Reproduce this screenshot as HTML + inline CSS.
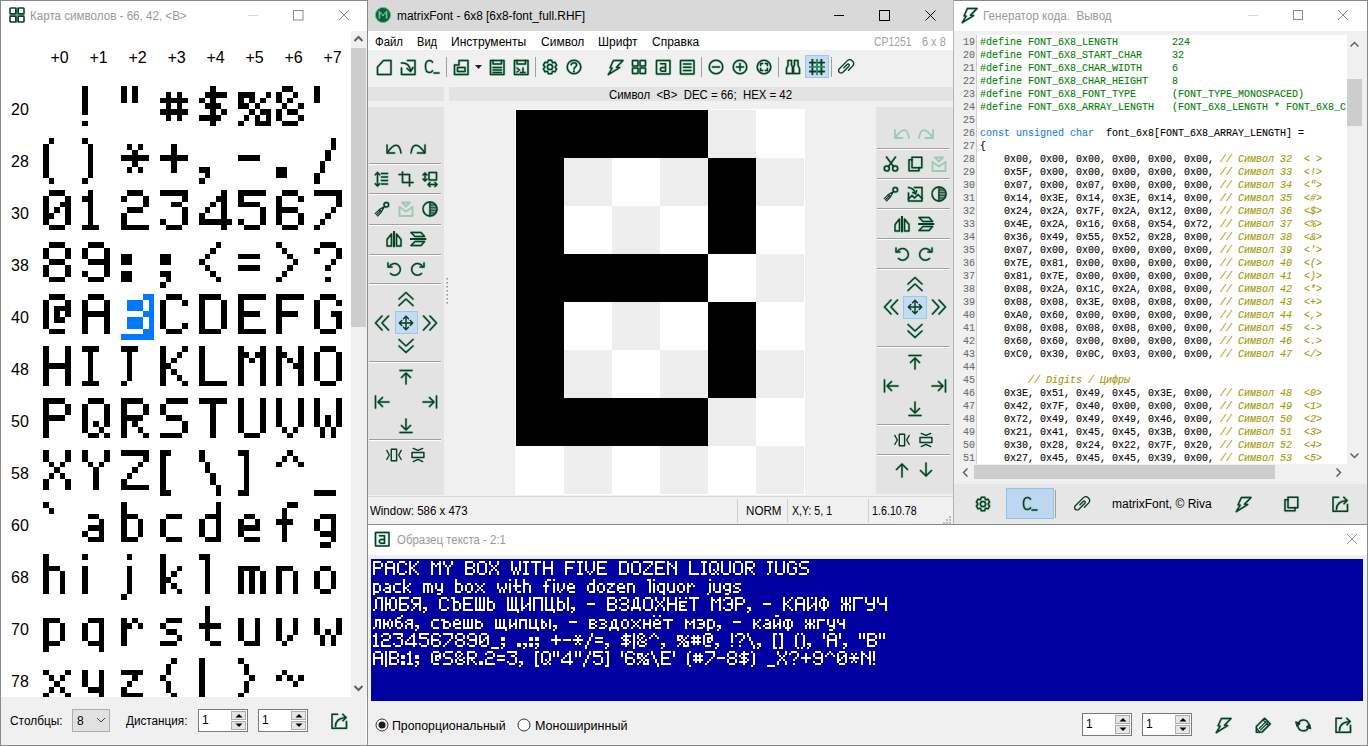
<!DOCTYPE html>
<html><head><meta charset="utf-8"><title>matrixFont</title>
<style>
html,body{margin:0;padding:0;width:1368px;height:746px;overflow:hidden;background:#f0f0f0;}
.a{position:absolute;display:block;}
.t{position:absolute;white-space:nowrap;font-family:"Liberation Sans",sans-serif;}
.m{position:absolute;white-space:pre;font-family:"Liberation Mono",monospace;font-size:10px;line-height:13px;-webkit-text-stroke:0.1px currentColor;}
</style></head><body>
<div class="a" style="left:0px;top:0px;width:367px;height:746px;background:#ffffff;"></div><div class="a" style="left:0px;top:0px;width:367px;height:1px;background:#8a8a8a;"></div><div class="a" style="left:0px;top:0px;width:1px;height:746px;background:#8a8a8a;"></div><div class="a" style="left:367px;top:0px;width:1px;height:746px;background:#8a8a8a;"></div><div class="a" style="left:0px;top:745px;width:368px;height:1px;background:#8a8a8a;"></div><svg class="a" style="left:9px;top:7px;" width="16" height="16" viewBox="0 0 16 16"><rect x="6.5" y="0.5" width="3" height="15" fill="#4ea57a"/><rect x="0.5" y="6.5" width="15" height="3" fill="#4ea57a"/><g fill="none" stroke="#0f3b27" stroke-width="1.6"><rect x="1" y="1" width="5.8" height="5.8" rx="0.8"/><rect x="9.2" y="1" width="5.8" height="5.8" rx="0.8"/><rect x="1" y="9.2" width="5.8" height="5.8" rx="0.8"/><rect x="9.2" y="9.2" width="5.8" height="5.8" rx="0.8"/></g></svg><div class="t" style="left:30px;top:8px;font-size:12px;line-height:16px;color:#999999;transform:scaleX(0.9673);transform-origin:0 0;">Карта символов - 66, 42, &lt;B&gt;</div><div class="a" style="left:248px;top:15px;width:10px;height:1px;background:#d6d6d6;"></div><svg class="a" style="left:292px;top:9px;" width="12" height="12" viewBox="0 0 12 12"><rect x="1.5" y="1.5" width="9.5" height="9.5" fill="none" stroke="#8c8c8c" stroke-width="1"/></svg><svg class="a" style="left:338px;top:9px;" width="12" height="12" viewBox="0 0 12 12"><path d="M1 1L11 11M11 1L1 11" stroke="#8c8c8c" stroke-width="1"/></svg><div class="t" style="left:39.5px;top:49px;width:40px;text-align:center;font-size:16px;line-height:18px;color:#000">+0</div><div class="t" style="left:78.5px;top:49px;width:40px;text-align:center;font-size:16px;line-height:18px;color:#000">+1</div><div class="t" style="left:117.5px;top:49px;width:40px;text-align:center;font-size:16px;line-height:18px;color:#000">+2</div><div class="t" style="left:156.5px;top:49px;width:40px;text-align:center;font-size:16px;line-height:18px;color:#000">+3</div><div class="t" style="left:195.5px;top:49px;width:40px;text-align:center;font-size:16px;line-height:18px;color:#000">+4</div><div class="t" style="left:234.5px;top:49px;width:40px;text-align:center;font-size:16px;line-height:18px;color:#000">+5</div><div class="t" style="left:273.5px;top:49px;width:40px;text-align:center;font-size:16px;line-height:18px;color:#000">+6</div><div class="t" style="left:312.5px;top:49px;width:40px;text-align:center;font-size:16px;line-height:18px;color:#000">+7</div><div class="t" style="left:11px;top:101px;font-size:16px;line-height:18px;color:#000">20</div><div class="t" style="left:11px;top:153px;font-size:16px;line-height:18px;color:#000">28</div><div class="t" style="left:11px;top:205px;font-size:16px;line-height:18px;color:#000">30</div><div class="t" style="left:11px;top:257px;font-size:16px;line-height:18px;color:#000">38</div><div class="t" style="left:11px;top:309px;font-size:16px;line-height:18px;color:#000">40</div><div class="t" style="left:11px;top:361px;font-size:16px;line-height:18px;color:#000">48</div><div class="t" style="left:11px;top:413px;font-size:16px;line-height:18px;color:#000">50</div><div class="t" style="left:11px;top:465px;font-size:16px;line-height:18px;color:#000">58</div><div class="t" style="left:11px;top:517px;font-size:16px;line-height:18px;color:#000">60</div><div class="t" style="left:11px;top:569px;font-size:16px;line-height:18px;color:#000">68</div><div class="t" style="left:11px;top:621px;font-size:16px;line-height:18px;color:#000">70</div><div class="t" style="left:11px;top:673px;font-size:16px;line-height:18px;color:#000">78</div><svg class="a" style="left:1px;top:30px;shape-rendering:crispEdges;" width="350" height="667" viewBox="0 0 350 667"><g transform="translate(-1,-30)"><path d="M82 86h6v6h-6zM82 92h6v6h-6zM82 98h6v5h-6zM82 103h6v6h-6zM82 109h6v6h-6zM82 121h6v5h-6zM121 86h6v6h-6zM121 92h6v6h-6zM121 98h6v5h-6zM132 86h6v6h-6zM132 92h6v6h-6zM132 98h6v5h-6zM160 98h6v5h-6zM160 109h6v6h-6zM166 92h5v6h-5zM166 98h5v5h-5zM166 103h5v6h-5zM166 109h5v6h-5zM166 115h5v6h-5zM171 98h6v5h-6zM171 109h6v6h-6zM177 92h5v6h-5zM177 98h5v5h-5zM177 103h5v6h-5zM177 109h5v6h-5zM177 115h5v6h-5zM182 98h6v5h-6zM182 109h6v6h-6zM199 98h6v5h-6zM199 115h6v6h-6zM205 92h5v6h-5zM205 103h5v6h-5zM205 115h5v6h-5zM210 86h6v6h-6zM210 92h6v6h-6zM210 98h6v5h-6zM210 103h6v6h-6zM210 109h6v6h-6zM210 115h6v6h-6zM210 121h6v5h-6zM216 92h5v6h-5zM216 103h5v6h-5zM216 115h5v6h-5zM221 92h6v6h-6zM221 109h6v6h-6zM238 92h6v6h-6zM238 98h6v5h-6zM238 103h6v6h-6zM238 121h6v5h-6zM244 92h5v6h-5zM244 103h5v6h-5zM244 115h5v6h-5zM249 92h6v6h-6zM249 98h6v5h-6zM249 109h6v6h-6zM255 103h5v6h-5zM255 115h5v6h-5zM255 121h5v5h-5zM260 98h6v5h-6zM260 109h6v6h-6zM260 121h6v5h-6zM266 92h5v6h-5zM266 109h5v6h-5zM266 115h5v6h-5zM266 121h5v5h-5zM276 92h6v6h-6zM276 98h6v5h-6zM276 109h6v6h-6zM276 115h6v6h-6zM282 86h5v6h-5zM282 103h5v6h-5zM282 121h5v5h-5zM287 86h6v6h-6zM287 98h6v5h-6zM287 109h6v6h-6zM287 121h6v5h-6zM293 92h5v6h-5zM293 109h5v6h-5zM293 121h5v5h-5zM298 103h6v6h-6zM298 115h6v6h-6zM314 86h6v6h-6zM314 92h6v6h-6zM314 98h6v5h-6zM43 144h6v6h-6zM43 150h6v5h-6zM43 155h6v6h-6zM43 161h6v6h-6zM43 167h6v6h-6zM43 173h6v5h-6zM49 138h5v6h-5zM49 178h5v6h-5zM82 138h6v6h-6zM82 178h6v6h-6zM88 144h5v6h-5zM88 150h5v5h-5zM88 155h5v6h-5zM88 161h5v6h-5zM88 167h5v6h-5zM88 173h5v5h-5zM121 155h6v6h-6zM127 144h5v6h-5zM127 155h5v6h-5zM127 167h5v6h-5zM132 150h6v5h-6zM132 155h6v6h-6zM132 161h6v6h-6zM138 144h5v6h-5zM138 155h5v6h-5zM138 167h5v6h-5zM143 155h6v6h-6zM160 155h6v6h-6zM166 155h5v6h-5zM171 144h6v6h-6zM171 150h6v5h-6zM171 155h6v6h-6zM171 161h6v6h-6zM171 167h6v6h-6zM177 155h5v6h-5zM182 155h6v6h-6zM199 167h6v6h-6zM199 178h6v6h-6zM205 167h5v6h-5zM205 173h5v5h-5zM238 155h6v6h-6zM244 155h5v6h-5zM249 155h6v6h-6zM255 155h5v6h-5zM276 167h6v6h-6zM276 173h6v5h-6zM282 167h5v6h-5zM282 173h5v5h-5zM314 173h6v5h-6zM314 178h6v6h-6zM320 161h5v6h-5zM320 167h5v6h-5zM325 150h6v5h-6zM325 155h6v6h-6zM331 138h5v6h-5zM331 144h5v6h-5zM43 196h6v6h-6zM43 202h6v5h-6zM43 207h6v6h-6zM43 213h6v6h-6zM43 219h6v6h-6zM49 190h5v6h-5zM49 213h5v6h-5zM49 225h5v5h-5zM54 190h6v6h-6zM54 207h6v6h-6zM54 225h6v5h-6zM60 190h5v6h-5zM60 202h5v5h-5zM60 225h5v5h-5zM65 196h6v6h-6zM65 202h6v5h-6zM65 207h6v6h-6zM65 213h6v6h-6zM65 219h6v6h-6zM82 196h6v6h-6zM82 225h6v5h-6zM88 190h5v6h-5zM88 196h5v6h-5zM88 202h5v5h-5zM88 207h5v6h-5zM88 213h5v6h-5zM88 219h5v6h-5zM88 225h5v5h-5zM93 225h6v5h-6zM121 196h6v6h-6zM121 213h6v6h-6zM121 219h6v6h-6zM121 225h6v5h-6zM127 190h5v6h-5zM127 207h5v6h-5zM127 225h5v5h-5zM132 190h6v6h-6zM132 207h6v6h-6zM132 225h6v5h-6zM138 190h5v6h-5zM138 207h5v6h-5zM138 225h5v5h-5zM143 196h6v6h-6zM143 202h6v5h-6zM143 225h6v5h-6zM160 190h6v6h-6zM160 219h6v6h-6zM166 190h5v6h-5zM166 225h5v5h-5zM171 190h6v6h-6zM171 202h6v5h-6zM171 225h6v5h-6zM177 190h5v6h-5zM177 202h5v5h-5zM177 225h5v5h-5zM182 190h6v6h-6zM182 196h6v6h-6zM182 207h6v6h-6zM182 213h6v6h-6zM182 219h6v6h-6zM199 213h6v6h-6zM199 219h6v6h-6zM205 207h5v6h-5zM205 219h5v6h-5zM210 202h6v5h-6zM210 219h6v6h-6zM216 196h5v6h-5zM216 219h5v6h-5zM221 190h6v6h-6zM221 196h6v6h-6zM221 202h6v5h-6zM221 207h6v6h-6zM221 213h6v6h-6zM221 219h6v6h-6zM221 225h6v5h-6zM227 219h5v6h-5zM238 190h6v6h-6zM238 196h6v6h-6zM238 202h6v5h-6zM238 219h6v6h-6zM244 190h5v6h-5zM244 202h5v5h-5zM244 225h5v5h-5zM249 190h6v6h-6zM249 202h6v5h-6zM249 225h6v5h-6zM255 190h5v6h-5zM255 202h5v5h-5zM255 225h5v5h-5zM260 190h6v6h-6zM260 207h6v6h-6zM260 213h6v6h-6zM260 219h6v6h-6zM276 196h6v6h-6zM276 202h6v5h-6zM276 207h6v6h-6zM276 213h6v6h-6zM276 219h6v6h-6zM282 190h5v6h-5zM282 207h5v6h-5zM282 225h5v5h-5zM287 190h6v6h-6zM287 207h6v6h-6zM287 225h6v5h-6zM293 190h5v6h-5zM293 207h5v6h-5zM293 225h5v5h-5zM298 196h6v6h-6zM298 213h6v6h-6zM298 219h6v6h-6zM314 190h6v6h-6zM314 225h6v5h-6zM320 190h5v6h-5zM320 219h5v6h-5zM325 190h6v6h-6zM325 213h6v6h-6zM331 190h5v6h-5zM331 207h5v6h-5zM336 190h6v6h-6zM336 196h6v6h-6zM336 202h6v5h-6zM43 248h6v6h-6zM43 254h6v5h-6zM43 265h6v6h-6zM43 271h6v6h-6zM49 242h5v6h-5zM49 259h5v6h-5zM49 277h5v5h-5zM54 242h6v6h-6zM54 259h6v6h-6zM54 277h6v5h-6zM60 242h5v6h-5zM60 259h5v6h-5zM60 277h5v5h-5zM65 248h6v6h-6zM65 254h6v5h-6zM65 265h6v6h-6zM65 271h6v6h-6zM82 248h6v6h-6zM82 254h6v5h-6zM82 271h6v6h-6zM88 242h5v6h-5zM88 259h5v6h-5zM88 277h5v5h-5zM93 242h6v6h-6zM93 259h6v6h-6zM93 277h6v5h-6zM99 242h5v6h-5zM99 259h5v6h-5zM99 277h5v5h-5zM104 248h6v6h-6zM104 254h6v5h-6zM104 259h6v6h-6zM104 265h6v6h-6zM104 271h6v6h-6zM121 254h6v5h-6zM121 259h6v6h-6zM121 271h6v6h-6zM121 277h6v5h-6zM127 254h5v5h-5zM127 259h5v6h-5zM127 271h5v6h-5zM127 277h5v5h-5zM160 254h6v5h-6zM160 259h6v6h-6zM160 271h6v6h-6zM160 282h6v6h-6zM166 254h5v5h-5zM166 259h5v6h-5zM166 271h5v6h-5zM166 277h5v5h-5zM199 259h6v6h-6zM205 254h5v5h-5zM205 265h5v6h-5zM210 248h6v6h-6zM210 271h6v6h-6zM216 242h5v6h-5zM216 277h5v5h-5zM238 254h6v5h-6zM238 265h6v6h-6zM244 254h5v5h-5zM244 265h5v6h-5zM249 254h6v5h-6zM249 265h6v6h-6zM255 254h5v5h-5zM255 265h5v6h-5zM276 242h6v6h-6zM276 277h6v5h-6zM282 248h5v6h-5zM282 271h5v6h-5zM287 254h6v5h-6zM287 265h6v6h-6zM293 259h5v6h-5zM314 248h6v6h-6zM320 242h5v6h-5zM325 242h6v6h-6zM325 265h6v6h-6zM325 277h6v5h-6zM331 242h5v6h-5zM331 259h5v6h-5zM336 248h6v6h-6zM336 254h6v5h-6zM43 300h6v6h-6zM43 306h6v5h-6zM43 311h6v6h-6zM43 317h6v6h-6zM43 323h6v6h-6zM49 294h5v6h-5zM49 329h5v5h-5zM54 294h6v6h-6zM54 306h6v5h-6zM54 311h6v6h-6zM54 317h6v6h-6zM54 329h6v5h-6zM60 294h5v6h-5zM60 306h5v5h-5zM60 317h5v6h-5zM60 329h5v5h-5zM65 300h6v6h-6zM65 306h6v5h-6zM65 311h6v6h-6zM82 300h6v6h-6zM82 306h6v5h-6zM82 311h6v6h-6zM82 317h6v6h-6zM82 323h6v6h-6zM82 329h6v5h-6zM88 294h5v6h-5zM88 311h5v6h-5zM93 294h6v6h-6zM93 311h6v6h-6zM99 294h5v6h-5zM99 311h5v6h-5zM104 300h6v6h-6zM104 306h6v5h-6zM104 311h6v6h-6zM104 317h6v6h-6zM104 323h6v6h-6zM104 329h6v5h-6zM160 300h6v6h-6zM160 306h6v5h-6zM160 311h6v6h-6zM160 317h6v6h-6zM160 323h6v6h-6zM166 294h5v6h-5zM166 329h5v5h-5zM171 294h6v6h-6zM171 329h6v5h-6zM177 294h5v6h-5zM177 329h5v5h-5zM182 300h6v6h-6zM182 323h6v6h-6zM199 294h6v6h-6zM199 300h6v6h-6zM199 306h6v5h-6zM199 311h6v6h-6zM199 317h6v6h-6zM199 323h6v6h-6zM199 329h6v5h-6zM205 294h5v6h-5zM205 329h5v5h-5zM210 294h6v6h-6zM210 329h6v5h-6zM216 294h5v6h-5zM216 329h5v5h-5zM221 300h6v6h-6zM221 306h6v5h-6zM221 311h6v6h-6zM221 317h6v6h-6zM221 323h6v6h-6zM238 294h6v6h-6zM238 300h6v6h-6zM238 306h6v5h-6zM238 311h6v6h-6zM238 317h6v6h-6zM238 323h6v6h-6zM238 329h6v5h-6zM244 294h5v6h-5zM244 311h5v6h-5zM244 329h5v5h-5zM249 294h6v6h-6zM249 311h6v6h-6zM249 329h6v5h-6zM255 294h5v6h-5zM255 311h5v6h-5zM255 329h5v5h-5zM260 294h6v6h-6zM260 329h6v5h-6zM276 294h6v6h-6zM276 300h6v6h-6zM276 306h6v5h-6zM276 311h6v6h-6zM276 317h6v6h-6zM276 323h6v6h-6zM276 329h6v5h-6zM282 294h5v6h-5zM282 311h5v6h-5zM287 294h6v6h-6zM287 311h6v6h-6zM293 294h5v6h-5zM293 311h5v6h-5zM298 294h6v6h-6zM314 300h6v6h-6zM314 306h6v5h-6zM314 311h6v6h-6zM314 317h6v6h-6zM314 323h6v6h-6zM320 294h5v6h-5zM320 329h5v5h-5zM325 294h6v6h-6zM325 329h6v5h-6zM331 294h5v6h-5zM331 311h5v6h-5zM331 329h5v5h-5zM336 300h6v6h-6zM336 311h6v6h-6zM336 317h6v6h-6zM336 323h6v6h-6zM43 346h6v6h-6zM43 352h6v6h-6zM43 358h6v5h-6zM43 363h6v6h-6zM43 369h6v6h-6zM43 375h6v6h-6zM43 381h6v5h-6zM49 363h5v6h-5zM54 363h6v6h-6zM60 363h5v6h-5zM65 346h6v6h-6zM65 352h6v6h-6zM65 358h6v5h-6zM65 363h6v6h-6zM65 369h6v6h-6zM65 375h6v6h-6zM65 381h6v5h-6zM82 346h6v6h-6zM82 381h6v5h-6zM88 346h5v6h-5zM88 352h5v6h-5zM88 358h5v5h-5zM88 363h5v6h-5zM88 369h5v6h-5zM88 375h5v6h-5zM88 381h5v5h-5zM93 346h6v6h-6zM93 381h6v5h-6zM121 346h6v6h-6zM121 381h6v5h-6zM127 346h5v6h-5zM127 352h5v6h-5zM127 358h5v5h-5zM127 363h5v6h-5zM127 369h5v6h-5zM127 375h5v6h-5zM132 346h6v6h-6zM160 346h6v6h-6zM160 352h6v6h-6zM160 358h6v5h-6zM160 363h6v6h-6zM160 369h6v6h-6zM160 375h6v6h-6zM160 381h6v5h-6zM166 363h5v6h-5zM171 358h6v5h-6zM171 369h6v6h-6zM177 352h5v6h-5zM177 375h5v6h-5zM182 346h6v6h-6zM182 381h6v5h-6zM199 346h6v6h-6zM199 352h6v6h-6zM199 358h6v5h-6zM199 363h6v6h-6zM199 369h6v6h-6zM199 375h6v6h-6zM199 381h6v5h-6zM205 381h5v5h-5zM210 381h6v5h-6zM216 381h5v5h-5zM221 381h6v5h-6zM238 346h6v6h-6zM238 352h6v6h-6zM238 358h6v5h-6zM238 363h6v6h-6zM238 369h6v6h-6zM238 375h6v6h-6zM238 381h6v5h-6zM244 352h5v6h-5zM249 358h6v5h-6zM255 352h5v6h-5zM260 346h6v6h-6zM260 352h6v6h-6zM260 358h6v5h-6zM260 363h6v6h-6zM260 369h6v6h-6zM260 375h6v6h-6zM260 381h6v5h-6zM276 346h6v6h-6zM276 352h6v6h-6zM276 358h6v5h-6zM276 363h6v6h-6zM276 369h6v6h-6zM276 375h6v6h-6zM276 381h6v5h-6zM282 352h5v6h-5zM287 358h6v5h-6zM293 363h5v6h-5zM298 346h6v6h-6zM298 352h6v6h-6zM298 358h6v5h-6zM298 363h6v6h-6zM298 369h6v6h-6zM298 375h6v6h-6zM298 381h6v5h-6zM314 352h6v6h-6zM314 358h6v5h-6zM314 363h6v6h-6zM314 369h6v6h-6zM314 375h6v6h-6zM320 346h5v6h-5zM320 381h5v5h-5zM325 346h6v6h-6zM325 381h6v5h-6zM331 346h5v6h-5zM331 381h5v5h-5zM336 352h6v6h-6zM336 358h6v5h-6zM336 363h6v6h-6zM336 369h6v6h-6zM336 375h6v6h-6zM43 398h6v6h-6zM43 404h6v6h-6zM43 410h6v5h-6zM43 415h6v6h-6zM43 421h6v6h-6zM43 427h6v6h-6zM43 433h6v5h-6zM49 398h5v6h-5zM49 415h5v6h-5zM54 398h6v6h-6zM54 415h6v6h-6zM60 398h5v6h-5zM60 415h5v6h-5zM65 404h6v6h-6zM65 410h6v5h-6zM82 404h6v6h-6zM82 410h6v5h-6zM82 415h6v6h-6zM82 421h6v6h-6zM82 427h6v6h-6zM88 398h5v6h-5zM88 433h5v5h-5zM93 398h6v6h-6zM93 421h6v6h-6zM93 433h6v5h-6zM99 398h5v6h-5zM99 427h5v6h-5zM104 404h6v6h-6zM104 410h6v5h-6zM104 415h6v6h-6zM104 421h6v6h-6zM104 433h6v5h-6zM121 398h6v6h-6zM121 404h6v6h-6zM121 410h6v5h-6zM121 415h6v6h-6zM121 421h6v6h-6zM121 427h6v6h-6zM121 433h6v5h-6zM127 398h5v6h-5zM127 415h5v6h-5zM132 398h6v6h-6zM132 415h6v6h-6zM132 421h6v6h-6zM138 398h5v6h-5zM138 415h5v6h-5zM138 427h5v6h-5zM143 404h6v6h-6zM143 410h6v5h-6zM143 433h6v5h-6zM160 404h6v6h-6zM160 410h6v5h-6zM160 433h6v5h-6zM166 398h5v6h-5zM166 415h5v6h-5zM166 433h5v5h-5zM171 398h6v6h-6zM171 415h6v6h-6zM171 433h6v5h-6zM177 398h5v6h-5zM177 415h5v6h-5zM177 433h5v5h-5zM182 398h6v6h-6zM182 421h6v6h-6zM182 427h6v6h-6zM199 398h6v6h-6zM205 398h5v6h-5zM210 398h6v6h-6zM210 404h6v6h-6zM210 410h6v5h-6zM210 415h6v6h-6zM210 421h6v6h-6zM210 427h6v6h-6zM210 433h6v5h-6zM216 398h5v6h-5zM221 398h6v6h-6zM238 398h6v6h-6zM238 404h6v6h-6zM238 410h6v5h-6zM238 415h6v6h-6zM238 421h6v6h-6zM238 427h6v6h-6zM244 433h5v5h-5zM249 433h6v5h-6zM255 433h5v5h-5zM260 398h6v6h-6zM260 404h6v6h-6zM260 410h6v5h-6zM260 415h6v6h-6zM260 421h6v6h-6zM260 427h6v6h-6zM276 398h6v6h-6zM276 404h6v6h-6zM276 410h6v5h-6zM276 415h6v6h-6zM276 421h6v6h-6zM282 427h5v6h-5zM287 433h6v5h-6zM293 427h5v6h-5zM298 398h6v6h-6zM298 404h6v6h-6zM298 410h6v5h-6zM298 415h6v6h-6zM298 421h6v6h-6zM314 398h6v6h-6zM314 404h6v6h-6zM314 410h6v5h-6zM314 415h6v6h-6zM314 421h6v6h-6zM320 427h5v6h-5zM320 433h5v5h-5zM325 415h6v6h-6zM325 421h6v6h-6zM331 427h5v6h-5zM331 433h5v5h-5zM336 398h6v6h-6zM336 404h6v6h-6zM336 410h6v5h-6zM336 415h6v6h-6zM336 421h6v6h-6zM43 450h6v6h-6zM43 456h6v6h-6zM43 479h6v6h-6zM43 485h6v5h-6zM49 462h5v5h-5zM49 473h5v6h-5zM54 467h6v6h-6zM60 462h5v5h-5zM60 473h5v6h-5zM65 450h6v6h-6zM65 456h6v6h-6zM65 479h6v6h-6zM65 485h6v5h-6zM82 450h6v6h-6zM82 456h6v6h-6zM88 462h5v5h-5zM93 467h6v6h-6zM93 473h6v6h-6zM93 479h6v6h-6zM93 485h6v5h-6zM99 462h5v5h-5zM104 450h6v6h-6zM104 456h6v6h-6zM121 450h6v6h-6zM121 479h6v6h-6zM121 485h6v5h-6zM127 450h5v6h-5zM127 473h5v6h-5zM127 485h5v5h-5zM132 450h6v6h-6zM132 467h6v6h-6zM132 485h6v5h-6zM138 450h5v6h-5zM138 462h5v5h-5zM138 485h5v5h-5zM143 450h6v6h-6zM143 456h6v6h-6zM143 485h6v5h-6zM160 450h6v6h-6zM160 456h6v6h-6zM160 462h6v5h-6zM160 467h6v6h-6zM160 473h6v6h-6zM160 479h6v6h-6zM160 485h6v5h-6zM160 490h6v6h-6zM166 450h5v6h-5zM166 490h5v6h-5zM199 450h6v6h-6zM199 456h6v6h-6zM205 462h5v5h-5zM205 467h5v6h-5zM210 473h6v6h-6zM210 479h6v6h-6zM216 485h5v5h-5zM216 490h5v6h-5zM238 450h6v6h-6zM238 490h6v6h-6zM244 450h5v6h-5zM244 456h5v6h-5zM244 462h5v5h-5zM244 467h5v6h-5zM244 473h5v6h-5zM244 479h5v6h-5zM244 485h5v5h-5zM244 490h5v6h-5zM276 462h6v5h-6zM282 456h5v6h-5zM287 450h6v6h-6zM293 456h5v6h-5zM298 462h6v5h-6zM314 490h6v6h-6zM320 490h5v6h-5zM325 490h6v6h-6zM331 490h5v6h-5zM43 502h6v6h-6zM49 508h5v6h-5zM82 531h6v6h-6zM88 514h5v5h-5zM88 525h5v6h-5zM88 537h5v5h-5zM93 514h6v5h-6zM93 525h6v6h-6zM93 537h6v5h-6zM99 519h5v6h-5zM99 525h5v6h-5zM99 531h5v6h-5zM99 537h5v5h-5zM121 502h6v6h-6zM121 508h6v6h-6zM121 514h6v5h-6zM121 519h6v6h-6zM121 525h6v6h-6zM121 531h6v6h-6zM121 537h6v5h-6zM127 514h5v5h-5zM127 537h5v5h-5zM132 514h6v5h-6zM132 537h6v5h-6zM138 519h5v6h-5zM138 525h5v6h-5zM138 531h5v6h-5zM160 519h6v6h-6zM160 525h6v6h-6zM160 531h6v6h-6zM166 514h5v5h-5zM166 537h5v5h-5zM171 514h6v5h-6zM171 537h6v5h-6zM177 514h5v5h-5zM177 537h5v5h-5zM199 519h6v6h-6zM199 525h6v6h-6zM199 531h6v6h-6zM205 514h5v5h-5zM205 537h5v5h-5zM210 514h6v5h-6zM210 537h6v5h-6zM216 502h5v6h-5zM216 508h5v6h-5zM216 514h5v5h-5zM216 519h5v6h-5zM216 525h5v6h-5zM216 531h5v6h-5zM216 537h5v5h-5zM238 519h6v6h-6zM238 525h6v6h-6zM238 531h6v6h-6zM244 514h5v5h-5zM244 525h5v6h-5zM244 537h5v5h-5zM249 514h6v5h-6zM249 525h6v6h-6zM249 537h6v5h-6zM255 519h5v6h-5zM255 525h5v6h-5zM255 537h5v5h-5zM276 519h6v6h-6zM282 508h5v6h-5zM282 514h5v5h-5zM282 519h5v6h-5zM282 525h5v6h-5zM282 531h5v6h-5zM282 537h5v5h-5zM287 502h6v6h-6zM287 519h6v6h-6zM293 502h5v6h-5zM314 519h6v6h-6zM314 525h6v6h-6zM320 514h5v5h-5zM320 531h5v6h-5zM320 542h5v6h-5zM325 514h6v5h-6zM325 531h6v6h-6zM325 542h6v6h-6zM331 514h5v5h-5zM331 519h5v6h-5zM331 525h5v6h-5zM331 531h5v6h-5zM331 537h5v5h-5zM43 554h6v6h-6zM43 560h6v6h-6zM43 566h6v5h-6zM43 571h6v6h-6zM43 577h6v6h-6zM43 583h6v6h-6zM43 589h6v5h-6zM49 566h5v5h-5zM54 566h6v5h-6zM60 571h5v6h-5zM60 577h5v6h-5zM60 583h5v6h-5zM60 589h5v5h-5zM82 554h6v6h-6zM82 566h6v5h-6zM82 571h6v6h-6zM82 577h6v6h-6zM82 583h6v6h-6zM82 589h6v5h-6zM121 594h6v6h-6zM127 554h5v6h-5zM127 566h5v5h-5zM127 571h5v6h-5zM127 577h5v6h-5zM127 583h5v6h-5zM127 589h5v5h-5zM160 554h6v6h-6zM160 560h6v6h-6zM160 566h6v5h-6zM160 571h6v6h-6zM160 577h6v6h-6zM160 583h6v6h-6zM160 589h6v5h-6zM166 577h5v6h-5zM171 571h6v6h-6zM171 583h6v6h-6zM177 566h5v5h-5zM177 589h5v5h-5zM199 554h6v6h-6zM205 554h5v6h-5zM205 560h5v6h-5zM205 566h5v5h-5zM205 571h5v6h-5zM205 577h5v6h-5zM205 583h5v6h-5zM205 589h5v5h-5zM238 566h6v5h-6zM238 571h6v6h-6zM238 577h6v6h-6zM238 583h6v6h-6zM238 589h6v5h-6zM244 566h5v5h-5zM249 566h6v5h-6zM249 571h6v6h-6zM249 577h6v6h-6zM249 583h6v6h-6zM249 589h6v5h-6zM255 566h5v5h-5zM260 571h6v6h-6zM260 577h6v6h-6zM260 583h6v6h-6zM260 589h6v5h-6zM276 566h6v5h-6zM276 571h6v6h-6zM276 577h6v6h-6zM276 583h6v6h-6zM276 589h6v5h-6zM282 566h5v5h-5zM287 566h6v5h-6zM293 571h5v6h-5zM293 577h5v6h-5zM293 583h5v6h-5zM293 589h5v5h-5zM314 571h6v6h-6zM314 577h6v6h-6zM314 583h6v6h-6zM320 566h5v5h-5zM320 589h5v5h-5zM325 566h6v5h-6zM325 589h6v5h-6zM331 571h5v6h-5zM331 577h5v6h-5zM331 583h5v6h-5zM43 618h6v5h-6zM43 623h6v6h-6zM43 629h6v6h-6zM43 635h6v6h-6zM43 641h6v5h-6zM43 646h6v6h-6zM49 618h5v5h-5zM49 641h5v5h-5zM54 618h6v5h-6zM54 641h6v5h-6zM60 623h5v6h-5zM60 629h5v6h-5zM60 635h5v6h-5zM82 623h6v6h-6zM82 629h6v6h-6zM82 635h6v6h-6zM88 618h5v5h-5zM88 641h5v5h-5zM93 618h6v5h-6zM93 641h6v5h-6zM99 618h5v5h-5zM99 623h5v6h-5zM99 629h5v6h-5zM99 635h5v6h-5zM99 641h5v5h-5zM99 646h5v6h-5zM121 618h6v5h-6zM121 623h6v6h-6zM121 629h6v6h-6zM121 635h6v6h-6zM121 641h6v5h-6zM127 623h5v6h-5zM132 618h6v5h-6zM138 623h5v6h-5zM160 623h6v6h-6zM160 641h6v5h-6zM166 618h5v5h-5zM166 629h5v6h-5zM166 641h5v5h-5zM171 618h6v5h-6zM171 629h6v6h-6zM171 641h6v5h-6zM177 618h5v5h-5zM177 635h5v6h-5zM199 623h6v6h-6zM205 606h5v6h-5zM205 612h5v6h-5zM205 618h5v5h-5zM205 623h5v6h-5zM205 629h5v6h-5zM205 635h5v6h-5zM210 623h6v6h-6zM210 641h6v5h-6zM216 623h5v6h-5zM216 641h5v5h-5zM238 618h6v5h-6zM238 623h6v6h-6zM238 629h6v6h-6zM238 635h6v6h-6zM244 641h5v5h-5zM249 641h6v5h-6zM255 618h5v5h-5zM255 623h5v6h-5zM255 629h5v6h-5zM255 635h5v6h-5zM255 641h5v5h-5zM276 618h6v5h-6zM276 623h6v6h-6zM276 629h6v6h-6zM276 635h6v6h-6zM282 641h5v5h-5zM287 635h6v6h-6zM293 618h5v5h-5zM293 623h5v6h-5zM293 629h5v6h-5zM314 618h6v5h-6zM314 623h6v6h-6zM314 629h6v6h-6zM320 635h5v6h-5zM320 641h5v5h-5zM325 629h6v6h-6zM331 635h5v6h-5zM331 641h5v5h-5zM336 618h6v5h-6zM336 623h6v6h-6zM336 629h6v6h-6zM43 670h6v5h-6zM43 693h6v5h-6zM49 675h5v6h-5zM49 687h5v6h-5zM54 681h6v6h-6zM60 675h5v6h-5zM60 687h5v6h-5zM65 670h6v5h-6zM65 693h6v5h-6zM82 670h6v5h-6zM82 675h6v6h-6zM82 681h6v6h-6zM88 687h5v6h-5zM88 698h5v6h-5zM93 687h6v6h-6zM93 698h6v6h-6zM99 670h5v5h-5zM99 675h5v6h-5zM99 681h5v6h-5zM99 687h5v6h-5zM99 693h5v5h-5zM121 670h6v5h-6zM121 687h6v6h-6zM121 693h6v5h-6zM127 670h5v5h-5zM127 681h5v6h-5zM127 693h5v5h-5zM132 670h6v5h-6zM132 675h6v6h-6zM132 693h6v5h-6zM138 670h5v5h-5zM138 693h5v5h-5zM160 675h6v6h-6zM166 664h5v6h-5zM166 670h5v5h-5zM166 681h5v6h-5zM166 687h5v6h-5zM171 658h6v6h-6zM171 693h6v5h-6zM199 658h6v6h-6zM199 664h6v6h-6zM199 670h6v5h-6zM199 675h6v6h-6zM199 681h6v6h-6zM199 687h6v6h-6zM199 693h6v5h-6zM199 698h6v6h-6zM238 658h6v6h-6zM238 693h6v5h-6zM244 664h5v6h-5zM244 670h5v5h-5zM244 681h5v6h-5zM244 687h5v6h-5zM249 675h6v6h-6zM276 675h6v6h-6zM282 670h5v5h-5zM287 675h6v6h-6zM293 681h5v6h-5zM298 675h6v6h-6z" fill="#000"/><path d="M121 334h6v6h-6zM127 300h5v6h-5zM127 306h5v5h-5zM127 317h5v6h-5zM127 323h5v6h-5zM127 334h5v6h-5zM132 300h6v6h-6zM132 306h6v5h-6zM132 317h6v6h-6zM132 323h6v6h-6zM132 334h6v6h-6zM138 300h5v6h-5zM138 306h5v5h-5zM138 317h5v6h-5zM138 323h5v6h-5zM138 334h5v6h-5zM143 294h6v6h-6zM143 311h6v6h-6zM143 329h6v5h-6zM143 334h6v6h-6zM149 294h5v6h-5zM149 300h5v6h-5zM149 306h5v5h-5zM149 311h5v6h-5zM149 317h5v6h-5zM149 323h5v6h-5zM149 329h5v5h-5zM149 334h5v6h-5z" fill="#0078ff"/></g></svg><div class="a" style="left:351px;top:31px;width:16px;height:666px;background:#f0f0f0;"></div><div class="a" style="left:351px;top:48px;width:15px;height:279px;background:#cdcdcd;"></div><svg class="a" style="left:353px;top:34px;" width="11" height="10" viewBox="0 0 11 10"><path d="M1.5 7L5.5 3L9.5 7" fill="none" stroke="#606060" stroke-width="2"/></svg><svg class="a" style="left:353px;top:683px;" width="11" height="10" viewBox="0 0 11 10"><path d="M1.5 3L5.5 7L9.5 3" fill="none" stroke="#606060" stroke-width="2"/></svg><div class="a" style="left:1px;top:697px;width:365px;height:48px;background:#f0f0f0;"></div><div class="t" style="left:9.5px;top:713px;font-size:12px;line-height:16px;color:#000;transform:scaleX(0.9898);transform-origin:0 0;">Столбцы:</div><div class="a" style="left:72px;top:709px;width:38px;height:23px;background:#e1e1e1;border:1px solid #adadad;box-sizing:border-box;"></div><div class="t" style="left:77px;top:713px;font-size:12px;line-height:16px;color:#000;">8</div><svg class="a" style="left:96px;top:716px;" width="10" height="8" viewBox="0 0 10 8"><path d="M1 2L5 6L9 2" fill="none" stroke="#444" stroke-width="1"/></svg><div class="t" style="left:126px;top:713px;font-size:12px;line-height:16px;color:#000;transform:scaleX(0.9763);transform-origin:0 0;">Дистанция:</div><div class="a" style="left:198px;top:709px;width:50px;height:23px;background:#ffffff;border:1px solid #7a7a7a;box-sizing:border-box;"></div><div class="t" style="left:202px;top:712px;font-size:12px;line-height:16px;color:#000;">1</div><div class="a" style="left:231px;top:711px;width:15px;height:9px;background:#e6e6e6;border:1px solid #adadad;box-sizing:border-box;"></div><div class="a" style="left:231px;top:721px;width:15px;height:9px;background:#e6e6e6;border:1px solid #adadad;box-sizing:border-box;"></div><svg class="a" style="left:235px;top:713px;" width="8" height="5" viewBox="0 0 8 5"><path d="M0.5 4.5L4 1L7.5 4.5Z" fill="#000"/></svg><svg class="a" style="left:235px;top:723px;" width="8" height="5" viewBox="0 0 8 5"><path d="M0.5 0.5L4 4L7.5 0.5Z" fill="#000"/></svg><div class="a" style="left:258px;top:709px;width:50px;height:23px;background:#ffffff;border:1px solid #7a7a7a;box-sizing:border-box;"></div><div class="t" style="left:262px;top:712px;font-size:12px;line-height:16px;color:#000;">1</div><div class="a" style="left:291px;top:711px;width:15px;height:9px;background:#e6e6e6;border:1px solid #adadad;box-sizing:border-box;"></div><div class="a" style="left:291px;top:721px;width:15px;height:9px;background:#e6e6e6;border:1px solid #adadad;box-sizing:border-box;"></div><svg class="a" style="left:295px;top:713px;" width="8" height="5" viewBox="0 0 8 5"><path d="M0.5 4.5L4 1L7.5 4.5Z" fill="#000"/></svg><svg class="a" style="left:295px;top:723px;" width="8" height="5" viewBox="0 0 8 5"><path d="M0.5 0.5L4 4L7.5 0.5Z" fill="#000"/></svg><svg class="a" style="left:331px;top:713px;" width="17" height="17" viewBox="0 0 17 17"><g fill="none" stroke="#56c08a" stroke-opacity="0.45" stroke-width="2.8" stroke-linecap="round" stroke-linejoin="round"><path d="M6.5 1.3H1V15.3H15.5V8.5"/><path d="M4.5 13.5C4.5 8.5 7.5 5 14.8 4.5"/><path d="M11.8 1.3L15 4.5L12 7.8"/></g><g fill="none" stroke="#0f3b27" stroke-width="1.5" stroke-linecap="round" stroke-linejoin="round"><path d="M6.5 1.3H1V15.3H15.5V8.5"/><path d="M4.5 13.5C4.5 8.5 7.5 5 14.8 4.5"/><path d="M11.8 1.3L15 4.5L12 7.8"/></g></svg><div class="a" style="left:367px;top:0px;width:586px;height:525px;background:#f0f0f0;"></div><div class="a" style="left:367px;top:0px;width:586px;height:31px;background:#d9d9d9;"></div><svg class="a" style="left:374px;top:6px;" width="18" height="18" viewBox="0 0 18 18"><circle cx="9" cy="9" r="7.6" fill="#145c3e" stroke="#4fc48a" stroke-width="0.9"/><g fill="#5ccf96"><rect x="4.6" y="5" width="1.6" height="7.6"/><rect x="11.8" y="5" width="1.6" height="7.6"/><rect x="6.2" y="6.6" width="1.7" height="1.6"/><rect x="10.1" y="6.6" width="1.7" height="1.6"/><rect x="7.9" y="8.2" width="2.2" height="1.7"/></g></svg><div class="t" style="left:397px;top:8px;font-size:12px;line-height:16px;color:#000;transform:scaleX(0.9894);transform-origin:0 0;">matrixFont - 6x8 [6x8-font_full.RHF]</div><div class="a" style="left:834px;top:15px;width:10px;height:1px;background:#000;"></div><svg class="a" style="left:879px;top:10px;" width="11" height="11" viewBox="0 0 11 11"><rect x="0.5" y="0.5" width="10" height="10" fill="none" stroke="#000" stroke-width="1"/></svg><svg class="a" style="left:925px;top:10px;" width="11" height="11" viewBox="0 0 11 11"><path d="M0.5 0.5L10.5 10.5M10.5 0.5L0.5 10.5" stroke="#000" stroke-width="1"/></svg><div class="a" style="left:367px;top:31px;width:586px;height:19px;background:#ffffff;"></div><div class="t" style="left:374.5px;top:33.5px;font-size:12px;line-height:16px;color:#000;transform:scaleX(0.9492);transform-origin:0 0;">Файл</div><div class="t" style="left:417.2px;top:33.5px;font-size:12px;line-height:16px;color:#000;transform:scaleX(0.9215);transform-origin:0 0;">Вид</div><div class="t" style="left:451.2px;top:33.5px;font-size:12px;line-height:16px;color:#000;transform:scaleX(1.0052);transform-origin:0 0;">Инструменты</div><div class="t" style="left:541px;top:33.5px;font-size:12px;line-height:16px;color:#000;transform:scaleX(1.0008);transform-origin:0 0;">Символ</div><div class="t" style="left:598px;top:33.5px;font-size:12px;line-height:16px;color:#000;transform:scaleX(1.0004);transform-origin:0 0;">Шрифт</div><div class="t" style="left:652px;top:33.5px;font-size:12px;line-height:16px;color:#000;transform:scaleX(1.0005);transform-origin:0 0;">Справка</div><div class="t" style="left:874px;top:33.5px;font-size:12px;line-height:16px;color:#a0a0a0;transform:scaleX(0.8626);transform-origin:0 0;">CP1251</div><div class="t" style="left:922px;top:33.5px;font-size:12px;line-height:16px;color:#a0a0a0;transform:scaleX(0.9115);transform-origin:0 0;">6 x 8</div><svg class="a" style="left:376px;top:59px;" width="17" height="17" viewBox="0 0 17 17"><g fill="none" stroke="#56c08a" stroke-opacity="0.45" stroke-width="2.8" stroke-linecap="round" stroke-linejoin="round"><path d="M1.5 8L7.5 1.5H15V15.5H1.5Z"/></g><g fill="none" stroke="#0f3b27" stroke-width="1.5" stroke-linecap="round" stroke-linejoin="round"><path d="M1.5 8L7.5 1.5H15V15.5H1.5Z"/></g></svg><svg class="a" style="left:400px;top:59px;" width="17" height="17" viewBox="0 0 17 17"><g fill="none" stroke="#56c08a" stroke-opacity="0.45" stroke-width="2.8" stroke-linecap="round" stroke-linejoin="round"><path d="M7.5 1.5H15V15.5H1.5V9"/><path d="M1.5 4C6 3.5 9.5 6 10.5 11.5"/><path d="M7 9.5L10.5 12.5L13 8.5"/></g><g fill="none" stroke="#0f3b27" stroke-width="1.5" stroke-linecap="round" stroke-linejoin="round"><path d="M7.5 1.5H15V15.5H1.5V9"/><path d="M1.5 4C6 3.5 9.5 6 10.5 11.5"/><path d="M7 9.5L10.5 12.5L13 8.5"/></g></svg><svg class="a" style="left:423px;top:59px;" width="17" height="17" viewBox="0 0 17 17"><g fill="none" stroke="#56c08a" stroke-opacity="0.45" stroke-width="2.8" stroke-linecap="round" stroke-linejoin="round"><path d="M9.5 3.2C8.8 2 7.8 1.5 6.5 1.5C4 1.5 2.5 3.5 2.5 7.5C2.5 11.5 4 13.5 6.5 13.5C7.8 13.5 8.8 13 9.5 11.8"/><path d="M11 14H16"/></g><g fill="none" stroke="#0f3b27" stroke-width="1.5" stroke-linecap="round" stroke-linejoin="round"><path d="M9.5 3.2C8.8 2 7.8 1.5 6.5 1.5C4 1.5 2.5 3.5 2.5 7.5C2.5 11.5 4 13.5 6.5 13.5C7.8 13.5 8.8 13 9.5 11.8"/><path d="M11 14H16"/></g></svg><div class="a" style="left:446px;top:57px;width:1px;height:20px;background:#a0a0a0;"></div><svg class="a" style="left:453px;top:59px;" width="17" height="17" viewBox="0 0 17 17"><g fill="none" stroke="#56c08a" stroke-opacity="0.45" stroke-width="2.8" stroke-linecap="round" stroke-linejoin="round"><path d="M1.5 15.5V6H6V1.5H15V15.5Z"/><path d="M4.5 8.5H12V12.5H4.5Z"/></g><g fill="none" stroke="#0f3b27" stroke-width="1.5" stroke-linecap="round" stroke-linejoin="round"><path d="M1.5 15.5V6H6V1.5H15V15.5Z"/><path d="M4.5 8.5H12V12.5H4.5Z"/></g></svg><svg class="a" style="left:475px;top:65px;" width="8" height="5" viewBox="0 0 8 5"><path d="M0 0H7L3.5 4Z" fill="#2b1a2a"/></svg><svg class="a" style="left:489px;top:59px;" width="17" height="17" viewBox="0 0 17 17"><g fill="none" stroke="#56c08a" stroke-opacity="0.45" stroke-width="2.8" stroke-linecap="round" stroke-linejoin="round"><path d="M1.5 1.5H15V15.5H1.5Z"/><path d="M4 1.5V5H12.5V1.5"/><path d="M4 8.5H12.5M4 11H12.5M4 13.5H12.5"/></g><g fill="none" stroke="#0f3b27" stroke-width="1.5" stroke-linecap="round" stroke-linejoin="round"><path d="M1.5 1.5H15V15.5H1.5Z"/><path d="M4 1.5V5H12.5V1.5"/><path d="M4 8.5H12.5M4 11H12.5M4 13.5H12.5"/></g></svg><svg class="a" style="left:513px;top:59px;" width="17" height="17" viewBox="0 0 17 17"><g fill="none" stroke="#56c08a" stroke-opacity="0.45" stroke-width="2.8" stroke-linecap="round" stroke-linejoin="round"><path d="M1.5 1.5H15V15.5H1.5Z"/><path d="M4 1.5V5H12.5V1.5"/><path d="M4 9L6.5 11L4 13M7.5 13.5H12M10 9V13.5"/></g><g fill="none" stroke="#0f3b27" stroke-width="1.5" stroke-linecap="round" stroke-linejoin="round"><path d="M1.5 1.5H15V15.5H1.5Z"/><path d="M4 1.5V5H12.5V1.5"/><path d="M4 9L6.5 11L4 13M7.5 13.5H12M10 9V13.5"/></g></svg><div class="a" style="left:535px;top:57px;width:1px;height:20px;background:#a0a0a0;"></div><svg class="a" style="left:542px;top:59px;" width="17" height="17" viewBox="0 0 17 17"><g fill="none" stroke="#56c08a" stroke-opacity="0.45" stroke-width="2.8" stroke-linecap="round" stroke-linejoin="round"><path d="M6.33 1.30L9.67 1.30L10.50 3.67L12.96 3.21L14.63 6.10L13.00 8.00L14.63 9.90L12.96 12.79L10.50 12.33L9.67 14.70L6.33 14.70L5.50 12.33L3.04 12.79L1.37 9.90L3.00 8.00L1.37 6.10L3.04 3.21L5.50 3.67Z"/><circle cx="8" cy="8" r="2.6"/></g><g fill="none" stroke="#0f3b27" stroke-width="1.5" stroke-linecap="round" stroke-linejoin="round"><path d="M6.33 1.30L9.67 1.30L10.50 3.67L12.96 3.21L14.63 6.10L13.00 8.00L14.63 9.90L12.96 12.79L10.50 12.33L9.67 14.70L6.33 14.70L5.50 12.33L3.04 12.79L1.37 9.90L3.00 8.00L1.37 6.10L3.04 3.21L5.50 3.67Z"/><circle cx="8" cy="8" r="2.6"/></g></svg><svg class="a" style="left:566px;top:59px;" width="17" height="17" viewBox="0 0 17 17"><g fill="none" stroke="#56c08a" stroke-opacity="0.45" stroke-width="2.8" stroke-linecap="round" stroke-linejoin="round"><circle cx="8" cy="8" r="6.8"/><path d="M5.2 5.6C5.8 4.3 6.8 3.8 8 3.8C9.5 3.8 10.6 4.8 10.6 5.9C10.6 7.6 8.4 7.8 8 10"/><path d="M7.9 12.2V12.5" stroke-width="2"/></g><g fill="none" stroke="#0f3b27" stroke-width="1.5" stroke-linecap="round" stroke-linejoin="round"><circle cx="8" cy="8" r="6.8"/><path d="M5.2 5.6C5.8 4.3 6.8 3.8 8 3.8C9.5 3.8 10.6 4.8 10.6 5.9C10.6 7.6 8.4 7.8 8 10"/><path d="M7.9 12.2V12.5" stroke-width="2"/></g></svg><svg class="a" style="left:607px;top:59px;" width="17" height="17" viewBox="0 0 17 17"><g fill="none" stroke="#56c08a" stroke-opacity="0.45" stroke-width="2.8" stroke-linecap="round" stroke-linejoin="round"><path d="M6.4 1.5H16L9.5 8.3L12.6 8.6L1.3 15.6L5.2 9.2L3.1 8.8Z"/></g><g fill="none" stroke="#0f3b27" stroke-width="1.5" stroke-linecap="round" stroke-linejoin="round"><path d="M6.4 1.5H16L9.5 8.3L12.6 8.6L1.3 15.6L5.2 9.2L3.1 8.8Z"/></g></svg><svg class="a" style="left:631px;top:59px;" width="17" height="17" viewBox="0 0 17 17"><g fill="none" stroke="#56c08a" stroke-opacity="0.45" stroke-width="2.8" stroke-linecap="round" stroke-linejoin="round"><rect x="1.5" y="1.5" width="5.5" height="5.5" rx="0.5"/><rect x="9" y="1.5" width="5.5" height="5.5" rx="0.5"/><rect x="1.5" y="9" width="5.5" height="5.5" rx="0.5"/><rect x="9" y="9" width="5.5" height="5.5" rx="0.5"/></g><g fill="none" stroke="#0f3b27" stroke-width="1.5" stroke-linecap="round" stroke-linejoin="round"><rect x="1.5" y="1.5" width="5.5" height="5.5" rx="0.5"/><rect x="9" y="1.5" width="5.5" height="5.5" rx="0.5"/><rect x="1.5" y="9" width="5.5" height="5.5" rx="0.5"/><rect x="9" y="9" width="5.5" height="5.5" rx="0.5"/></g></svg><svg class="a" style="left:655px;top:59px;" width="17" height="17" viewBox="0 0 17 17"><g fill="none" stroke="#56c08a" stroke-opacity="0.45" stroke-width="2.8" stroke-linecap="round" stroke-linejoin="round"><rect x="1.5" y="1.5" width="13.5" height="13.5" rx="0.5"/><path d="M5.5 4.8H10.5V12.2H7.2A1.8 1.8 0 0 1 7.2 8.6H10.5"/></g><g fill="none" stroke="#0f3b27" stroke-width="1.5" stroke-linecap="round" stroke-linejoin="round"><rect x="1.5" y="1.5" width="13.5" height="13.5" rx="0.5"/><path d="M5.5 4.8H10.5V12.2H7.2A1.8 1.8 0 0 1 7.2 8.6H10.5"/></g></svg><svg class="a" style="left:679px;top:59px;" width="17" height="17" viewBox="0 0 17 17"><g fill="none" stroke="#56c08a" stroke-opacity="0.45" stroke-width="2.8" stroke-linecap="round" stroke-linejoin="round"><rect x="1.5" y="1.5" width="13.5" height="13.5" rx="0.5"/><path d="M4.5 5H12M4.5 8.3H12M4.5 11.6H12"/></g><g fill="none" stroke="#0f3b27" stroke-width="1.5" stroke-linecap="round" stroke-linejoin="round"><rect x="1.5" y="1.5" width="13.5" height="13.5" rx="0.5"/><path d="M4.5 5H12M4.5 8.3H12M4.5 11.6H12"/></g></svg><div class="a" style="left:701px;top:57px;width:1px;height:20px;background:#a0a0a0;"></div><svg class="a" style="left:708px;top:59px;" width="17" height="17" viewBox="0 0 17 17"><g fill="none" stroke="#56c08a" stroke-opacity="0.45" stroke-width="2.8" stroke-linecap="round" stroke-linejoin="round"><circle cx="8" cy="8" r="6.8"/><path d="M4.5 8H11.5"/></g><g fill="none" stroke="#0f3b27" stroke-width="1.5" stroke-linecap="round" stroke-linejoin="round"><circle cx="8" cy="8" r="6.8"/><path d="M4.5 8H11.5"/></g></svg><svg class="a" style="left:732px;top:59px;" width="17" height="17" viewBox="0 0 17 17"><g fill="none" stroke="#56c08a" stroke-opacity="0.45" stroke-width="2.8" stroke-linecap="round" stroke-linejoin="round"><circle cx="8" cy="8" r="6.8"/><path d="M4.5 8H11.5M8 4.5V11.5"/></g><g fill="none" stroke="#0f3b27" stroke-width="1.5" stroke-linecap="round" stroke-linejoin="round"><circle cx="8" cy="8" r="6.8"/><path d="M4.5 8H11.5M8 4.5V11.5"/></g></svg><svg class="a" style="left:756px;top:59px;" width="17" height="17" viewBox="0 0 17 17"><g fill="none" stroke="#56c08a" stroke-opacity="0.45" stroke-width="2.8" stroke-linecap="round" stroke-linejoin="round"><circle cx="8" cy="8" r="6.8"/><path d="M4.6 6.6V4.6H6.6M9.4 4.6H11.4V6.6M11.4 9.4V11.4H9.4M6.6 11.4H4.6V9.4"/></g><g fill="none" stroke="#0f3b27" stroke-width="1.5" stroke-linecap="round" stroke-linejoin="round"><circle cx="8" cy="8" r="6.8"/><path d="M4.6 6.6V4.6H6.6M9.4 4.6H11.4V6.6M11.4 9.4V11.4H9.4M6.6 11.4H4.6V9.4"/></g></svg><div class="a" style="left:778px;top:57px;width:1px;height:20px;background:#a0a0a0;"></div><svg class="a" style="left:785px;top:59px;" width="17" height="17" viewBox="0 0 17 17"><g fill="none" stroke="#56c08a" stroke-opacity="0.45" stroke-width="2.8" stroke-linecap="round" stroke-linejoin="round"><path d="M1.5 14.5V9.5L3 6.5V1.5H6.5V6L7.5 8V14.5Z"/><path d="M14.5 14.5V9.5L13 6.5V1.5H9.5V6L8.5 8V14.5Z"/></g><g fill="none" stroke="#0f3b27" stroke-width="1.5" stroke-linecap="round" stroke-linejoin="round"><path d="M1.5 14.5V9.5L3 6.5V1.5H6.5V6L7.5 8V14.5Z"/><path d="M14.5 14.5V9.5L13 6.5V1.5H9.5V6L8.5 8V14.5Z"/></g></svg><div class="a" style="left:805px;top:55px;width:24px;height:23px;background:#c4dcf2;border:1px solid #94caef;box-sizing:border-box;"></div><svg class="a" style="left:809px;top:59px;" width="17" height="17" viewBox="0 0 17 17"><g fill="none" stroke="#0f3d27" stroke-width="1.9000000000000001" stroke-linecap="round" stroke-linejoin="round"><path d="M3.4 0.5V15.2M12.4 0.5V15.2M0.5 3.6H15.2M0.5 12.5H15.2"/><path d="M8 0.5V15.2M0.5 7.9H15.2" stroke="#2f8a5c"/></g></svg><div class="a" style="left:831px;top:57px;width:1px;height:20px;background:#a0a0a0;"></div><svg class="a" style="left:838px;top:59px;" width="17" height="17" viewBox="0 0 17 17"><g fill="none" stroke="#56c08a" stroke-opacity="0.45" stroke-width="2.8" stroke-linecap="round" stroke-linejoin="round"><path d="M10.48 11.19L14.51 7.16A3.75 3.75 0 0 0 9.21 1.86L1.36 9.70A2.50 2.50 0 0 0 4.90 13.24L10.91 7.23A1.25 1.25 0 0 0 9.14 5.46L5.89 8.71" stroke-width="1.3"/></g><g fill="none" stroke="#0f3b27" stroke-width="1.5" stroke-linecap="round" stroke-linejoin="round"><path d="M10.48 11.19L14.51 7.16A3.75 3.75 0 0 0 9.21 1.86L1.36 9.70A2.50 2.50 0 0 0 4.90 13.24L10.91 7.23A1.25 1.25 0 0 0 9.14 5.46L5.89 8.71" stroke-width="1.3"/></g></svg><div class="a" style="left:368px;top:87px;width:76px;height:14px;background:#e3e3e3;"></div><div class="a" style="left:449px;top:87px;width:504px;height:14px;background:#e3e3e3;"></div><div class="t" style="left:609px;top:86.5px;font-size:12px;line-height:16px;color:#000;transform:scaleX(0.9500);transform-origin:0 0;white-space:pre;">Символ  &lt;B&gt;  DEC = 66;  HEX = 42</div><div class="a" style="left:368px;top:107px;width:76px;height:388px;background:#e3e3e3;"></div><div class="a" style="left:369px;top:163px;width:72px;height:1px;background:#a0a0a0;"></div><div class="a" style="left:369px;top:164px;width:72px;height:1px;background:#ffffff;"></div><div class="a" style="left:369px;top:193px;width:72px;height:1px;background:#a0a0a0;"></div><div class="a" style="left:369px;top:194px;width:72px;height:1px;background:#ffffff;"></div><div class="a" style="left:369px;top:224px;width:72px;height:1px;background:#a0a0a0;"></div><div class="a" style="left:369px;top:225px;width:72px;height:1px;background:#ffffff;"></div><div class="a" style="left:369px;top:254px;width:72px;height:1px;background:#a0a0a0;"></div><div class="a" style="left:369px;top:255px;width:72px;height:1px;background:#ffffff;"></div><div class="a" style="left:369px;top:283px;width:72px;height:1px;background:#a0a0a0;"></div><div class="a" style="left:369px;top:284px;width:72px;height:1px;background:#ffffff;"></div><div class="a" style="left:369px;top:361px;width:72px;height:1px;background:#a0a0a0;"></div><div class="a" style="left:369px;top:362px;width:72px;height:1px;background:#ffffff;"></div><div class="a" style="left:369px;top:439px;width:72px;height:1px;background:#a0a0a0;"></div><div class="a" style="left:369px;top:440px;width:72px;height:1px;background:#ffffff;"></div><svg class="a" style="left:386px;top:142px;" width="17" height="17" viewBox="0 0 17 17"><g fill="none" stroke="#56c08a" stroke-opacity="0.45" stroke-width="2.8" stroke-linecap="round" stroke-linejoin="round"><path d="M1 3V11H8.5"/><path d="M1.5 10.5C4.5 6 7 3.2 10 3.2C12.5 3.2 14.3 6 15 11"/></g><g fill="none" stroke="#0f3b27" stroke-width="1.5" stroke-linecap="round" stroke-linejoin="round"><path d="M1 3V11H8.5"/><path d="M1.5 10.5C4.5 6 7 3.2 10 3.2C12.5 3.2 14.3 6 15 11"/></g></svg><svg class="a" style="left:410px;top:142px;" width="17" height="17" viewBox="0 0 17 17"><g fill="none" stroke="#56c08a" stroke-opacity="0.45" stroke-width="2.8" stroke-linecap="round" stroke-linejoin="round"><path d="M15 3V11H7.5"/><path d="M14.5 10.5C11.5 6 9 3.2 6 3.2C3.5 3.2 1.7 6 1 11"/></g><g fill="none" stroke="#0f3b27" stroke-width="1.5" stroke-linecap="round" stroke-linejoin="round"><path d="M15 3V11H7.5"/><path d="M14.5 10.5C11.5 6 9 3.2 6 3.2C3.5 3.2 1.7 6 1 11"/></g></svg><svg class="a" style="left:374px;top:171px;" width="17" height="17" viewBox="0 0 17 17"><g fill="none" stroke="#56c08a" stroke-opacity="0.45" stroke-width="2.8" stroke-linecap="round" stroke-linejoin="round"><path d="M3.5 1.5V15M1.3 3.8L3.5 1.5L5.7 3.8M1.3 12.7L3.5 15L5.7 12.7"/><path d="M7.5 2.5H13.5M7.5 6H13.5M7.5 9.5H13.5M7.5 13H13.5"/></g><g fill="none" stroke="#0f3b27" stroke-width="1.5" stroke-linecap="round" stroke-linejoin="round"><path d="M3.5 1.5V15M1.3 3.8L3.5 1.5L5.7 3.8M1.3 12.7L3.5 15L5.7 12.7"/><path d="M7.5 2.5H13.5M7.5 6H13.5M7.5 9.5H13.5M7.5 13H13.5"/></g></svg><svg class="a" style="left:398px;top:171px;" width="17" height="17" viewBox="0 0 17 17"><g fill="none" stroke="#56c08a" stroke-opacity="0.45" stroke-width="2.8" stroke-linecap="round" stroke-linejoin="round"><path d="M4.5 1V11.5H15M1 3.5H11.5V15"/></g><g fill="none" stroke="#0f3b27" stroke-width="1.5" stroke-linecap="round" stroke-linejoin="round"><path d="M4.5 1V11.5H15M1 3.5H11.5V15"/></g></svg><svg class="a" style="left:422px;top:171px;" width="17" height="17" viewBox="0 0 17 17"><g fill="none" stroke="#56c08a" stroke-opacity="0.45" stroke-width="2.8" stroke-linecap="round" stroke-linejoin="round"><path d="M3 2V10M1 4L3 2L5 4M1 8L3 10L5 8"/><path d="M7 1.5H14.5V9H7Z"/><path d="M6 13.5H15M8 11.5L6 13.5L8 15.5M13 11.5L15 13.5L13 15.5"/></g><g fill="none" stroke="#0f3b27" stroke-width="1.5" stroke-linecap="round" stroke-linejoin="round"><path d="M3 2V10M1 4L3 2L5 4M1 8L3 10L5 8"/><path d="M7 1.5H14.5V9H7Z"/><path d="M6 13.5H15M8 11.5L6 13.5L8 15.5M13 11.5L15 13.5L13 15.5"/></g></svg><svg class="a" style="left:374px;top:201px;" width="17" height="17" viewBox="0 0 17 17"><g fill="none" stroke="#56c08a" stroke-opacity="0.45" stroke-width="2.8" stroke-linecap="round" stroke-linejoin="round"><circle cx="12.3" cy="3.7" r="2.3"/><path d="M10.7 5.4L8.8 7.2"/><path d="M8.8 6.6L5.3 8.5L7.5 10.7L9.4 7.2Z" stroke-width="1.2"/><path d="M5 8.8L1.2 12.6M6.2 10L2.4 13.8M7.4 11.2L3.6 15" stroke-width="1.1"/></g><g fill="none" stroke="#0f3b27" stroke-width="1.5" stroke-linecap="round" stroke-linejoin="round"><circle cx="12.3" cy="3.7" r="2.3"/><path d="M10.7 5.4L8.8 7.2"/><path d="M8.8 6.6L5.3 8.5L7.5 10.7L9.4 7.2Z" stroke-width="1.2"/><path d="M5 8.8L1.2 12.6M6.2 10L2.4 13.8M7.4 11.2L3.6 15" stroke-width="1.1"/></g></svg><svg class="a" style="left:398px;top:201px;" width="17" height="17" viewBox="0 0 17 17"><g fill="none" stroke="#9fc9b3" stroke-width="1.8" stroke-linecap="round" stroke-linejoin="round"><path d="M1.5 6V15H14.5V6"/><path d="M1.5 6L8 10.5L14.5 6"/><path d="M4 1.5H12L8 5.5Z"/></g></svg><svg class="a" style="left:422px;top:201px;" width="17" height="17" viewBox="0 0 17 17"><g fill="none" stroke="#56c08a" stroke-opacity="0.45" stroke-width="2.8" stroke-linecap="round" stroke-linejoin="round"><circle cx="8" cy="8" r="7"/><path d="M8 1V15"/><path d="M10 1.5V14.5M12 2.3V13.7M14 4.5V11.5M8 4H14M8 6.7H15M8 9.3H15M8 12H14" stroke-width="0.8"/></g><g fill="none" stroke="#0f3b27" stroke-width="1.5" stroke-linecap="round" stroke-linejoin="round"><circle cx="8" cy="8" r="7"/><path d="M8 1V15"/><path d="M10 1.5V14.5M12 2.3V13.7M14 4.5V11.5M8 4H14M8 6.7H15M8 9.3H15M8 12H14" stroke-width="0.8"/></g></svg><svg class="a" style="left:386px;top:231px;" width="17" height="17" viewBox="0 0 17 17"><g fill="none" stroke="#56c08a" stroke-opacity="0.45" stroke-width="2.8" stroke-linecap="round" stroke-linejoin="round"><path d="M8 0.5V15.5" stroke-width="2"/><path d="M5.5 3L1 8.5V15H5.5Z M10.5 3L15 8.5V15H10.5Z"/></g><g fill="none" stroke="#0f3b27" stroke-width="1.5" stroke-linecap="round" stroke-linejoin="round"><path d="M8 0.5V15.5" stroke-width="2"/><path d="M5.5 3L1 8.5V15H5.5Z M10.5 3L15 8.5V15H10.5Z"/></g></svg><svg class="a" style="left:410px;top:231px;" width="17" height="17" viewBox="0 0 17 17"><g fill="none" stroke="#56c08a" stroke-opacity="0.45" stroke-width="2.8" stroke-linecap="round" stroke-linejoin="round"><path d="M0.5 8H15.5" stroke-width="2"/><path d="M1 1.5H11L14.5 5.5H5Z M5 10.5H14.5L11 14.5H1Z"/></g><g fill="none" stroke="#0f3b27" stroke-width="1.5" stroke-linecap="round" stroke-linejoin="round"><path d="M0.5 8H15.5" stroke-width="2"/><path d="M1 1.5H11L14.5 5.5H5Z M5 10.5H14.5L11 14.5H1Z"/></g></svg><svg class="a" style="left:386px;top:261px;" width="17" height="17" viewBox="0 0 17 17"><g fill="none" stroke="#56c08a" stroke-opacity="0.45" stroke-width="2.8" stroke-linecap="round" stroke-linejoin="round"><path d="M3.5 5.5A5.8 5.8 0 1 1 4.5 12.5"/><path d="M2 2V6H6"/></g><g fill="none" stroke="#0f3b27" stroke-width="1.5" stroke-linecap="round" stroke-linejoin="round"><path d="M3.5 5.5A5.8 5.8 0 1 1 4.5 12.5"/><path d="M2 2V6H6"/></g></svg><svg class="a" style="left:410px;top:261px;" width="17" height="17" viewBox="0 0 17 17"><g fill="none" stroke="#56c08a" stroke-opacity="0.45" stroke-width="2.8" stroke-linecap="round" stroke-linejoin="round"><path d="M12.5 5.5A5.8 5.8 0 1 0 11.5 12.5"/><path d="M14 2V6H10"/></g><g fill="none" stroke="#0f3b27" stroke-width="1.5" stroke-linecap="round" stroke-linejoin="round"><path d="M12.5 5.5A5.8 5.8 0 1 0 11.5 12.5"/><path d="M14 2V6H10"/></g></svg><svg class="a" style="left:398px;top:291px;" width="17" height="17" viewBox="0 0 17 17"><g fill="none" stroke="#56c08a" stroke-opacity="0.45" stroke-width="2.8" stroke-linecap="round" stroke-linejoin="round"><path d="M1 8L8 1.5L15 8M1 14.5L8 8L15 14.5"/></g><g fill="none" stroke="#0f3b27" stroke-width="1.5" stroke-linecap="round" stroke-linejoin="round"><path d="M1 8L8 1.5L15 8M1 14.5L8 8L15 14.5"/></g></svg><div class="a" style="left:395px;top:311px;width:23px;height:23px;background:#c4dcf2;border:1px solid #94caef;box-sizing:border-box;"></div><svg class="a" style="left:374px;top:315px;" width="17" height="17" viewBox="0 0 17 17"><g fill="none" stroke="#56c08a" stroke-opacity="0.45" stroke-width="2.8" stroke-linecap="round" stroke-linejoin="round"><path d="M8 1L1.5 8L8 15M14.5 1L8 8L14.5 15"/></g><g fill="none" stroke="#0f3b27" stroke-width="1.5" stroke-linecap="round" stroke-linejoin="round"><path d="M8 1L1.5 8L8 15M14.5 1L8 8L14.5 15"/></g></svg><svg class="a" style="left:398px;top:315px;" width="17" height="17" viewBox="0 0 17 17"><g fill="none" stroke="#56c08a" stroke-opacity="0.45" stroke-width="2.8" stroke-linecap="round" stroke-linejoin="round"><path d="M8 1.5V14.5M1.5 8H14.5M5.5 3.8L8 1.3L10.5 3.8M5.5 12.2L8 14.7L10.5 12.2M3.8 5.5L1.3 8L3.8 10.5M12.2 5.5L14.7 8L12.2 10.5" stroke-width="1.4"/></g><g fill="none" stroke="#0f3b27" stroke-width="1.5" stroke-linecap="round" stroke-linejoin="round"><path d="M8 1.5V14.5M1.5 8H14.5M5.5 3.8L8 1.3L10.5 3.8M5.5 12.2L8 14.7L10.5 12.2M3.8 5.5L1.3 8L3.8 10.5M12.2 5.5L14.7 8L12.2 10.5" stroke-width="1.4"/></g></svg><svg class="a" style="left:422px;top:315px;" width="17" height="17" viewBox="0 0 17 17"><g fill="none" stroke="#56c08a" stroke-opacity="0.45" stroke-width="2.8" stroke-linecap="round" stroke-linejoin="round"><path d="M1.5 1L8 8L1.5 15M8 1L14.5 8L8 15"/></g><g fill="none" stroke="#0f3b27" stroke-width="1.5" stroke-linecap="round" stroke-linejoin="round"><path d="M1.5 1L8 8L1.5 15M8 1L14.5 8L8 15"/></g></svg><svg class="a" style="left:398px;top:338px;" width="17" height="17" viewBox="0 0 17 17"><g fill="none" stroke="#56c08a" stroke-opacity="0.45" stroke-width="2.8" stroke-linecap="round" stroke-linejoin="round"><path d="M1 1.5L8 8L15 1.5M1 8L8 14.5L15 8"/></g><g fill="none" stroke="#0f3b27" stroke-width="1.5" stroke-linecap="round" stroke-linejoin="round"><path d="M1 1.5L8 8L15 1.5M1 8L8 14.5L15 8"/></g></svg><svg class="a" style="left:398px;top:369px;" width="17" height="17" viewBox="0 0 17 17"><g fill="none" stroke="#56c08a" stroke-opacity="0.45" stroke-width="2.8" stroke-linecap="round" stroke-linejoin="round"><path d="M2 1.5H14M8 4V15M3.5 8.5L8 4L12.5 8.5"/></g><g fill="none" stroke="#0f3b27" stroke-width="1.5" stroke-linecap="round" stroke-linejoin="round"><path d="M2 1.5H14M8 4V15M3.5 8.5L8 4L12.5 8.5"/></g></svg><svg class="a" style="left:374px;top:394px;" width="17" height="17" viewBox="0 0 17 17"><g fill="none" stroke="#56c08a" stroke-opacity="0.45" stroke-width="2.8" stroke-linecap="round" stroke-linejoin="round"><path d="M1.5 2V14M4 8H15M8.5 3.5L4 8L8.5 12.5"/></g><g fill="none" stroke="#0f3b27" stroke-width="1.5" stroke-linecap="round" stroke-linejoin="round"><path d="M1.5 2V14M4 8H15M8.5 3.5L4 8L8.5 12.5"/></g></svg><svg class="a" style="left:422px;top:394px;" width="17" height="17" viewBox="0 0 17 17"><g fill="none" stroke="#56c08a" stroke-opacity="0.45" stroke-width="2.8" stroke-linecap="round" stroke-linejoin="round"><path d="M14.5 2V14M12 8H1M7.5 3.5L12 8L7.5 12.5"/></g><g fill="none" stroke="#0f3b27" stroke-width="1.5" stroke-linecap="round" stroke-linejoin="round"><path d="M14.5 2V14M12 8H1M7.5 3.5L12 8L7.5 12.5"/></g></svg><svg class="a" style="left:398px;top:418px;" width="17" height="17" viewBox="0 0 17 17"><g fill="none" stroke="#56c08a" stroke-opacity="0.45" stroke-width="2.8" stroke-linecap="round" stroke-linejoin="round"><path d="M2 14.5H14M8 12V1M3.5 7.5L8 12L12.5 7.5"/></g><g fill="none" stroke="#0f3b27" stroke-width="1.5" stroke-linecap="round" stroke-linejoin="round"><path d="M2 14.5H14M8 12V1M3.5 7.5L8 12L12.5 7.5"/></g></svg><svg class="a" style="left:386px;top:447px;" width="17" height="17" viewBox="0 0 17 17"><g fill="none" stroke="#56c08a" stroke-opacity="0.45" stroke-width="2.8" stroke-linecap="round" stroke-linejoin="round"><path d="M5.3 2.2H10.6V13.8H5.3Z" stroke-width="1.4"/><path d="M0.8 3.4L3.3 8L0.8 12.5M15.2 3.4L12.7 8L15.2 12.5" stroke-width="1.3"/></g><g fill="none" stroke="#0f3b27" stroke-width="1.5" stroke-linecap="round" stroke-linejoin="round"><path d="M5.3 2.2H10.6V13.8H5.3Z" stroke-width="1.4"/><path d="M0.8 3.4L3.3 8L0.8 12.5M15.2 3.4L12.7 8L15.2 12.5" stroke-width="1.3"/></g></svg><svg class="a" style="left:410px;top:447px;" width="17" height="17" viewBox="0 0 17 17"><g fill="none" stroke="#56c08a" stroke-opacity="0.45" stroke-width="2.8" stroke-linecap="round" stroke-linejoin="round"><path d="M2 5.5H13.9V10.5H2Z" stroke-width="1.4"/><path d="M3.2 1.4L8 3.4L12.7 1.4M3.2 14.6L8 12.4L12.7 14.6" stroke-width="1.3"/></g><g fill="none" stroke="#0f3b27" stroke-width="1.5" stroke-linecap="round" stroke-linejoin="round"><path d="M2 5.5H13.9V10.5H2Z" stroke-width="1.4"/><path d="M3.2 1.4L8 3.4L12.7 1.4M3.2 14.6L8 12.4L12.7 14.6" stroke-width="1.3"/></g></svg><div class="a" style="left:446px;top:278px;width:2px;height:2px;background:#c4c4c4;"></div><div class="a" style="left:447px;top:278px;width:1px;height:1px;background:#909090;"></div><div class="a" style="left:446px;top:282px;width:2px;height:2px;background:#c4c4c4;"></div><div class="a" style="left:447px;top:282px;width:1px;height:1px;background:#909090;"></div><div class="a" style="left:446px;top:286px;width:2px;height:2px;background:#c4c4c4;"></div><div class="a" style="left:447px;top:286px;width:1px;height:1px;background:#909090;"></div><div class="a" style="left:446px;top:290px;width:2px;height:2px;background:#c4c4c4;"></div><div class="a" style="left:447px;top:290px;width:1px;height:1px;background:#909090;"></div><div class="a" style="left:446px;top:294px;width:2px;height:2px;background:#c4c4c4;"></div><div class="a" style="left:447px;top:294px;width:1px;height:1px;background:#909090;"></div><div class="a" style="left:446px;top:298px;width:2px;height:2px;background:#c4c4c4;"></div><div class="a" style="left:447px;top:298px;width:1px;height:1px;background:#909090;"></div><div class="a" style="left:446px;top:302px;width:2px;height:2px;background:#c4c4c4;"></div><div class="a" style="left:447px;top:302px;width:1px;height:1px;background:#909090;"></div><div class="a" style="left:515px;top:109px;width:290px;height:386px;background:#ffffff;"></div><svg class="a" style="left:516px;top:110px;shape-rendering:crispEdges;" width="288" height="384" viewBox="0 0 288 384"><rect x="0" y="0" width="48" height="48" fill="#000000"/><rect x="0" y="48" width="48" height="48" fill="#000000"/><rect x="0" y="96" width="48" height="48" fill="#000000"/><rect x="0" y="144" width="48" height="48" fill="#000000"/><rect x="0" y="192" width="48" height="48" fill="#000000"/><rect x="0" y="240" width="48" height="48" fill="#000000"/><rect x="0" y="288" width="48" height="48" fill="#000000"/><rect x="0" y="336" width="48" height="48" fill="#ffffff"/><rect x="48" y="0" width="48" height="48" fill="#000000"/><rect x="48" y="48" width="48" height="48" fill="#ededed"/><rect x="48" y="96" width="48" height="48" fill="#ffffff"/><rect x="48" y="144" width="48" height="48" fill="#000000"/><rect x="48" y="192" width="48" height="48" fill="#ffffff"/><rect x="48" y="240" width="48" height="48" fill="#ededed"/><rect x="48" y="288" width="48" height="48" fill="#000000"/><rect x="48" y="336" width="48" height="48" fill="#ededed"/><rect x="96" y="0" width="48" height="48" fill="#000000"/><rect x="96" y="48" width="48" height="48" fill="#ffffff"/><rect x="96" y="96" width="48" height="48" fill="#ededed"/><rect x="96" y="144" width="48" height="48" fill="#000000"/><rect x="96" y="192" width="48" height="48" fill="#ededed"/><rect x="96" y="240" width="48" height="48" fill="#ffffff"/><rect x="96" y="288" width="48" height="48" fill="#000000"/><rect x="96" y="336" width="48" height="48" fill="#ffffff"/><rect x="144" y="0" width="48" height="48" fill="#000000"/><rect x="144" y="48" width="48" height="48" fill="#ededed"/><rect x="144" y="96" width="48" height="48" fill="#ffffff"/><rect x="144" y="144" width="48" height="48" fill="#000000"/><rect x="144" y="192" width="48" height="48" fill="#ffffff"/><rect x="144" y="240" width="48" height="48" fill="#ededed"/><rect x="144" y="288" width="48" height="48" fill="#000000"/><rect x="144" y="336" width="48" height="48" fill="#ededed"/><rect x="192" y="0" width="48" height="48" fill="#ededed"/><rect x="192" y="48" width="48" height="48" fill="#000000"/><rect x="192" y="96" width="48" height="48" fill="#000000"/><rect x="192" y="144" width="48" height="48" fill="#ffffff"/><rect x="192" y="192" width="48" height="48" fill="#000000"/><rect x="192" y="240" width="48" height="48" fill="#000000"/><rect x="192" y="288" width="48" height="48" fill="#ededed"/><rect x="192" y="336" width="48" height="48" fill="#ffffff"/><rect x="240" y="0" width="48" height="48" fill="#ffffff"/><rect x="240" y="48" width="48" height="48" fill="#ededed"/><rect x="240" y="96" width="48" height="48" fill="#ffffff"/><rect x="240" y="144" width="48" height="48" fill="#ededed"/><rect x="240" y="192" width="48" height="48" fill="#ffffff"/><rect x="240" y="240" width="48" height="48" fill="#ededed"/><rect x="240" y="288" width="48" height="48" fill="#ffffff"/><rect x="240" y="336" width="48" height="48" fill="#ededed"/></svg><div class="a" style="left:876px;top:107px;width:77px;height:387px;background:#e3e3e3;"></div><div class="a" style="left:877px;top:148px;width:73px;height:1px;background:#a0a0a0;"></div><div class="a" style="left:877px;top:149px;width:73px;height:1px;background:#ffffff;"></div><div class="a" style="left:877px;top:178px;width:73px;height:1px;background:#a0a0a0;"></div><div class="a" style="left:877px;top:179px;width:73px;height:1px;background:#ffffff;"></div><div class="a" style="left:877px;top:208px;width:73px;height:1px;background:#a0a0a0;"></div><div class="a" style="left:877px;top:209px;width:73px;height:1px;background:#ffffff;"></div><div class="a" style="left:877px;top:238px;width:73px;height:1px;background:#a0a0a0;"></div><div class="a" style="left:877px;top:239px;width:73px;height:1px;background:#ffffff;"></div><div class="a" style="left:877px;top:268px;width:73px;height:1px;background:#a0a0a0;"></div><div class="a" style="left:877px;top:269px;width:73px;height:1px;background:#ffffff;"></div><div class="a" style="left:877px;top:346px;width:73px;height:1px;background:#a0a0a0;"></div><div class="a" style="left:877px;top:347px;width:73px;height:1px;background:#ffffff;"></div><div class="a" style="left:877px;top:424px;width:73px;height:1px;background:#a0a0a0;"></div><div class="a" style="left:877px;top:425px;width:73px;height:1px;background:#ffffff;"></div><div class="a" style="left:877px;top:454px;width:73px;height:1px;background:#a0a0a0;"></div><div class="a" style="left:877px;top:455px;width:73px;height:1px;background:#ffffff;"></div><svg class="a" style="left:894px;top:127px;" width="17" height="17" viewBox="0 0 17 17"><g fill="none" stroke="#9fc9b3" stroke-width="1.8" stroke-linecap="round" stroke-linejoin="round"><path d="M1 3V11H8.5"/><path d="M1.5 10.5C4.5 6 7 3.2 10 3.2C12.5 3.2 14.3 6 15 11"/></g></svg><svg class="a" style="left:918px;top:127px;" width="17" height="17" viewBox="0 0 17 17"><g fill="none" stroke="#9fc9b3" stroke-width="1.8" stroke-linecap="round" stroke-linejoin="round"><path d="M15 3V11H7.5"/><path d="M14.5 10.5C11.5 6 9 3.2 6 3.2C3.5 3.2 1.7 6 1 11"/></g></svg><svg class="a" style="left:883px;top:156px;" width="17" height="17" viewBox="0 0 17 17"><g fill="none" stroke="#56c08a" stroke-opacity="0.45" stroke-width="2.8" stroke-linecap="round" stroke-linejoin="round"><circle cx="3.8" cy="12.5" r="2.5"/><circle cx="12.2" cy="12.5" r="2.5"/><path d="M5.5 10.5L12.5 1M10.5 10.5L3.5 1"/></g><g fill="none" stroke="#0f3b27" stroke-width="1.5" stroke-linecap="round" stroke-linejoin="round"><circle cx="3.8" cy="12.5" r="2.5"/><circle cx="12.2" cy="12.5" r="2.5"/><path d="M5.5 10.5L12.5 1M10.5 10.5L3.5 1"/></g></svg><svg class="a" style="left:907px;top:156px;" width="17" height="17" viewBox="0 0 17 17"><g fill="none" stroke="#56c08a" stroke-opacity="0.45" stroke-width="2.8" stroke-linecap="round" stroke-linejoin="round"><rect x="5" y="1.2" width="9.8" height="10.5"/><path d="M5 3.8H2V14.8H12V11.7"/></g><g fill="none" stroke="#0f3b27" stroke-width="1.5" stroke-linecap="round" stroke-linejoin="round"><rect x="5" y="1.2" width="9.8" height="10.5"/><path d="M5 3.8H2V14.8H12V11.7"/></g></svg><svg class="a" style="left:931px;top:156px;" width="17" height="17" viewBox="0 0 17 17"><g fill="none" stroke="#9fc9b3" stroke-width="1.8" stroke-linecap="round" stroke-linejoin="round"><path d="M1.5 6V15H14.5V6"/><path d="M1.5 6L8 10.5L14.5 6"/><path d="M4 1.5H12L8 5.5Z"/></g></svg><svg class="a" style="left:883px;top:186px;" width="17" height="17" viewBox="0 0 17 17"><g fill="none" stroke="#56c08a" stroke-opacity="0.45" stroke-width="2.8" stroke-linecap="round" stroke-linejoin="round"><circle cx="12.3" cy="3.7" r="2.3"/><path d="M10.7 5.4L8.8 7.2"/><path d="M8.8 6.6L5.3 8.5L7.5 10.7L9.4 7.2Z" stroke-width="1.2"/><path d="M5 8.8L1.2 12.6M6.2 10L2.4 13.8M7.4 11.2L3.6 15" stroke-width="1.1"/></g><g fill="none" stroke="#0f3b27" stroke-width="1.5" stroke-linecap="round" stroke-linejoin="round"><circle cx="12.3" cy="3.7" r="2.3"/><path d="M10.7 5.4L8.8 7.2"/><path d="M8.8 6.6L5.3 8.5L7.5 10.7L9.4 7.2Z" stroke-width="1.2"/><path d="M5 8.8L1.2 12.6M6.2 10L2.4 13.8M7.4 11.2L3.6 15" stroke-width="1.1"/></g></svg><svg class="a" style="left:907px;top:186px;" width="17" height="17" viewBox="0 0 17 17"><g fill="none" stroke="#56c08a" stroke-opacity="0.45" stroke-width="2.8" stroke-linecap="round" stroke-linejoin="round"><path d="M7.5 1.5H15V15H1.5V7"/><path d="M1.5 13L5 9.5L7.5 12L11 8.5L15 12.5"/><path d="M1.5 1.5C5 2 7.5 4 8.5 7.5"/><path d="M5.8 6.5L8.6 7.8L9.6 4.8"/></g><g fill="none" stroke="#0f3b27" stroke-width="1.5" stroke-linecap="round" stroke-linejoin="round"><path d="M7.5 1.5H15V15H1.5V7"/><path d="M1.5 13L5 9.5L7.5 12L11 8.5L15 12.5"/><path d="M1.5 1.5C5 2 7.5 4 8.5 7.5"/><path d="M5.8 6.5L8.6 7.8L9.6 4.8"/></g></svg><svg class="a" style="left:931px;top:186px;" width="17" height="17" viewBox="0 0 17 17"><g fill="none" stroke="#56c08a" stroke-opacity="0.45" stroke-width="2.8" stroke-linecap="round" stroke-linejoin="round"><circle cx="8" cy="8" r="7"/><path d="M8 1V15"/><path d="M10 1.5V14.5M12 2.3V13.7M14 4.5V11.5M8 4H14M8 6.7H15M8 9.3H15M8 12H14" stroke-width="0.8"/></g><g fill="none" stroke="#0f3b27" stroke-width="1.5" stroke-linecap="round" stroke-linejoin="round"><circle cx="8" cy="8" r="7"/><path d="M8 1V15"/><path d="M10 1.5V14.5M12 2.3V13.7M14 4.5V11.5M8 4H14M8 6.7H15M8 9.3H15M8 12H14" stroke-width="0.8"/></g></svg><svg class="a" style="left:894px;top:216px;" width="17" height="17" viewBox="0 0 17 17"><g fill="none" stroke="#56c08a" stroke-opacity="0.45" stroke-width="2.8" stroke-linecap="round" stroke-linejoin="round"><path d="M8 0.5V15.5" stroke-width="2"/><path d="M5.5 3L1 8.5V15H5.5Z M10.5 3L15 8.5V15H10.5Z"/></g><g fill="none" stroke="#0f3b27" stroke-width="1.5" stroke-linecap="round" stroke-linejoin="round"><path d="M8 0.5V15.5" stroke-width="2"/><path d="M5.5 3L1 8.5V15H5.5Z M10.5 3L15 8.5V15H10.5Z"/></g></svg><svg class="a" style="left:918px;top:216px;" width="17" height="17" viewBox="0 0 17 17"><g fill="none" stroke="#56c08a" stroke-opacity="0.45" stroke-width="2.8" stroke-linecap="round" stroke-linejoin="round"><path d="M0.5 8H15.5" stroke-width="2"/><path d="M1 1.5H11L14.5 5.5H5Z M5 10.5H14.5L11 14.5H1Z"/></g><g fill="none" stroke="#0f3b27" stroke-width="1.5" stroke-linecap="round" stroke-linejoin="round"><path d="M0.5 8H15.5" stroke-width="2"/><path d="M1 1.5H11L14.5 5.5H5Z M5 10.5H14.5L11 14.5H1Z"/></g></svg><svg class="a" style="left:894px;top:246px;" width="17" height="17" viewBox="0 0 17 17"><g fill="none" stroke="#56c08a" stroke-opacity="0.45" stroke-width="2.8" stroke-linecap="round" stroke-linejoin="round"><path d="M3.5 5.5A5.8 5.8 0 1 1 4.5 12.5"/><path d="M2 2V6H6"/></g><g fill="none" stroke="#0f3b27" stroke-width="1.5" stroke-linecap="round" stroke-linejoin="round"><path d="M3.5 5.5A5.8 5.8 0 1 1 4.5 12.5"/><path d="M2 2V6H6"/></g></svg><svg class="a" style="left:918px;top:246px;" width="17" height="17" viewBox="0 0 17 17"><g fill="none" stroke="#56c08a" stroke-opacity="0.45" stroke-width="2.8" stroke-linecap="round" stroke-linejoin="round"><path d="M12.5 5.5A5.8 5.8 0 1 0 11.5 12.5"/><path d="M14 2V6H10"/></g><g fill="none" stroke="#0f3b27" stroke-width="1.5" stroke-linecap="round" stroke-linejoin="round"><path d="M12.5 5.5A5.8 5.8 0 1 0 11.5 12.5"/><path d="M14 2V6H10"/></g></svg><svg class="a" style="left:907px;top:276px;" width="17" height="17" viewBox="0 0 17 17"><g fill="none" stroke="#56c08a" stroke-opacity="0.45" stroke-width="2.8" stroke-linecap="round" stroke-linejoin="round"><path d="M1 8L8 1.5L15 8M1 14.5L8 8L15 14.5"/></g><g fill="none" stroke="#0f3b27" stroke-width="1.5" stroke-linecap="round" stroke-linejoin="round"><path d="M1 8L8 1.5L15 8M1 14.5L8 8L15 14.5"/></g></svg><div class="a" style="left:903px;top:296px;width:24px;height:23px;background:#c4dcf2;border:1px solid #94caef;box-sizing:border-box;"></div><svg class="a" style="left:883px;top:299px;" width="17" height="17" viewBox="0 0 17 17"><g fill="none" stroke="#56c08a" stroke-opacity="0.45" stroke-width="2.8" stroke-linecap="round" stroke-linejoin="round"><path d="M8 1L1.5 8L8 15M14.5 1L8 8L14.5 15"/></g><g fill="none" stroke="#0f3b27" stroke-width="1.5" stroke-linecap="round" stroke-linejoin="round"><path d="M8 1L1.5 8L8 15M14.5 1L8 8L14.5 15"/></g></svg><svg class="a" style="left:907px;top:299px;" width="17" height="17" viewBox="0 0 17 17"><g fill="none" stroke="#56c08a" stroke-opacity="0.45" stroke-width="2.8" stroke-linecap="round" stroke-linejoin="round"><path d="M8 1.5V14.5M1.5 8H14.5M5.5 3.8L8 1.3L10.5 3.8M5.5 12.2L8 14.7L10.5 12.2M3.8 5.5L1.3 8L3.8 10.5M12.2 5.5L14.7 8L12.2 10.5" stroke-width="1.4"/></g><g fill="none" stroke="#0f3b27" stroke-width="1.5" stroke-linecap="round" stroke-linejoin="round"><path d="M8 1.5V14.5M1.5 8H14.5M5.5 3.8L8 1.3L10.5 3.8M5.5 12.2L8 14.7L10.5 12.2M3.8 5.5L1.3 8L3.8 10.5M12.2 5.5L14.7 8L12.2 10.5" stroke-width="1.4"/></g></svg><svg class="a" style="left:931px;top:299px;" width="17" height="17" viewBox="0 0 17 17"><g fill="none" stroke="#56c08a" stroke-opacity="0.45" stroke-width="2.8" stroke-linecap="round" stroke-linejoin="round"><path d="M1.5 1L8 8L1.5 15M8 1L14.5 8L8 15"/></g><g fill="none" stroke="#0f3b27" stroke-width="1.5" stroke-linecap="round" stroke-linejoin="round"><path d="M1.5 1L8 8L1.5 15M8 1L14.5 8L8 15"/></g></svg><svg class="a" style="left:907px;top:323px;" width="17" height="17" viewBox="0 0 17 17"><g fill="none" stroke="#56c08a" stroke-opacity="0.45" stroke-width="2.8" stroke-linecap="round" stroke-linejoin="round"><path d="M1 1.5L8 8L15 1.5M1 8L8 14.5L15 8"/></g><g fill="none" stroke="#0f3b27" stroke-width="1.5" stroke-linecap="round" stroke-linejoin="round"><path d="M1 1.5L8 8L15 1.5M1 8L8 14.5L15 8"/></g></svg><svg class="a" style="left:907px;top:354px;" width="17" height="17" viewBox="0 0 17 17"><g fill="none" stroke="#56c08a" stroke-opacity="0.45" stroke-width="2.8" stroke-linecap="round" stroke-linejoin="round"><path d="M2 1.5H14M8 4V15M3.5 8.5L8 4L12.5 8.5"/></g><g fill="none" stroke="#0f3b27" stroke-width="1.5" stroke-linecap="round" stroke-linejoin="round"><path d="M2 1.5H14M8 4V15M3.5 8.5L8 4L12.5 8.5"/></g></svg><svg class="a" style="left:883px;top:378px;" width="17" height="17" viewBox="0 0 17 17"><g fill="none" stroke="#56c08a" stroke-opacity="0.45" stroke-width="2.8" stroke-linecap="round" stroke-linejoin="round"><path d="M1.5 2V14M4 8H15M8.5 3.5L4 8L8.5 12.5"/></g><g fill="none" stroke="#0f3b27" stroke-width="1.5" stroke-linecap="round" stroke-linejoin="round"><path d="M1.5 2V14M4 8H15M8.5 3.5L4 8L8.5 12.5"/></g></svg><svg class="a" style="left:931px;top:378px;" width="17" height="17" viewBox="0 0 17 17"><g fill="none" stroke="#56c08a" stroke-opacity="0.45" stroke-width="2.8" stroke-linecap="round" stroke-linejoin="round"><path d="M14.5 2V14M12 8H1M7.5 3.5L12 8L7.5 12.5"/></g><g fill="none" stroke="#0f3b27" stroke-width="1.5" stroke-linecap="round" stroke-linejoin="round"><path d="M14.5 2V14M12 8H1M7.5 3.5L12 8L7.5 12.5"/></g></svg><svg class="a" style="left:907px;top:401px;" width="17" height="17" viewBox="0 0 17 17"><g fill="none" stroke="#56c08a" stroke-opacity="0.45" stroke-width="2.8" stroke-linecap="round" stroke-linejoin="round"><path d="M2 14.5H14M8 12V1M3.5 7.5L8 12L12.5 7.5"/></g><g fill="none" stroke="#0f3b27" stroke-width="1.5" stroke-linecap="round" stroke-linejoin="round"><path d="M2 14.5H14M8 12V1M3.5 7.5L8 12L12.5 7.5"/></g></svg><svg class="a" style="left:894px;top:432px;" width="17" height="17" viewBox="0 0 17 17"><g fill="none" stroke="#56c08a" stroke-opacity="0.45" stroke-width="2.8" stroke-linecap="round" stroke-linejoin="round"><path d="M5.3 2.2H10.6V13.8H5.3Z" stroke-width="1.4"/><path d="M0.8 3.4L3.3 8L0.8 12.5M15.2 3.4L12.7 8L15.2 12.5" stroke-width="1.3"/></g><g fill="none" stroke="#0f3b27" stroke-width="1.5" stroke-linecap="round" stroke-linejoin="round"><path d="M5.3 2.2H10.6V13.8H5.3Z" stroke-width="1.4"/><path d="M0.8 3.4L3.3 8L0.8 12.5M15.2 3.4L12.7 8L15.2 12.5" stroke-width="1.3"/></g></svg><svg class="a" style="left:918px;top:432px;" width="17" height="17" viewBox="0 0 17 17"><g fill="none" stroke="#56c08a" stroke-opacity="0.45" stroke-width="2.8" stroke-linecap="round" stroke-linejoin="round"><path d="M2 5.5H13.9V10.5H2Z" stroke-width="1.4"/><path d="M3.2 1.4L8 3.4L12.7 1.4M3.2 14.6L8 12.4L12.7 14.6" stroke-width="1.3"/></g><g fill="none" stroke="#0f3b27" stroke-width="1.5" stroke-linecap="round" stroke-linejoin="round"><path d="M2 5.5H13.9V10.5H2Z" stroke-width="1.4"/><path d="M3.2 1.4L8 3.4L12.7 1.4M3.2 14.6L8 12.4L12.7 14.6" stroke-width="1.3"/></g></svg><svg class="a" style="left:894px;top:462px;" width="17" height="17" viewBox="0 0 17 17"><g fill="none" stroke="#56c08a" stroke-opacity="0.45" stroke-width="2.8" stroke-linecap="round" stroke-linejoin="round"><path d="M8 15V2M2.5 7.5L8 2L13.5 7.5"/></g><g fill="none" stroke="#0f3b27" stroke-width="1.5" stroke-linecap="round" stroke-linejoin="round"><path d="M8 15V2M2.5 7.5L8 2L13.5 7.5"/></g></svg><svg class="a" style="left:918px;top:462px;" width="17" height="17" viewBox="0 0 17 17"><g fill="none" stroke="#56c08a" stroke-opacity="0.45" stroke-width="2.8" stroke-linecap="round" stroke-linejoin="round"><path d="M8 1V14M2.5 8.5L8 14L13.5 8.5"/></g><g fill="none" stroke="#0f3b27" stroke-width="1.5" stroke-linecap="round" stroke-linejoin="round"><path d="M8 1V14M2.5 8.5L8 14L13.5 8.5"/></g></svg><div class="a" style="left:367px;top:496px;width:586px;height:1px;background:#d8d8d8;"></div><div class="a" style="left:367px;top:497px;width:586px;height:27px;background:#f0f0f0;"></div><div class="a" style="left:367px;top:524px;width:586px;height:1px;background:#8a8a8a;"></div><div class="a" style="left:737px;top:499px;width:1px;height:24px;background:#d0d0d0;"></div><div class="a" style="left:787px;top:499px;width:1px;height:24px;background:#d0d0d0;"></div><div class="a" style="left:868px;top:499px;width:1px;height:24px;background:#d0d0d0;"></div><div class="t" style="left:370px;top:503px;font-size:12px;line-height:16px;color:#000;transform:scaleX(0.9556);transform-origin:0 0;">Window: 586 x 473</div><div class="t" style="left:746px;top:503px;font-size:12px;line-height:16px;color:#000;transform:scaleX(0.9680);transform-origin:0 0;">NORM</div><div class="t" style="left:792px;top:503px;font-size:12px;line-height:16px;color:#000;transform:scaleX(0.8825);transform-origin:0 0;">X,Y: 5, 1</div><div class="t" style="left:872px;top:503px;font-size:12px;line-height:16px;color:#000;transform:scaleX(0.8937);transform-origin:0 0;">1.6.10.78</div><div class="a" style="left:949px;top:516px;width:2px;height:2px;background:#b8b8b8;"></div><div class="a" style="left:946px;top:519px;width:2px;height:2px;background:#b8b8b8;"></div><div class="a" style="left:949px;top:519px;width:2px;height:2px;background:#b8b8b8;"></div><div class="a" style="left:943px;top:522px;width:2px;height:2px;background:#b8b8b8;"></div><div class="a" style="left:946px;top:522px;width:2px;height:2px;background:#b8b8b8;"></div><div class="a" style="left:949px;top:522px;width:2px;height:2px;background:#b8b8b8;"></div><div class="a" style="left:953px;top:0px;width:415px;height:525px;background:#f0f0f0;"></div><div class="a" style="left:953px;top:0px;width:415px;height:1px;background:#8a8a8a;"></div><div class="a" style="left:953px;top:0px;width:1px;height:525px;background:#b4b4b4;"></div><div class="a" style="left:954px;top:1px;width:414px;height:30px;background:#ffffff;"></div><svg class="a" style="left:961px;top:7px;" width="17" height="17" viewBox="0 0 17 17"><g fill="none" stroke="#56c08a" stroke-opacity="0.45" stroke-width="2.8" stroke-linecap="round" stroke-linejoin="round"><path d="M6.4 1.5H16L9.5 8.3L12.6 8.6L1.3 15.6L5.2 9.2L3.1 8.8Z"/></g><g fill="none" stroke="#0f3b27" stroke-width="1.5" stroke-linecap="round" stroke-linejoin="round"><path d="M6.4 1.5H16L9.5 8.3L12.6 8.6L1.3 15.6L5.2 9.2L3.1 8.8Z"/></g></svg><div class="t" style="left:982.5px;top:8px;font-size:12px;line-height:16px;color:#999999;transform:scaleX(0.9706);transform-origin:0 0;white-space:pre;">Генератор кода.  Вывод</div><div class="a" style="left:1248px;top:15px;width:10px;height:1px;background:#d6d6d6;"></div><svg class="a" style="left:1292px;top:9px;" width="12" height="12" viewBox="0 0 12 12"><rect x="1.5" y="1.5" width="9" height="9" fill="none" stroke="#8c8c8c" stroke-width="1"/></svg><svg class="a" style="left:1337px;top:9px;" width="12" height="12" viewBox="0 0 12 12"><path d="M1 1L11 11M11 1L1 11" stroke="#8c8c8c" stroke-width="1"/></svg><div class="a" style="left:958px;top:35px;width:389px;height:429px;background:#ffffff;"></div><div class="a" style="left:958px;top:35px;width:18px;height:429px;background:#f0f0f0;"></div><div class="a" style="left:976px;top:35px;width:1px;height:429px;background:#d0d0d0;"></div><div class="a" style="left:0;top:0;width:1347px;height:464px;overflow:hidden;clip-path:inset(35px 1px 0 958px);"><div class="m" style="left:958px;top:36px;width:17px;text-align:right;color:#6e6e6e">19</div><div class="m" style="left:980px;top:36px;"><span style="color:#008000;">#define FONT_6X8_LENGTH         224</span></div><div class="m" style="left:958px;top:49px;width:17px;text-align:right;color:#6e6e6e">20</div><div class="m" style="left:980px;top:49px;"><span style="color:#008000;">#define FONT_6X8_START_CHAR     32</span></div><div class="m" style="left:958px;top:62px;width:17px;text-align:right;color:#6e6e6e">21</div><div class="m" style="left:980px;top:62px;"><span style="color:#008000;">#define FONT_6X8_CHAR_WIDTH     6</span></div><div class="m" style="left:958px;top:75px;width:17px;text-align:right;color:#6e6e6e">22</div><div class="m" style="left:980px;top:75px;"><span style="color:#008000;">#define FONT_6X8_CHAR_HEIGHT    8</span></div><div class="m" style="left:958px;top:88px;width:17px;text-align:right;color:#6e6e6e">23</div><div class="m" style="left:980px;top:88px;"><span style="color:#008000;">#define FONT_6X8_FONT_TYPE      (FONT_TYPE_MONOSPACED)</span></div><div class="m" style="left:958px;top:101px;width:17px;text-align:right;color:#6e6e6e">24</div><div class="m" style="left:980px;top:101px;"><span style="color:#008000;">#define FONT_6X8_ARRAY_LENGTH   (FONT_6X8_LENGTH * FONT_6X8_CHAR_HEIGHT)</span></div><div class="m" style="left:958px;top:114px;width:17px;text-align:right;color:#6e6e6e">25</div><div class="m" style="left:980px;top:114px;"></div><div class="m" style="left:958px;top:127px;width:17px;text-align:right;color:#6e6e6e">26</div><div class="m" style="left:980px;top:127px;"><span style="color:#1c7fd0;">const unsigned char</span><span style="color:#000000;">  font_6x8[FONT_6X8_ARRAY_LENGTH] =</span></div><div class="m" style="left:958px;top:140px;width:17px;text-align:right;color:#6e6e6e">27</div><div class="m" style="left:980px;top:140px;"><span style="color:#000000;">{</span></div><div class="m" style="left:958px;top:153px;width:17px;text-align:right;color:#6e6e6e">28</div><div class="m" style="left:980px;top:153px;"><span style="color:#000000;">    0x00, 0x00, 0x00, 0x00, 0x00, 0x00, </span><span style="color:#a09a00;font-style:italic;">// Символ 32  &lt; &gt;</span></div><div class="m" style="left:958px;top:166px;width:17px;text-align:right;color:#6e6e6e">29</div><div class="m" style="left:980px;top:166px;"><span style="color:#000000;">    0x5F, 0x00, 0x00, 0x00, 0x00, 0x00, </span><span style="color:#a09a00;font-style:italic;">// Символ 33  &lt;!&gt;</span></div><div class="m" style="left:958px;top:179px;width:17px;text-align:right;color:#6e6e6e">30</div><div class="m" style="left:980px;top:179px;"><span style="color:#000000;">    0x07, 0x00, 0x07, 0x00, 0x00, 0x00, </span><span style="color:#a09a00;font-style:italic;">// Символ 34  &lt;&quot;&gt;</span></div><div class="m" style="left:958px;top:192px;width:17px;text-align:right;color:#6e6e6e">31</div><div class="m" style="left:980px;top:192px;"><span style="color:#000000;">    0x14, 0x3E, 0x14, 0x3E, 0x14, 0x00, </span><span style="color:#a09a00;font-style:italic;">// Символ 35  &lt;#&gt;</span></div><div class="m" style="left:958px;top:205px;width:17px;text-align:right;color:#6e6e6e">32</div><div class="m" style="left:980px;top:205px;"><span style="color:#000000;">    0x24, 0x2A, 0x7F, 0x2A, 0x12, 0x00, </span><span style="color:#a09a00;font-style:italic;">// Символ 36  &lt;$&gt;</span></div><div class="m" style="left:958px;top:218px;width:17px;text-align:right;color:#6e6e6e">33</div><div class="m" style="left:980px;top:218px;"><span style="color:#000000;">    0x4E, 0x2A, 0x16, 0x68, 0x54, 0x72, </span><span style="color:#a09a00;font-style:italic;">// Символ 37  &lt;%&gt;</span></div><div class="m" style="left:958px;top:231px;width:17px;text-align:right;color:#6e6e6e">34</div><div class="m" style="left:980px;top:231px;"><span style="color:#000000;">    0x36, 0x49, 0x55, 0x52, 0x28, 0x00, </span><span style="color:#a09a00;font-style:italic;">// Символ 38  &lt;&amp;&gt;</span></div><div class="m" style="left:958px;top:244px;width:17px;text-align:right;color:#6e6e6e">35</div><div class="m" style="left:980px;top:244px;"><span style="color:#000000;">    0x07, 0x00, 0x00, 0x00, 0x00, 0x00, </span><span style="color:#a09a00;font-style:italic;">// Символ 39  &lt;&#x27;&gt;</span></div><div class="m" style="left:958px;top:257px;width:17px;text-align:right;color:#6e6e6e">36</div><div class="m" style="left:980px;top:257px;"><span style="color:#000000;">    0x7E, 0x81, 0x00, 0x00, 0x00, 0x00, </span><span style="color:#a09a00;font-style:italic;">// Символ 40  &lt;(&gt;</span></div><div class="m" style="left:958px;top:270px;width:17px;text-align:right;color:#6e6e6e">37</div><div class="m" style="left:980px;top:270px;"><span style="color:#000000;">    0x81, 0x7E, 0x00, 0x00, 0x00, 0x00, </span><span style="color:#a09a00;font-style:italic;">// Символ 41  &lt;)&gt;</span></div><div class="m" style="left:958px;top:283px;width:17px;text-align:right;color:#6e6e6e">38</div><div class="m" style="left:980px;top:283px;"><span style="color:#000000;">    0x08, 0x2A, 0x1C, 0x2A, 0x08, 0x00, </span><span style="color:#a09a00;font-style:italic;">// Символ 42  &lt;*&gt;</span></div><div class="m" style="left:958px;top:296px;width:17px;text-align:right;color:#6e6e6e">39</div><div class="m" style="left:980px;top:296px;"><span style="color:#000000;">    0x08, 0x08, 0x3E, 0x08, 0x08, 0x00, </span><span style="color:#a09a00;font-style:italic;">// Символ 43  &lt;+&gt;</span></div><div class="m" style="left:958px;top:309px;width:17px;text-align:right;color:#6e6e6e">40</div><div class="m" style="left:980px;top:309px;"><span style="color:#000000;">    0xA0, 0x60, 0x00, 0x00, 0x00, 0x00, </span><span style="color:#a09a00;font-style:italic;">// Символ 44  &lt;,&gt;</span></div><div class="m" style="left:958px;top:322px;width:17px;text-align:right;color:#6e6e6e">41</div><div class="m" style="left:980px;top:322px;"><span style="color:#000000;">    0x08, 0x08, 0x08, 0x08, 0x00, 0x00, </span><span style="color:#a09a00;font-style:italic;">// Символ 45  &lt;-&gt;</span></div><div class="m" style="left:958px;top:335px;width:17px;text-align:right;color:#6e6e6e">42</div><div class="m" style="left:980px;top:335px;"><span style="color:#000000;">    0x60, 0x60, 0x00, 0x00, 0x00, 0x00, </span><span style="color:#a09a00;font-style:italic;">// Символ 46  &lt;.&gt;</span></div><div class="m" style="left:958px;top:348px;width:17px;text-align:right;color:#6e6e6e">43</div><div class="m" style="left:980px;top:348px;"><span style="color:#000000;">    0xC0, 0x30, 0x0C, 0x03, 0x00, 0x00, </span><span style="color:#a09a00;font-style:italic;">// Символ 47  &lt;/&gt;</span></div><div class="m" style="left:958px;top:361px;width:17px;text-align:right;color:#6e6e6e">44</div><div class="m" style="left:980px;top:361px;"></div><div class="m" style="left:958px;top:374px;width:17px;text-align:right;color:#6e6e6e">45</div><div class="m" style="left:980px;top:374px;"><span style="color:#a09a00;font-style:italic;">        // Digits / Цифры</span></div><div class="m" style="left:958px;top:387px;width:17px;text-align:right;color:#6e6e6e">46</div><div class="m" style="left:980px;top:387px;"><span style="color:#000000;">    0x3E, 0x51, 0x49, 0x45, 0x3E, 0x00, </span><span style="color:#a09a00;font-style:italic;">// Символ 48  &lt;0&gt;</span></div><div class="m" style="left:958px;top:400px;width:17px;text-align:right;color:#6e6e6e">47</div><div class="m" style="left:980px;top:400px;"><span style="color:#000000;">    0x42, 0x7F, 0x40, 0x00, 0x00, 0x00, </span><span style="color:#a09a00;font-style:italic;">// Символ 49  &lt;1&gt;</span></div><div class="m" style="left:958px;top:413px;width:17px;text-align:right;color:#6e6e6e">48</div><div class="m" style="left:980px;top:413px;"><span style="color:#000000;">    0x72, 0x49, 0x49, 0x49, 0x46, 0x00, </span><span style="color:#a09a00;font-style:italic;">// Символ 50  &lt;2&gt;</span></div><div class="m" style="left:958px;top:426px;width:17px;text-align:right;color:#6e6e6e">49</div><div class="m" style="left:980px;top:426px;"><span style="color:#000000;">    0x21, 0x41, 0x45, 0x45, 0x3B, 0x00, </span><span style="color:#a09a00;font-style:italic;">// Символ 51  &lt;3&gt;</span></div><div class="m" style="left:958px;top:439px;width:17px;text-align:right;color:#6e6e6e">50</div><div class="m" style="left:980px;top:439px;"><span style="color:#000000;">    0x30, 0x28, 0x24, 0x22, 0x7F, 0x20, </span><span style="color:#a09a00;font-style:italic;">// Символ 52  &lt;4&gt;</span></div><div class="m" style="left:958px;top:452px;width:17px;text-align:right;color:#6e6e6e">51</div><div class="m" style="left:980px;top:452px;"><span style="color:#000000;">    0x27, 0x45, 0x45, 0x45, 0x39, 0x00, </span><span style="color:#a09a00;font-style:italic;">// Символ 53  &lt;5&gt;</span></div></div><div class="a" style="left:1347px;top:35px;width:17px;height:429px;background:#f0f0f0;"></div><div class="a" style="left:1347px;top:79px;width:15px;height:47px;background:#cdcdcd;"></div><svg class="a" style="left:1349px;top:40px;" width="11" height="9" viewBox="0 0 11 9"><path d="M1.5 6.5L5.5 2.5L9.5 6.5" fill="none" stroke="#606060" stroke-width="1.5"/></svg><svg class="a" style="left:1349px;top:451px;" width="11" height="9" viewBox="0 0 11 9"><path d="M1.5 2.5L5.5 6.5L9.5 2.5" fill="none" stroke="#606060" stroke-width="1.5"/></svg><div class="a" style="left:958px;top:464px;width:389px;height:16px;background:#f0f0f0;"></div><div class="a" style="left:974px;top:465px;width:301px;height:14px;background:#cdcdcd;"></div><svg class="a" style="left:961px;top:467px;" width="9" height="11" viewBox="0 0 9 11"><path d="M6.5 1.5L2.5 5.5L6.5 9.5" fill="none" stroke="#606060" stroke-width="1.5"/></svg><svg class="a" style="left:1334px;top:467px;" width="9" height="11" viewBox="0 0 9 11"><path d="M2.5 1.5L6.5 5.5L2.5 9.5" fill="none" stroke="#606060" stroke-width="1.5"/></svg><div class="a" style="left:954px;top:484px;width:413px;height:40px;background:#e6e6e6;"></div><svg class="a" style="left:975px;top:496px;" width="17" height="17" viewBox="0 0 17 17"><g fill="none" stroke="#56c08a" stroke-opacity="0.45" stroke-width="2.8" stroke-linecap="round" stroke-linejoin="round"><path d="M6.33 1.30L9.67 1.30L10.50 3.67L12.96 3.21L14.63 6.10L13.00 8.00L14.63 9.90L12.96 12.79L10.50 12.33L9.67 14.70L6.33 14.70L5.50 12.33L3.04 12.79L1.37 9.90L3.00 8.00L1.37 6.10L3.04 3.21L5.50 3.67Z"/><circle cx="8" cy="8" r="2.6"/></g><g fill="none" stroke="#0f3b27" stroke-width="1.5" stroke-linecap="round" stroke-linejoin="round"><path d="M6.33 1.30L9.67 1.30L10.50 3.67L12.96 3.21L14.63 6.10L13.00 8.00L14.63 9.90L12.96 12.79L10.50 12.33L9.67 14.70L6.33 14.70L5.50 12.33L3.04 12.79L1.37 9.90L3.00 8.00L1.37 6.10L3.04 3.21L5.50 3.67Z"/><circle cx="8" cy="8" r="2.6"/></g></svg><div class="a" style="left:1006px;top:488px;width:48px;height:31px;background:#bcd7ef;border:1px solid #8fc3ea;box-sizing:border-box;"></div><svg class="a" style="left:1021px;top:496px;" width="17" height="17" viewBox="0 0 17 17"><g fill="none" stroke="#56c08a" stroke-opacity="0.45" stroke-width="2.8" stroke-linecap="round" stroke-linejoin="round"><path d="M9.5 3.2C8.8 2 7.8 1.5 6.5 1.5C4 1.5 2.5 3.5 2.5 7.5C2.5 11.5 4 13.5 6.5 13.5C7.8 13.5 8.8 13 9.5 11.8"/><path d="M11 14H16"/></g><g fill="none" stroke="#0f3b27" stroke-width="1.5" stroke-linecap="round" stroke-linejoin="round"><path d="M9.5 3.2C8.8 2 7.8 1.5 6.5 1.5C4 1.5 2.5 3.5 2.5 7.5C2.5 11.5 4 13.5 6.5 13.5C7.8 13.5 8.8 13 9.5 11.8"/><path d="M11 14H16"/></g></svg><div class="a" style="left:1055px;top:490px;width:1px;height:28px;background:#a0a0a0;"></div><svg class="a" style="left:1074px;top:496px;" width="17" height="17" viewBox="0 0 17 17"><g fill="none" stroke="#56c08a" stroke-opacity="0.45" stroke-width="2.8" stroke-linecap="round" stroke-linejoin="round"><path d="M10.48 11.19L14.51 7.16A3.75 3.75 0 0 0 9.21 1.86L1.36 9.70A2.50 2.50 0 0 0 4.90 13.24L10.91 7.23A1.25 1.25 0 0 0 9.14 5.46L5.89 8.71" stroke-width="1.3"/></g><g fill="none" stroke="#0f3b27" stroke-width="1.5" stroke-linecap="round" stroke-linejoin="round"><path d="M10.48 11.19L14.51 7.16A3.75 3.75 0 0 0 9.21 1.86L1.36 9.70A2.50 2.50 0 0 0 4.90 13.24L10.91 7.23A1.25 1.25 0 0 0 9.14 5.46L5.89 8.71" stroke-width="1.3"/></g></svg><div class="t" style="left:1112px;top:496px;font-size:12px;line-height:16px;color:#000;transform:scaleX(1.0019);transform-origin:0 0;">matrixFont, © Riva</div><svg class="a" style="left:1235px;top:496px;" width="17" height="17" viewBox="0 0 17 17"><g fill="none" stroke="#56c08a" stroke-opacity="0.45" stroke-width="2.8" stroke-linecap="round" stroke-linejoin="round"><path d="M6.4 1.5H16L9.5 8.3L12.6 8.6L1.3 15.6L5.2 9.2L3.1 8.8Z"/></g><g fill="none" stroke="#0f3b27" stroke-width="1.5" stroke-linecap="round" stroke-linejoin="round"><path d="M6.4 1.5H16L9.5 8.3L12.6 8.6L1.3 15.6L5.2 9.2L3.1 8.8Z"/></g></svg><svg class="a" style="left:1283px;top:496px;" width="17" height="17" viewBox="0 0 17 17"><g fill="none" stroke="#56c08a" stroke-opacity="0.45" stroke-width="2.8" stroke-linecap="round" stroke-linejoin="round"><rect x="5" y="1.2" width="9.8" height="10.5"/><path d="M5 3.8H2V14.8H12V11.7"/></g><g fill="none" stroke="#0f3b27" stroke-width="1.5" stroke-linecap="round" stroke-linejoin="round"><rect x="5" y="1.2" width="9.8" height="10.5"/><path d="M5 3.8H2V14.8H12V11.7"/></g></svg><svg class="a" style="left:1332px;top:496px;" width="17" height="17" viewBox="0 0 17 17"><g fill="none" stroke="#56c08a" stroke-opacity="0.45" stroke-width="2.8" stroke-linecap="round" stroke-linejoin="round"><path d="M6.5 1.3H1V15.3H15.5V8.5"/><path d="M4.5 13.5C4.5 8.5 7.5 5 14.8 4.5"/><path d="M11.8 1.3L15 4.5L12 7.8"/></g><g fill="none" stroke="#0f3b27" stroke-width="1.5" stroke-linecap="round" stroke-linejoin="round"><path d="M6.5 1.3H1V15.3H15.5V8.5"/><path d="M4.5 13.5C4.5 8.5 7.5 5 14.8 4.5"/><path d="M11.8 1.3L15 4.5L12 7.8"/></g></svg><div class="a" style="left:953px;top:524px;width:415px;height:1px;background:#8a8a8a;"></div><div class="a" style="left:1367px;top:0px;width:1px;height:525px;background:#8a8a8a;"></div><div class="a" style="left:367px;top:525px;width:1001px;height:221px;background:#f0f0f0;"></div><div class="a" style="left:367px;top:525px;width:1001px;height:30px;background:#ffffff;"></div><div class="a" style="left:367px;top:745px;width:1001px;height:1px;background:#8a8a8a;"></div><div class="a" style="left:1367px;top:525px;width:1px;height:221px;background:#8a8a8a;"></div><svg class="a" style="left:374px;top:531px;" width="16" height="16" viewBox="0 0 16 16"><g fill="none" stroke="#56c08a" stroke-opacity="0.45" stroke-width="2.8" stroke-linecap="round" stroke-linejoin="round"><rect x="1.5" y="1.5" width="13.5" height="13.5" rx="0.5"/><path d="M5.5 4.8H10.5V12.2H7.2A1.8 1.8 0 0 1 7.2 8.6H10.5"/></g><g fill="none" stroke="#0f3b27" stroke-width="1.5" stroke-linecap="round" stroke-linejoin="round"><rect x="1.5" y="1.5" width="13.5" height="13.5" rx="0.5"/><path d="M5.5 4.8H10.5V12.2H7.2A1.8 1.8 0 0 1 7.2 8.6H10.5"/></g></svg><div class="t" style="left:396.5px;top:532px;font-size:12px;line-height:16px;color:#999999;transform:scaleX(0.9517);transform-origin:0 0;">Образец текста - 2:1</div><svg class="a" style="left:1346px;top:533px;" width="12" height="12" viewBox="0 0 12 12"><path d="M1 1L11 11M11 1L1 11" stroke="#8c8c8c" stroke-width="1"/></svg><div class="a" style="left:371px;top:559px;width:992px;height:142px;background:#0000a0;"></div><svg class="a" style="left:371px;top:559px;shape-rendering:crispEdges;" width="992" height="142" viewBox="0 0 992 142"><g transform="translate(-371,-559)"><path d="M373 561h2v2h-2zM373 563h2v2h-2zM373 565h2v2h-2zM373 567h2v2h-2zM373 569h2v2h-2zM373 571h2v2h-2zM373 573h2v2h-2zM375 561h2v2h-2zM375 567h2v2h-2zM377 561h2v2h-2zM377 567h2v2h-2zM379 561h2v2h-2zM379 567h2v2h-2zM381 563h2v2h-2zM381 565h2v2h-2zM385 563h2v2h-2zM385 565h2v2h-2zM385 567h2v2h-2zM385 569h2v2h-2zM385 571h2v2h-2zM385 573h2v2h-2zM387 561h2v2h-2zM387 567h2v2h-2zM389 561h2v2h-2zM389 567h2v2h-2zM391 561h2v2h-2zM391 567h2v2h-2zM393 563h2v2h-2zM393 565h2v2h-2zM393 567h2v2h-2zM393 569h2v2h-2zM393 571h2v2h-2zM393 573h2v2h-2zM397 563h2v2h-2zM397 565h2v2h-2zM397 567h2v2h-2zM397 569h2v2h-2zM397 571h2v2h-2zM399 561h2v2h-2zM399 573h2v2h-2zM401 561h2v2h-2zM401 573h2v2h-2zM403 561h2v2h-2zM403 573h2v2h-2zM405 563h2v2h-2zM405 571h2v2h-2zM409 561h2v2h-2zM409 563h2v2h-2zM409 565h2v2h-2zM409 567h2v2h-2zM409 569h2v2h-2zM409 571h2v2h-2zM409 573h2v2h-2zM411 567h2v2h-2zM413 565h2v2h-2zM413 569h2v2h-2zM415 563h2v2h-2zM415 571h2v2h-2zM417 561h2v2h-2zM417 573h2v2h-2zM431 561h2v2h-2zM431 563h2v2h-2zM431 565h2v2h-2zM431 567h2v2h-2zM431 569h2v2h-2zM431 571h2v2h-2zM431 573h2v2h-2zM433 563h2v2h-2zM435 565h2v2h-2zM437 563h2v2h-2zM439 561h2v2h-2zM439 563h2v2h-2zM439 565h2v2h-2zM439 567h2v2h-2zM439 569h2v2h-2zM439 571h2v2h-2zM439 573h2v2h-2zM443 561h2v2h-2zM443 563h2v2h-2zM445 565h2v2h-2zM447 567h2v2h-2zM447 569h2v2h-2zM447 571h2v2h-2zM447 573h2v2h-2zM449 565h2v2h-2zM451 561h2v2h-2zM451 563h2v2h-2zM465 561h2v2h-2zM465 563h2v2h-2zM465 565h2v2h-2zM465 567h2v2h-2zM465 569h2v2h-2zM465 571h2v2h-2zM465 573h2v2h-2zM467 561h2v2h-2zM467 567h2v2h-2zM467 573h2v2h-2zM469 561h2v2h-2zM469 567h2v2h-2zM469 573h2v2h-2zM471 561h2v2h-2zM471 567h2v2h-2zM471 573h2v2h-2zM473 563h2v2h-2zM473 565h2v2h-2zM473 569h2v2h-2zM473 571h2v2h-2zM477 563h2v2h-2zM477 565h2v2h-2zM477 567h2v2h-2zM477 569h2v2h-2zM477 571h2v2h-2zM479 561h2v2h-2zM479 573h2v2h-2zM481 561h2v2h-2zM481 573h2v2h-2zM483 561h2v2h-2zM483 573h2v2h-2zM485 563h2v2h-2zM485 565h2v2h-2zM485 567h2v2h-2zM485 569h2v2h-2zM485 571h2v2h-2zM489 561h2v2h-2zM489 563h2v2h-2zM489 571h2v2h-2zM489 573h2v2h-2zM491 565h2v2h-2zM491 569h2v2h-2zM493 567h2v2h-2zM495 565h2v2h-2zM495 569h2v2h-2zM497 561h2v2h-2zM497 563h2v2h-2zM497 571h2v2h-2zM497 573h2v2h-2zM511 561h2v2h-2zM511 563h2v2h-2zM511 565h2v2h-2zM511 567h2v2h-2zM511 569h2v2h-2zM513 571h2v2h-2zM513 573h2v2h-2zM515 567h2v2h-2zM515 569h2v2h-2zM517 571h2v2h-2zM517 573h2v2h-2zM519 561h2v2h-2zM519 563h2v2h-2zM519 565h2v2h-2zM519 567h2v2h-2zM519 569h2v2h-2zM523 561h2v2h-2zM523 573h2v2h-2zM525 561h2v2h-2zM525 563h2v2h-2zM525 565h2v2h-2zM525 567h2v2h-2zM525 569h2v2h-2zM525 571h2v2h-2zM525 573h2v2h-2zM527 561h2v2h-2zM527 573h2v2h-2zM531 561h2v2h-2zM533 561h2v2h-2zM535 561h2v2h-2zM535 563h2v2h-2zM535 565h2v2h-2zM535 567h2v2h-2zM535 569h2v2h-2zM535 571h2v2h-2zM535 573h2v2h-2zM537 561h2v2h-2zM539 561h2v2h-2zM543 561h2v2h-2zM543 563h2v2h-2zM543 565h2v2h-2zM543 567h2v2h-2zM543 569h2v2h-2zM543 571h2v2h-2zM543 573h2v2h-2zM545 567h2v2h-2zM547 567h2v2h-2zM549 567h2v2h-2zM551 561h2v2h-2zM551 563h2v2h-2zM551 565h2v2h-2zM551 567h2v2h-2zM551 569h2v2h-2zM551 571h2v2h-2zM551 573h2v2h-2zM565 561h2v2h-2zM565 563h2v2h-2zM565 565h2v2h-2zM565 567h2v2h-2zM565 569h2v2h-2zM565 571h2v2h-2zM565 573h2v2h-2zM567 561h2v2h-2zM567 567h2v2h-2zM569 561h2v2h-2zM569 567h2v2h-2zM571 561h2v2h-2zM571 567h2v2h-2zM573 561h2v2h-2zM577 561h2v2h-2zM577 573h2v2h-2zM579 561h2v2h-2zM579 563h2v2h-2zM579 565h2v2h-2zM579 567h2v2h-2zM579 569h2v2h-2zM579 571h2v2h-2zM579 573h2v2h-2zM581 561h2v2h-2zM581 573h2v2h-2zM585 561h2v2h-2zM585 563h2v2h-2zM585 565h2v2h-2zM585 567h2v2h-2zM585 569h2v2h-2zM587 571h2v2h-2zM589 573h2v2h-2zM591 571h2v2h-2zM593 561h2v2h-2zM593 563h2v2h-2zM593 565h2v2h-2zM593 567h2v2h-2zM593 569h2v2h-2zM597 561h2v2h-2zM597 563h2v2h-2zM597 565h2v2h-2zM597 567h2v2h-2zM597 569h2v2h-2zM597 571h2v2h-2zM597 573h2v2h-2zM599 561h2v2h-2zM599 567h2v2h-2zM599 573h2v2h-2zM601 561h2v2h-2zM601 567h2v2h-2zM601 573h2v2h-2zM603 561h2v2h-2zM603 567h2v2h-2zM603 573h2v2h-2zM605 561h2v2h-2zM605 573h2v2h-2zM619 561h2v2h-2zM619 563h2v2h-2zM619 565h2v2h-2zM619 567h2v2h-2zM619 569h2v2h-2zM619 571h2v2h-2zM619 573h2v2h-2zM621 561h2v2h-2zM621 573h2v2h-2zM623 561h2v2h-2zM623 573h2v2h-2zM625 561h2v2h-2zM625 573h2v2h-2zM627 563h2v2h-2zM627 565h2v2h-2zM627 567h2v2h-2zM627 569h2v2h-2zM627 571h2v2h-2zM631 563h2v2h-2zM631 565h2v2h-2zM631 567h2v2h-2zM631 569h2v2h-2zM631 571h2v2h-2zM633 561h2v2h-2zM633 573h2v2h-2zM635 561h2v2h-2zM635 573h2v2h-2zM637 561h2v2h-2zM637 573h2v2h-2zM639 563h2v2h-2zM639 565h2v2h-2zM639 567h2v2h-2zM639 569h2v2h-2zM639 571h2v2h-2zM643 561h2v2h-2zM643 571h2v2h-2zM643 573h2v2h-2zM645 561h2v2h-2zM645 569h2v2h-2zM645 573h2v2h-2zM647 561h2v2h-2zM647 567h2v2h-2zM647 573h2v2h-2zM649 561h2v2h-2zM649 565h2v2h-2zM649 573h2v2h-2zM651 561h2v2h-2zM651 563h2v2h-2zM651 573h2v2h-2zM655 561h2v2h-2zM655 563h2v2h-2zM655 565h2v2h-2zM655 567h2v2h-2zM655 569h2v2h-2zM655 571h2v2h-2zM655 573h2v2h-2zM657 561h2v2h-2zM657 567h2v2h-2zM657 573h2v2h-2zM659 561h2v2h-2zM659 567h2v2h-2zM659 573h2v2h-2zM661 561h2v2h-2zM661 567h2v2h-2zM661 573h2v2h-2zM663 561h2v2h-2zM663 573h2v2h-2zM667 561h2v2h-2zM667 563h2v2h-2zM667 565h2v2h-2zM667 567h2v2h-2zM667 569h2v2h-2zM667 571h2v2h-2zM667 573h2v2h-2zM669 563h2v2h-2zM671 565h2v2h-2zM673 567h2v2h-2zM675 561h2v2h-2zM675 563h2v2h-2zM675 565h2v2h-2zM675 567h2v2h-2zM675 569h2v2h-2zM675 571h2v2h-2zM675 573h2v2h-2zM689 561h2v2h-2zM689 563h2v2h-2zM689 565h2v2h-2zM689 567h2v2h-2zM689 569h2v2h-2zM689 571h2v2h-2zM689 573h2v2h-2zM691 573h2v2h-2zM693 573h2v2h-2zM695 573h2v2h-2zM697 573h2v2h-2zM701 561h2v2h-2zM701 573h2v2h-2zM703 561h2v2h-2zM703 563h2v2h-2zM703 565h2v2h-2zM703 567h2v2h-2zM703 569h2v2h-2zM703 571h2v2h-2zM703 573h2v2h-2zM705 561h2v2h-2zM705 573h2v2h-2zM709 563h2v2h-2zM709 565h2v2h-2zM709 567h2v2h-2zM709 569h2v2h-2zM709 571h2v2h-2zM711 561h2v2h-2zM711 573h2v2h-2zM713 561h2v2h-2zM713 569h2v2h-2zM713 573h2v2h-2zM715 561h2v2h-2zM715 571h2v2h-2zM717 563h2v2h-2zM717 565h2v2h-2zM717 567h2v2h-2zM717 569h2v2h-2zM717 573h2v2h-2zM721 561h2v2h-2zM721 563h2v2h-2zM721 565h2v2h-2zM721 567h2v2h-2zM721 569h2v2h-2zM721 571h2v2h-2zM723 573h2v2h-2zM725 573h2v2h-2zM727 573h2v2h-2zM729 561h2v2h-2zM729 563h2v2h-2zM729 565h2v2h-2zM729 567h2v2h-2zM729 569h2v2h-2zM729 571h2v2h-2zM733 563h2v2h-2zM733 565h2v2h-2zM733 567h2v2h-2zM733 569h2v2h-2zM733 571h2v2h-2zM735 561h2v2h-2zM735 573h2v2h-2zM737 561h2v2h-2zM737 573h2v2h-2zM739 561h2v2h-2zM739 573h2v2h-2zM741 563h2v2h-2zM741 565h2v2h-2zM741 567h2v2h-2zM741 569h2v2h-2zM741 571h2v2h-2zM745 561h2v2h-2zM745 563h2v2h-2zM745 565h2v2h-2zM745 567h2v2h-2zM745 569h2v2h-2zM745 571h2v2h-2zM745 573h2v2h-2zM747 561h2v2h-2zM747 567h2v2h-2zM749 561h2v2h-2zM749 567h2v2h-2zM749 569h2v2h-2zM751 561h2v2h-2zM751 567h2v2h-2zM751 571h2v2h-2zM753 563h2v2h-2zM753 565h2v2h-2zM753 573h2v2h-2zM767 561h2v2h-2zM767 573h2v2h-2zM769 561h2v2h-2zM769 563h2v2h-2zM769 565h2v2h-2zM769 567h2v2h-2zM769 569h2v2h-2zM769 571h2v2h-2zM771 561h2v2h-2zM775 561h2v2h-2zM775 563h2v2h-2zM775 565h2v2h-2zM775 567h2v2h-2zM775 569h2v2h-2zM775 571h2v2h-2zM777 573h2v2h-2zM779 573h2v2h-2zM781 573h2v2h-2zM783 561h2v2h-2zM783 563h2v2h-2zM783 565h2v2h-2zM783 567h2v2h-2zM783 569h2v2h-2zM783 571h2v2h-2zM787 563h2v2h-2zM787 565h2v2h-2zM787 567h2v2h-2zM787 569h2v2h-2zM787 571h2v2h-2zM789 561h2v2h-2zM789 573h2v2h-2zM791 561h2v2h-2zM791 573h2v2h-2zM793 561h2v2h-2zM793 567h2v2h-2zM793 573h2v2h-2zM795 563h2v2h-2zM795 567h2v2h-2zM795 569h2v2h-2zM795 571h2v2h-2zM799 563h2v2h-2zM799 565h2v2h-2zM799 573h2v2h-2zM801 561h2v2h-2zM801 567h2v2h-2zM801 573h2v2h-2zM803 561h2v2h-2zM803 567h2v2h-2zM803 573h2v2h-2zM805 561h2v2h-2zM805 567h2v2h-2zM805 573h2v2h-2zM807 561h2v2h-2zM807 569h2v2h-2zM807 571h2v2h-2zM373 583h2v2h-2zM373 585h2v2h-2zM373 587h2v2h-2zM373 589h2v2h-2zM373 591h2v2h-2zM373 593h2v2h-2zM375 583h2v2h-2zM375 591h2v2h-2zM377 583h2v2h-2zM377 591h2v2h-2zM379 585h2v2h-2zM379 587h2v2h-2zM379 589h2v2h-2zM383 589h2v2h-2zM385 583h2v2h-2zM385 587h2v2h-2zM385 591h2v2h-2zM387 583h2v2h-2zM387 587h2v2h-2zM387 591h2v2h-2zM389 585h2v2h-2zM389 587h2v2h-2zM389 589h2v2h-2zM389 591h2v2h-2zM393 585h2v2h-2zM393 587h2v2h-2zM393 589h2v2h-2zM395 583h2v2h-2zM395 591h2v2h-2zM397 583h2v2h-2zM397 591h2v2h-2zM399 583h2v2h-2zM399 591h2v2h-2zM403 579h2v2h-2zM403 581h2v2h-2zM403 583h2v2h-2zM403 585h2v2h-2zM403 587h2v2h-2zM403 589h2v2h-2zM403 591h2v2h-2zM405 587h2v2h-2zM407 585h2v2h-2zM407 589h2v2h-2zM409 583h2v2h-2zM409 591h2v2h-2zM423 583h2v2h-2zM423 585h2v2h-2zM423 587h2v2h-2zM423 589h2v2h-2zM423 591h2v2h-2zM425 583h2v2h-2zM427 583h2v2h-2zM427 585h2v2h-2zM427 587h2v2h-2zM427 589h2v2h-2zM427 591h2v2h-2zM429 583h2v2h-2zM431 585h2v2h-2zM431 587h2v2h-2zM431 589h2v2h-2zM431 591h2v2h-2zM435 583h2v2h-2zM435 585h2v2h-2zM435 587h2v2h-2zM437 589h2v2h-2zM437 593h2v2h-2zM439 589h2v2h-2zM439 593h2v2h-2zM441 583h2v2h-2zM441 585h2v2h-2zM441 587h2v2h-2zM441 589h2v2h-2zM441 591h2v2h-2zM455 579h2v2h-2zM455 581h2v2h-2zM455 583h2v2h-2zM455 585h2v2h-2zM455 587h2v2h-2zM455 589h2v2h-2zM455 591h2v2h-2zM457 583h2v2h-2zM457 591h2v2h-2zM459 583h2v2h-2zM459 591h2v2h-2zM461 585h2v2h-2zM461 587h2v2h-2zM461 589h2v2h-2zM465 585h2v2h-2zM465 587h2v2h-2zM465 589h2v2h-2zM467 583h2v2h-2zM467 591h2v2h-2zM469 583h2v2h-2zM469 591h2v2h-2zM471 585h2v2h-2zM471 587h2v2h-2zM471 589h2v2h-2zM475 583h2v2h-2zM475 591h2v2h-2zM477 585h2v2h-2zM477 589h2v2h-2zM479 587h2v2h-2zM481 585h2v2h-2zM481 589h2v2h-2zM483 583h2v2h-2zM483 591h2v2h-2zM497 583h2v2h-2zM497 585h2v2h-2zM497 587h2v2h-2zM499 589h2v2h-2zM499 591h2v2h-2zM501 587h2v2h-2zM503 589h2v2h-2zM503 591h2v2h-2zM505 583h2v2h-2zM505 585h2v2h-2zM505 587h2v2h-2zM509 579h2v2h-2zM509 583h2v2h-2zM509 585h2v2h-2zM509 587h2v2h-2zM509 589h2v2h-2zM509 591h2v2h-2zM513 585h2v2h-2zM515 579h2v2h-2zM515 581h2v2h-2zM515 583h2v2h-2zM515 585h2v2h-2zM515 587h2v2h-2zM515 589h2v2h-2zM517 585h2v2h-2zM517 591h2v2h-2zM519 585h2v2h-2zM519 591h2v2h-2zM523 579h2v2h-2zM523 581h2v2h-2zM523 583h2v2h-2zM523 585h2v2h-2zM523 587h2v2h-2zM523 589h2v2h-2zM523 591h2v2h-2zM525 583h2v2h-2zM527 583h2v2h-2zM529 585h2v2h-2zM529 587h2v2h-2zM529 589h2v2h-2zM529 591h2v2h-2zM543 585h2v2h-2zM545 581h2v2h-2zM545 583h2v2h-2zM545 585h2v2h-2zM545 587h2v2h-2zM545 589h2v2h-2zM545 591h2v2h-2zM547 579h2v2h-2zM547 585h2v2h-2zM549 579h2v2h-2zM553 579h2v2h-2zM553 583h2v2h-2zM553 585h2v2h-2zM553 587h2v2h-2zM553 589h2v2h-2zM553 591h2v2h-2zM557 583h2v2h-2zM557 585h2v2h-2zM557 587h2v2h-2zM557 589h2v2h-2zM559 591h2v2h-2zM561 589h2v2h-2zM563 583h2v2h-2zM563 585h2v2h-2zM563 587h2v2h-2zM567 585h2v2h-2zM567 587h2v2h-2zM567 589h2v2h-2zM569 583h2v2h-2zM569 587h2v2h-2zM569 591h2v2h-2zM571 583h2v2h-2zM571 587h2v2h-2zM571 591h2v2h-2zM573 585h2v2h-2zM573 587h2v2h-2zM573 591h2v2h-2zM587 585h2v2h-2zM587 587h2v2h-2zM587 589h2v2h-2zM589 583h2v2h-2zM589 591h2v2h-2zM591 583h2v2h-2zM591 591h2v2h-2zM593 579h2v2h-2zM593 581h2v2h-2zM593 583h2v2h-2zM593 585h2v2h-2zM593 587h2v2h-2zM593 589h2v2h-2zM593 591h2v2h-2zM597 585h2v2h-2zM597 587h2v2h-2zM597 589h2v2h-2zM599 583h2v2h-2zM599 591h2v2h-2zM601 583h2v2h-2zM601 591h2v2h-2zM603 585h2v2h-2zM603 587h2v2h-2zM603 589h2v2h-2zM607 583h2v2h-2zM607 589h2v2h-2zM607 591h2v2h-2zM609 583h2v2h-2zM609 587h2v2h-2zM609 591h2v2h-2zM611 583h2v2h-2zM611 585h2v2h-2zM611 591h2v2h-2zM613 583h2v2h-2zM613 591h2v2h-2zM617 585h2v2h-2zM617 587h2v2h-2zM617 589h2v2h-2zM619 583h2v2h-2zM619 587h2v2h-2zM619 591h2v2h-2zM621 583h2v2h-2zM621 587h2v2h-2zM621 591h2v2h-2zM623 585h2v2h-2zM623 587h2v2h-2zM623 591h2v2h-2zM627 583h2v2h-2zM627 585h2v2h-2zM627 587h2v2h-2zM627 589h2v2h-2zM627 591h2v2h-2zM629 583h2v2h-2zM631 583h2v2h-2zM633 585h2v2h-2zM633 587h2v2h-2zM633 589h2v2h-2zM633 591h2v2h-2zM647 579h2v2h-2zM649 579h2v2h-2zM649 581h2v2h-2zM649 583h2v2h-2zM649 585h2v2h-2zM649 587h2v2h-2zM649 589h2v2h-2zM649 591h2v2h-2zM653 579h2v2h-2zM653 583h2v2h-2zM653 585h2v2h-2zM653 587h2v2h-2zM653 589h2v2h-2zM653 591h2v2h-2zM657 585h2v2h-2zM657 587h2v2h-2zM657 589h2v2h-2zM659 583h2v2h-2zM659 591h2v2h-2zM661 583h2v2h-2zM661 591h2v2h-2zM663 583h2v2h-2zM663 585h2v2h-2zM663 587h2v2h-2zM663 589h2v2h-2zM663 591h2v2h-2zM663 593h2v2h-2zM667 583h2v2h-2zM667 585h2v2h-2zM667 587h2v2h-2zM667 589h2v2h-2zM669 591h2v2h-2zM671 591h2v2h-2zM673 583h2v2h-2zM673 585h2v2h-2zM673 587h2v2h-2zM673 589h2v2h-2zM673 591h2v2h-2zM677 585h2v2h-2zM677 587h2v2h-2zM677 589h2v2h-2zM679 583h2v2h-2zM679 591h2v2h-2zM681 583h2v2h-2zM681 591h2v2h-2zM683 585h2v2h-2zM683 587h2v2h-2zM683 589h2v2h-2zM687 583h2v2h-2zM687 585h2v2h-2zM687 587h2v2h-2zM687 589h2v2h-2zM687 591h2v2h-2zM689 585h2v2h-2zM691 583h2v2h-2zM693 585h2v2h-2zM707 593h2v2h-2zM709 579h2v2h-2zM709 583h2v2h-2zM709 585h2v2h-2zM709 587h2v2h-2zM709 589h2v2h-2zM709 591h2v2h-2zM713 583h2v2h-2zM713 585h2v2h-2zM713 587h2v2h-2zM713 589h2v2h-2zM715 591h2v2h-2zM717 591h2v2h-2zM719 583h2v2h-2zM719 585h2v2h-2zM719 587h2v2h-2zM719 589h2v2h-2zM719 591h2v2h-2zM723 585h2v2h-2zM723 587h2v2h-2zM725 583h2v2h-2zM725 589h2v2h-2zM725 593h2v2h-2zM727 583h2v2h-2zM727 589h2v2h-2zM727 593h2v2h-2zM729 583h2v2h-2zM729 585h2v2h-2zM729 587h2v2h-2zM729 589h2v2h-2zM729 591h2v2h-2zM733 585h2v2h-2zM733 591h2v2h-2zM735 583h2v2h-2zM735 587h2v2h-2zM735 591h2v2h-2zM737 583h2v2h-2zM737 587h2v2h-2zM737 591h2v2h-2zM739 583h2v2h-2zM739 589h2v2h-2zM373 609h2v2h-2zM375 599h2v2h-2zM375 601h2v2h-2zM375 603h2v2h-2zM375 605h2v2h-2zM375 607h2v2h-2zM377 597h2v2h-2zM379 597h2v2h-2zM381 597h2v2h-2zM381 599h2v2h-2zM381 601h2v2h-2zM381 603h2v2h-2zM381 605h2v2h-2zM381 607h2v2h-2zM381 609h2v2h-2zM385 597h2v2h-2zM385 599h2v2h-2zM385 601h2v2h-2zM385 603h2v2h-2zM385 605h2v2h-2zM385 607h2v2h-2zM385 609h2v2h-2zM387 603h2v2h-2zM389 599h2v2h-2zM389 601h2v2h-2zM389 603h2v2h-2zM389 605h2v2h-2zM389 607h2v2h-2zM391 597h2v2h-2zM391 609h2v2h-2zM393 597h2v2h-2zM393 609h2v2h-2zM395 599h2v2h-2zM395 601h2v2h-2zM395 603h2v2h-2zM395 605h2v2h-2zM395 607h2v2h-2zM399 597h2v2h-2zM399 599h2v2h-2zM399 601h2v2h-2zM399 603h2v2h-2zM399 605h2v2h-2zM399 607h2v2h-2zM399 609h2v2h-2zM401 597h2v2h-2zM401 603h2v2h-2zM401 609h2v2h-2zM403 597h2v2h-2zM403 603h2v2h-2zM403 609h2v2h-2zM405 597h2v2h-2zM405 603h2v2h-2zM405 609h2v2h-2zM407 597h2v2h-2zM407 605h2v2h-2zM407 607h2v2h-2zM411 599h2v2h-2zM411 601h2v2h-2zM411 609h2v2h-2zM413 597h2v2h-2zM413 603h2v2h-2zM413 607h2v2h-2zM415 597h2v2h-2zM415 603h2v2h-2zM415 605h2v2h-2zM417 597h2v2h-2zM417 603h2v2h-2zM419 597h2v2h-2zM419 599h2v2h-2zM419 601h2v2h-2zM419 603h2v2h-2zM419 605h2v2h-2zM419 607h2v2h-2zM419 609h2v2h-2zM423 607h2v2h-2zM423 611h2v2h-2zM425 607h2v2h-2zM425 609h2v2h-2zM439 599h2v2h-2zM439 601h2v2h-2zM439 603h2v2h-2zM439 605h2v2h-2zM439 607h2v2h-2zM441 597h2v2h-2zM441 609h2v2h-2zM443 597h2v2h-2zM443 609h2v2h-2zM445 597h2v2h-2zM445 609h2v2h-2zM447 599h2v2h-2zM447 607h2v2h-2zM451 597h2v2h-2zM453 597h2v2h-2zM453 599h2v2h-2zM453 601h2v2h-2zM453 603h2v2h-2zM453 605h2v2h-2zM453 607h2v2h-2zM453 609h2v2h-2zM455 601h2v2h-2zM455 609h2v2h-2zM457 601h2v2h-2zM457 609h2v2h-2zM459 603h2v2h-2zM459 605h2v2h-2zM459 607h2v2h-2zM463 597h2v2h-2zM463 599h2v2h-2zM463 601h2v2h-2zM463 603h2v2h-2zM463 605h2v2h-2zM463 607h2v2h-2zM463 609h2v2h-2zM465 597h2v2h-2zM465 603h2v2h-2zM465 609h2v2h-2zM467 597h2v2h-2zM467 603h2v2h-2zM467 609h2v2h-2zM469 597h2v2h-2zM469 603h2v2h-2zM469 609h2v2h-2zM471 597h2v2h-2zM471 609h2v2h-2zM475 597h2v2h-2zM475 599h2v2h-2zM475 601h2v2h-2zM475 603h2v2h-2zM475 605h2v2h-2zM475 607h2v2h-2zM475 609h2v2h-2zM477 609h2v2h-2zM479 597h2v2h-2zM479 599h2v2h-2zM479 601h2v2h-2zM479 603h2v2h-2zM479 605h2v2h-2zM479 607h2v2h-2zM479 609h2v2h-2zM481 609h2v2h-2zM483 597h2v2h-2zM483 599h2v2h-2zM483 601h2v2h-2zM483 603h2v2h-2zM483 605h2v2h-2zM483 607h2v2h-2zM483 609h2v2h-2zM487 597h2v2h-2zM487 599h2v2h-2zM487 601h2v2h-2zM487 603h2v2h-2zM487 605h2v2h-2zM487 607h2v2h-2zM487 609h2v2h-2zM489 601h2v2h-2zM489 609h2v2h-2zM491 601h2v2h-2zM491 609h2v2h-2zM493 603h2v2h-2zM493 605h2v2h-2zM493 607h2v2h-2zM507 597h2v2h-2zM507 599h2v2h-2zM507 601h2v2h-2zM507 603h2v2h-2zM507 605h2v2h-2zM507 607h2v2h-2zM507 609h2v2h-2zM509 609h2v2h-2zM511 597h2v2h-2zM511 599h2v2h-2zM511 601h2v2h-2zM511 603h2v2h-2zM511 605h2v2h-2zM511 607h2v2h-2zM511 609h2v2h-2zM513 609h2v2h-2zM515 597h2v2h-2zM515 599h2v2h-2zM515 601h2v2h-2zM515 603h2v2h-2zM515 605h2v2h-2zM515 607h2v2h-2zM515 609h2v2h-2zM517 609h2v2h-2zM517 611h2v2h-2zM521 597h2v2h-2zM521 599h2v2h-2zM521 601h2v2h-2zM521 603h2v2h-2zM521 605h2v2h-2zM521 607h2v2h-2zM521 609h2v2h-2zM523 607h2v2h-2zM525 605h2v2h-2zM527 603h2v2h-2zM529 597h2v2h-2zM529 599h2v2h-2zM529 601h2v2h-2zM529 603h2v2h-2zM529 605h2v2h-2zM529 607h2v2h-2zM529 609h2v2h-2zM533 597h2v2h-2zM533 599h2v2h-2zM533 601h2v2h-2zM533 603h2v2h-2zM533 605h2v2h-2zM533 607h2v2h-2zM533 609h2v2h-2zM535 597h2v2h-2zM537 597h2v2h-2zM539 597h2v2h-2zM541 597h2v2h-2zM541 599h2v2h-2zM541 601h2v2h-2zM541 603h2v2h-2zM541 605h2v2h-2zM541 607h2v2h-2zM541 609h2v2h-2zM545 597h2v2h-2zM545 599h2v2h-2zM545 601h2v2h-2zM545 603h2v2h-2zM545 605h2v2h-2zM545 607h2v2h-2zM545 609h2v2h-2zM547 609h2v2h-2zM549 609h2v2h-2zM551 597h2v2h-2zM551 599h2v2h-2zM551 601h2v2h-2zM551 603h2v2h-2zM551 605h2v2h-2zM551 607h2v2h-2zM551 609h2v2h-2zM553 609h2v2h-2zM553 611h2v2h-2zM557 597h2v2h-2zM557 599h2v2h-2zM557 601h2v2h-2zM557 603h2v2h-2zM557 605h2v2h-2zM557 607h2v2h-2zM557 609h2v2h-2zM559 601h2v2h-2zM559 609h2v2h-2zM561 601h2v2h-2zM561 609h2v2h-2zM563 603h2v2h-2zM563 605h2v2h-2zM563 607h2v2h-2zM567 597h2v2h-2zM567 599h2v2h-2zM567 601h2v2h-2zM567 603h2v2h-2zM567 605h2v2h-2zM567 607h2v2h-2zM567 609h2v2h-2zM571 607h2v2h-2zM571 611h2v2h-2zM573 607h2v2h-2zM573 609h2v2h-2zM587 603h2v2h-2zM589 603h2v2h-2zM591 603h2v2h-2zM593 603h2v2h-2zM607 597h2v2h-2zM607 599h2v2h-2zM607 601h2v2h-2zM607 603h2v2h-2zM607 605h2v2h-2zM607 607h2v2h-2zM607 609h2v2h-2zM609 597h2v2h-2zM609 603h2v2h-2zM609 609h2v2h-2zM611 597h2v2h-2zM611 603h2v2h-2zM611 609h2v2h-2zM613 597h2v2h-2zM613 603h2v2h-2zM613 609h2v2h-2zM615 599h2v2h-2zM615 601h2v2h-2zM615 605h2v2h-2zM615 607h2v2h-2zM619 599h2v2h-2zM619 607h2v2h-2zM621 597h2v2h-2zM621 603h2v2h-2zM621 609h2v2h-2zM623 597h2v2h-2zM623 603h2v2h-2zM623 609h2v2h-2zM625 597h2v2h-2zM625 603h2v2h-2zM625 609h2v2h-2zM627 599h2v2h-2zM627 601h2v2h-2zM627 605h2v2h-2zM627 607h2v2h-2zM631 607h2v2h-2zM631 609h2v2h-2zM633 599h2v2h-2zM633 601h2v2h-2zM633 603h2v2h-2zM633 605h2v2h-2zM633 607h2v2h-2zM635 597h2v2h-2zM635 607h2v2h-2zM637 597h2v2h-2zM637 599h2v2h-2zM637 601h2v2h-2zM637 603h2v2h-2zM637 605h2v2h-2zM637 607h2v2h-2zM639 607h2v2h-2zM639 609h2v2h-2zM643 599h2v2h-2zM643 601h2v2h-2zM643 603h2v2h-2zM643 605h2v2h-2zM643 607h2v2h-2zM645 597h2v2h-2zM645 609h2v2h-2zM647 597h2v2h-2zM647 609h2v2h-2zM649 597h2v2h-2zM649 609h2v2h-2zM651 599h2v2h-2zM651 601h2v2h-2zM651 603h2v2h-2zM651 605h2v2h-2zM651 607h2v2h-2zM655 597h2v2h-2zM655 599h2v2h-2zM655 607h2v2h-2zM655 609h2v2h-2zM657 601h2v2h-2zM657 605h2v2h-2zM659 603h2v2h-2zM661 601h2v2h-2zM661 605h2v2h-2zM663 597h2v2h-2zM663 599h2v2h-2zM663 607h2v2h-2zM663 609h2v2h-2zM667 597h2v2h-2zM667 599h2v2h-2zM667 601h2v2h-2zM667 603h2v2h-2zM667 605h2v2h-2zM667 607h2v2h-2zM667 609h2v2h-2zM669 603h2v2h-2zM671 603h2v2h-2zM673 603h2v2h-2zM675 597h2v2h-2zM675 599h2v2h-2zM675 601h2v2h-2zM675 603h2v2h-2zM675 605h2v2h-2zM675 607h2v2h-2zM675 609h2v2h-2zM679 597h2v2h-2zM679 601h2v2h-2zM679 603h2v2h-2zM679 605h2v2h-2zM679 607h2v2h-2zM679 609h2v2h-2zM681 601h2v2h-2zM681 605h2v2h-2zM681 609h2v2h-2zM683 601h2v2h-2zM683 605h2v2h-2zM683 609h2v2h-2zM685 597h2v2h-2zM685 601h2v2h-2zM685 609h2v2h-2zM689 597h2v2h-2zM691 597h2v2h-2zM693 597h2v2h-2zM693 599h2v2h-2zM693 601h2v2h-2zM693 603h2v2h-2zM693 605h2v2h-2zM693 607h2v2h-2zM693 609h2v2h-2zM695 597h2v2h-2zM697 597h2v2h-2zM711 597h2v2h-2zM711 599h2v2h-2zM711 601h2v2h-2zM711 603h2v2h-2zM711 605h2v2h-2zM711 607h2v2h-2zM711 609h2v2h-2zM713 599h2v2h-2zM715 601h2v2h-2zM717 599h2v2h-2zM719 597h2v2h-2zM719 599h2v2h-2zM719 601h2v2h-2zM719 603h2v2h-2zM719 605h2v2h-2zM719 607h2v2h-2zM719 609h2v2h-2zM723 599h2v2h-2zM723 607h2v2h-2zM725 597h2v2h-2zM725 609h2v2h-2zM727 597h2v2h-2zM727 603h2v2h-2zM727 609h2v2h-2zM729 597h2v2h-2zM729 603h2v2h-2zM729 609h2v2h-2zM731 599h2v2h-2zM731 601h2v2h-2zM731 603h2v2h-2zM731 605h2v2h-2zM731 607h2v2h-2zM735 597h2v2h-2zM735 599h2v2h-2zM735 601h2v2h-2zM735 603h2v2h-2zM735 605h2v2h-2zM735 607h2v2h-2zM735 609h2v2h-2zM737 597h2v2h-2zM737 603h2v2h-2zM739 597h2v2h-2zM739 603h2v2h-2zM741 597h2v2h-2zM741 603h2v2h-2zM743 599h2v2h-2zM743 601h2v2h-2zM747 607h2v2h-2zM747 611h2v2h-2zM749 607h2v2h-2zM749 609h2v2h-2zM763 603h2v2h-2zM765 603h2v2h-2zM767 603h2v2h-2zM769 603h2v2h-2zM783 597h2v2h-2zM783 599h2v2h-2zM783 601h2v2h-2zM783 603h2v2h-2zM783 605h2v2h-2zM783 607h2v2h-2zM783 609h2v2h-2zM785 603h2v2h-2zM787 601h2v2h-2zM787 605h2v2h-2zM789 599h2v2h-2zM789 607h2v2h-2zM791 597h2v2h-2zM791 609h2v2h-2zM795 599h2v2h-2zM795 601h2v2h-2zM795 603h2v2h-2zM795 605h2v2h-2zM795 607h2v2h-2zM795 609h2v2h-2zM797 597h2v2h-2zM797 603h2v2h-2zM799 597h2v2h-2zM799 603h2v2h-2zM801 597h2v2h-2zM801 603h2v2h-2zM803 599h2v2h-2zM803 601h2v2h-2zM803 603h2v2h-2zM803 605h2v2h-2zM803 607h2v2h-2zM803 609h2v2h-2zM807 597h2v2h-2zM807 599h2v2h-2zM807 601h2v2h-2zM807 603h2v2h-2zM807 605h2v2h-2zM807 607h2v2h-2zM807 609h2v2h-2zM809 607h2v2h-2zM811 597h2v2h-2zM811 605h2v2h-2zM813 603h2v2h-2zM815 597h2v2h-2zM815 599h2v2h-2zM815 601h2v2h-2zM815 603h2v2h-2zM815 605h2v2h-2zM815 607h2v2h-2zM815 609h2v2h-2zM819 601h2v2h-2zM819 603h2v2h-2zM819 605h2v2h-2zM821 599h2v2h-2zM821 607h2v2h-2zM823 597h2v2h-2zM823 599h2v2h-2zM823 601h2v2h-2zM823 603h2v2h-2zM823 605h2v2h-2zM823 607h2v2h-2zM823 609h2v2h-2zM825 599h2v2h-2zM825 607h2v2h-2zM827 601h2v2h-2zM827 603h2v2h-2zM827 605h2v2h-2zM841 597h2v2h-2zM841 599h2v2h-2zM841 601h2v2h-2zM841 605h2v2h-2zM841 607h2v2h-2zM841 609h2v2h-2zM843 603h2v2h-2zM845 597h2v2h-2zM845 599h2v2h-2zM845 601h2v2h-2zM845 603h2v2h-2zM845 605h2v2h-2zM845 607h2v2h-2zM845 609h2v2h-2zM847 603h2v2h-2zM849 597h2v2h-2zM849 599h2v2h-2zM849 601h2v2h-2zM849 605h2v2h-2zM849 607h2v2h-2zM849 609h2v2h-2zM853 597h2v2h-2zM853 599h2v2h-2zM853 601h2v2h-2zM853 603h2v2h-2zM853 605h2v2h-2zM853 607h2v2h-2zM853 609h2v2h-2zM855 597h2v2h-2zM857 597h2v2h-2zM859 597h2v2h-2zM861 597h2v2h-2zM865 597h2v2h-2zM865 599h2v2h-2zM865 601h2v2h-2zM867 603h2v2h-2zM867 609h2v2h-2zM869 603h2v2h-2zM869 609h2v2h-2zM871 603h2v2h-2zM871 609h2v2h-2zM873 597h2v2h-2zM873 599h2v2h-2zM873 601h2v2h-2zM873 603h2v2h-2zM873 605h2v2h-2zM873 607h2v2h-2zM877 597h2v2h-2zM877 599h2v2h-2zM877 601h2v2h-2zM879 603h2v2h-2zM881 603h2v2h-2zM883 603h2v2h-2zM885 597h2v2h-2zM885 599h2v2h-2zM885 601h2v2h-2zM885 603h2v2h-2zM885 605h2v2h-2zM885 607h2v2h-2zM885 609h2v2h-2zM373 627h2v2h-2zM375 619h2v2h-2zM375 621h2v2h-2zM375 623h2v2h-2zM375 625h2v2h-2zM377 619h2v2h-2zM379 619h2v2h-2zM379 621h2v2h-2zM379 623h2v2h-2zM379 625h2v2h-2zM379 627h2v2h-2zM383 619h2v2h-2zM383 621h2v2h-2zM383 623h2v2h-2zM383 625h2v2h-2zM383 627h2v2h-2zM385 623h2v2h-2zM387 621h2v2h-2zM387 623h2v2h-2zM387 625h2v2h-2zM389 619h2v2h-2zM389 627h2v2h-2zM391 621h2v2h-2zM391 623h2v2h-2zM391 625h2v2h-2zM395 619h2v2h-2zM395 621h2v2h-2zM395 623h2v2h-2zM395 625h2v2h-2zM397 617h2v2h-2zM397 621h2v2h-2zM397 627h2v2h-2zM399 617h2v2h-2zM399 621h2v2h-2zM399 627h2v2h-2zM401 615h2v2h-2zM401 623h2v2h-2zM401 625h2v2h-2zM405 621h2v2h-2zM405 625h2v2h-2zM405 627h2v2h-2zM407 619h2v2h-2zM407 623h2v2h-2zM409 619h2v2h-2zM409 623h2v2h-2zM411 619h2v2h-2zM411 621h2v2h-2zM411 623h2v2h-2zM411 625h2v2h-2zM411 627h2v2h-2zM415 625h2v2h-2zM415 629h2v2h-2zM417 625h2v2h-2zM417 627h2v2h-2zM431 621h2v2h-2zM431 623h2v2h-2zM431 625h2v2h-2zM433 619h2v2h-2zM433 627h2v2h-2zM435 619h2v2h-2zM435 627h2v2h-2zM437 619h2v2h-2zM437 627h2v2h-2zM441 619h2v2h-2zM443 619h2v2h-2zM443 621h2v2h-2zM443 623h2v2h-2zM443 625h2v2h-2zM443 627h2v2h-2zM445 621h2v2h-2zM445 627h2v2h-2zM447 621h2v2h-2zM447 627h2v2h-2zM449 623h2v2h-2zM449 625h2v2h-2zM453 621h2v2h-2zM453 623h2v2h-2zM453 625h2v2h-2zM455 619h2v2h-2zM455 623h2v2h-2zM455 627h2v2h-2zM457 619h2v2h-2zM457 623h2v2h-2zM457 627h2v2h-2zM459 621h2v2h-2zM459 623h2v2h-2zM459 627h2v2h-2zM463 619h2v2h-2zM463 621h2v2h-2zM463 623h2v2h-2zM463 625h2v2h-2zM463 627h2v2h-2zM465 627h2v2h-2zM467 619h2v2h-2zM467 621h2v2h-2zM467 623h2v2h-2zM467 625h2v2h-2zM467 627h2v2h-2zM469 627h2v2h-2zM471 619h2v2h-2zM471 621h2v2h-2zM471 623h2v2h-2zM471 625h2v2h-2zM471 627h2v2h-2zM475 619h2v2h-2zM475 621h2v2h-2zM475 623h2v2h-2zM475 625h2v2h-2zM475 627h2v2h-2zM477 621h2v2h-2zM477 627h2v2h-2zM479 621h2v2h-2zM479 627h2v2h-2zM481 623h2v2h-2zM481 625h2v2h-2zM495 619h2v2h-2zM495 621h2v2h-2zM495 623h2v2h-2zM495 625h2v2h-2zM495 627h2v2h-2zM497 627h2v2h-2zM499 619h2v2h-2zM499 621h2v2h-2zM499 623h2v2h-2zM499 625h2v2h-2zM499 627h2v2h-2zM501 627h2v2h-2zM503 619h2v2h-2zM503 621h2v2h-2zM503 623h2v2h-2zM503 625h2v2h-2zM503 627h2v2h-2zM505 627h2v2h-2zM505 629h2v2h-2zM509 619h2v2h-2zM509 621h2v2h-2zM509 623h2v2h-2zM509 625h2v2h-2zM509 627h2v2h-2zM511 625h2v2h-2zM513 623h2v2h-2zM515 619h2v2h-2zM515 621h2v2h-2zM515 623h2v2h-2zM515 625h2v2h-2zM515 627h2v2h-2zM519 619h2v2h-2zM519 621h2v2h-2zM519 623h2v2h-2zM519 625h2v2h-2zM519 627h2v2h-2zM521 619h2v2h-2zM523 619h2v2h-2zM525 619h2v2h-2zM525 621h2v2h-2zM525 623h2v2h-2zM525 625h2v2h-2zM525 627h2v2h-2zM529 619h2v2h-2zM529 621h2v2h-2zM529 623h2v2h-2zM529 625h2v2h-2zM529 627h2v2h-2zM531 627h2v2h-2zM533 627h2v2h-2zM535 619h2v2h-2zM535 621h2v2h-2zM535 623h2v2h-2zM535 625h2v2h-2zM535 627h2v2h-2zM537 627h2v2h-2zM537 629h2v2h-2zM541 619h2v2h-2zM541 621h2v2h-2zM541 623h2v2h-2zM541 625h2v2h-2zM541 627h2v2h-2zM543 621h2v2h-2zM543 627h2v2h-2zM545 623h2v2h-2zM545 625h2v2h-2zM549 619h2v2h-2zM549 621h2v2h-2zM549 623h2v2h-2zM549 625h2v2h-2zM549 627h2v2h-2zM553 625h2v2h-2zM553 629h2v2h-2zM555 625h2v2h-2zM555 627h2v2h-2zM569 621h2v2h-2zM571 621h2v2h-2zM573 621h2v2h-2zM575 621h2v2h-2zM589 619h2v2h-2zM589 621h2v2h-2zM589 623h2v2h-2zM589 625h2v2h-2zM589 627h2v2h-2zM591 619h2v2h-2zM591 623h2v2h-2zM591 627h2v2h-2zM593 619h2v2h-2zM593 623h2v2h-2zM593 627h2v2h-2zM595 621h2v2h-2zM595 625h2v2h-2zM599 619h2v2h-2zM599 627h2v2h-2zM601 619h2v2h-2zM601 623h2v2h-2zM601 627h2v2h-2zM603 619h2v2h-2zM603 623h2v2h-2zM603 627h2v2h-2zM605 621h2v2h-2zM605 625h2v2h-2zM609 627h2v2h-2zM609 629h2v2h-2zM611 621h2v2h-2zM611 623h2v2h-2zM611 625h2v2h-2zM611 627h2v2h-2zM613 619h2v2h-2zM613 627h2v2h-2zM615 619h2v2h-2zM615 621h2v2h-2zM615 623h2v2h-2zM615 625h2v2h-2zM615 627h2v2h-2zM617 627h2v2h-2zM617 629h2v2h-2zM621 621h2v2h-2zM621 623h2v2h-2zM621 625h2v2h-2zM623 619h2v2h-2zM623 627h2v2h-2zM625 619h2v2h-2zM625 627h2v2h-2zM627 621h2v2h-2zM627 623h2v2h-2zM627 625h2v2h-2zM631 619h2v2h-2zM631 627h2v2h-2zM633 621h2v2h-2zM633 625h2v2h-2zM635 623h2v2h-2zM637 621h2v2h-2zM637 625h2v2h-2zM639 619h2v2h-2zM639 627h2v2h-2zM643 619h2v2h-2zM643 621h2v2h-2zM643 623h2v2h-2zM643 625h2v2h-2zM643 627h2v2h-2zM645 623h2v2h-2zM647 623h2v2h-2zM649 619h2v2h-2zM649 621h2v2h-2zM649 623h2v2h-2zM649 625h2v2h-2zM649 627h2v2h-2zM653 615h2v2h-2zM653 621h2v2h-2zM653 623h2v2h-2zM653 625h2v2h-2zM655 619h2v2h-2zM655 623h2v2h-2zM655 627h2v2h-2zM657 619h2v2h-2zM657 623h2v2h-2zM657 627h2v2h-2zM659 615h2v2h-2zM659 621h2v2h-2zM659 623h2v2h-2zM659 627h2v2h-2zM663 619h2v2h-2zM665 619h2v2h-2zM667 619h2v2h-2zM667 621h2v2h-2zM667 623h2v2h-2zM667 625h2v2h-2zM667 627h2v2h-2zM669 619h2v2h-2zM671 619h2v2h-2zM685 619h2v2h-2zM685 621h2v2h-2zM685 623h2v2h-2zM685 625h2v2h-2zM685 627h2v2h-2zM687 621h2v2h-2zM689 623h2v2h-2zM691 621h2v2h-2zM693 619h2v2h-2zM693 621h2v2h-2zM693 623h2v2h-2zM693 625h2v2h-2zM693 627h2v2h-2zM697 619h2v2h-2zM697 627h2v2h-2zM699 619h2v2h-2zM699 623h2v2h-2zM699 627h2v2h-2zM701 619h2v2h-2zM701 623h2v2h-2zM701 627h2v2h-2zM703 621h2v2h-2zM703 623h2v2h-2zM703 625h2v2h-2zM707 619h2v2h-2zM707 621h2v2h-2zM707 623h2v2h-2zM707 625h2v2h-2zM707 627h2v2h-2zM707 629h2v2h-2zM709 619h2v2h-2zM709 627h2v2h-2zM711 619h2v2h-2zM711 627h2v2h-2zM713 621h2v2h-2zM713 623h2v2h-2zM713 625h2v2h-2zM717 625h2v2h-2zM717 629h2v2h-2zM719 625h2v2h-2zM719 627h2v2h-2zM733 621h2v2h-2zM735 621h2v2h-2zM737 621h2v2h-2zM739 621h2v2h-2zM753 619h2v2h-2zM753 621h2v2h-2zM753 623h2v2h-2zM753 625h2v2h-2zM753 627h2v2h-2zM755 623h2v2h-2zM757 621h2v2h-2zM757 625h2v2h-2zM759 619h2v2h-2zM759 627h2v2h-2zM763 625h2v2h-2zM765 619h2v2h-2zM765 623h2v2h-2zM765 627h2v2h-2zM767 619h2v2h-2zM767 623h2v2h-2zM767 627h2v2h-2zM769 621h2v2h-2zM769 623h2v2h-2zM769 625h2v2h-2zM769 627h2v2h-2zM773 619h2v2h-2zM773 621h2v2h-2zM773 623h2v2h-2zM773 625h2v2h-2zM773 627h2v2h-2zM775 615h2v2h-2zM775 625h2v2h-2zM777 615h2v2h-2zM777 623h2v2h-2zM779 619h2v2h-2zM779 621h2v2h-2zM779 623h2v2h-2zM779 625h2v2h-2zM779 627h2v2h-2zM783 621h2v2h-2zM783 623h2v2h-2zM783 625h2v2h-2zM785 619h2v2h-2zM785 627h2v2h-2zM787 619h2v2h-2zM787 621h2v2h-2zM787 623h2v2h-2zM787 625h2v2h-2zM787 627h2v2h-2zM787 629h2v2h-2zM789 619h2v2h-2zM789 627h2v2h-2zM791 621h2v2h-2zM791 623h2v2h-2zM791 625h2v2h-2zM805 619h2v2h-2zM805 621h2v2h-2zM805 625h2v2h-2zM805 627h2v2h-2zM807 623h2v2h-2zM809 619h2v2h-2zM809 621h2v2h-2zM809 623h2v2h-2zM809 625h2v2h-2zM809 627h2v2h-2zM811 623h2v2h-2zM813 619h2v2h-2zM813 621h2v2h-2zM813 625h2v2h-2zM813 627h2v2h-2zM817 619h2v2h-2zM817 621h2v2h-2zM817 623h2v2h-2zM817 625h2v2h-2zM817 627h2v2h-2zM819 619h2v2h-2zM821 619h2v2h-2zM823 619h2v2h-2zM827 619h2v2h-2zM827 621h2v2h-2zM827 623h2v2h-2zM829 625h2v2h-2zM829 629h2v2h-2zM831 625h2v2h-2zM831 629h2v2h-2zM833 619h2v2h-2zM833 621h2v2h-2zM833 623h2v2h-2zM833 625h2v2h-2zM833 627h2v2h-2zM837 619h2v2h-2zM837 621h2v2h-2zM839 623h2v2h-2zM841 623h2v2h-2zM843 619h2v2h-2zM843 621h2v2h-2zM843 623h2v2h-2zM843 625h2v2h-2zM843 627h2v2h-2zM373 635h2v2h-2zM373 645h2v2h-2zM375 633h2v2h-2zM375 635h2v2h-2zM375 637h2v2h-2zM375 639h2v2h-2zM375 641h2v2h-2zM375 643h2v2h-2zM375 645h2v2h-2zM377 645h2v2h-2zM381 635h2v2h-2zM381 641h2v2h-2zM381 643h2v2h-2zM381 645h2v2h-2zM383 633h2v2h-2zM383 639h2v2h-2zM383 645h2v2h-2zM385 633h2v2h-2zM385 639h2v2h-2zM385 645h2v2h-2zM387 633h2v2h-2zM387 639h2v2h-2zM387 645h2v2h-2zM389 635h2v2h-2zM389 637h2v2h-2zM389 645h2v2h-2zM393 633h2v2h-2zM393 643h2v2h-2zM395 633h2v2h-2zM395 645h2v2h-2zM397 633h2v2h-2zM397 637h2v2h-2zM397 645h2v2h-2zM399 633h2v2h-2zM399 637h2v2h-2zM399 645h2v2h-2zM401 633h2v2h-2zM401 635h2v2h-2zM401 639h2v2h-2zM401 641h2v2h-2zM401 643h2v2h-2zM405 641h2v2h-2zM405 643h2v2h-2zM407 639h2v2h-2zM407 643h2v2h-2zM409 637h2v2h-2zM409 643h2v2h-2zM411 635h2v2h-2zM411 643h2v2h-2zM413 633h2v2h-2zM413 635h2v2h-2zM413 637h2v2h-2zM413 639h2v2h-2zM413 641h2v2h-2zM413 643h2v2h-2zM413 645h2v2h-2zM415 643h2v2h-2zM419 633h2v2h-2zM419 635h2v2h-2zM419 637h2v2h-2zM419 643h2v2h-2zM421 633h2v2h-2zM421 637h2v2h-2zM421 645h2v2h-2zM423 633h2v2h-2zM423 637h2v2h-2zM423 645h2v2h-2zM425 633h2v2h-2zM425 637h2v2h-2zM425 645h2v2h-2zM427 633h2v2h-2zM427 639h2v2h-2zM427 641h2v2h-2zM427 643h2v2h-2zM431 635h2v2h-2zM431 637h2v2h-2zM431 639h2v2h-2zM431 641h2v2h-2zM431 643h2v2h-2zM433 633h2v2h-2zM433 639h2v2h-2zM433 645h2v2h-2zM435 633h2v2h-2zM435 639h2v2h-2zM435 645h2v2h-2zM437 633h2v2h-2zM437 639h2v2h-2zM437 645h2v2h-2zM439 635h2v2h-2zM439 641h2v2h-2zM439 643h2v2h-2zM443 633h2v2h-2zM443 645h2v2h-2zM445 633h2v2h-2zM445 643h2v2h-2zM447 633h2v2h-2zM447 641h2v2h-2zM449 633h2v2h-2zM449 639h2v2h-2zM451 633h2v2h-2zM451 635h2v2h-2zM451 637h2v2h-2zM455 635h2v2h-2zM455 637h2v2h-2zM455 641h2v2h-2zM455 643h2v2h-2zM457 633h2v2h-2zM457 639h2v2h-2zM457 645h2v2h-2zM459 633h2v2h-2zM459 639h2v2h-2zM459 645h2v2h-2zM461 633h2v2h-2zM461 639h2v2h-2zM461 645h2v2h-2zM463 635h2v2h-2zM463 637h2v2h-2zM463 641h2v2h-2zM463 643h2v2h-2zM467 635h2v2h-2zM467 637h2v2h-2zM467 643h2v2h-2zM469 633h2v2h-2zM469 639h2v2h-2zM469 645h2v2h-2zM471 633h2v2h-2zM471 639h2v2h-2zM471 645h2v2h-2zM473 633h2v2h-2zM473 639h2v2h-2zM473 645h2v2h-2zM475 635h2v2h-2zM475 637h2v2h-2zM475 639h2v2h-2zM475 641h2v2h-2zM475 643h2v2h-2zM479 635h2v2h-2zM479 637h2v2h-2zM479 639h2v2h-2zM479 641h2v2h-2zM479 643h2v2h-2zM481 633h2v2h-2zM481 641h2v2h-2zM481 645h2v2h-2zM483 633h2v2h-2zM483 639h2v2h-2zM483 645h2v2h-2zM485 633h2v2h-2zM485 637h2v2h-2zM485 645h2v2h-2zM487 635h2v2h-2zM487 637h2v2h-2zM487 639h2v2h-2zM487 641h2v2h-2zM487 643h2v2h-2zM491 647h2v2h-2zM493 647h2v2h-2zM495 647h2v2h-2zM497 647h2v2h-2zM501 637h2v2h-2zM501 639h2v2h-2zM501 643h2v2h-2zM501 647h2v2h-2zM503 637h2v2h-2zM503 639h2v2h-2zM503 643h2v2h-2zM503 645h2v2h-2zM517 643h2v2h-2zM517 645h2v2h-2zM519 643h2v2h-2zM519 645h2v2h-2zM523 643h2v2h-2zM523 647h2v2h-2zM525 643h2v2h-2zM525 645h2v2h-2zM529 637h2v2h-2zM529 639h2v2h-2zM529 643h2v2h-2zM529 645h2v2h-2zM531 637h2v2h-2zM531 639h2v2h-2zM531 643h2v2h-2zM531 645h2v2h-2zM535 637h2v2h-2zM535 639h2v2h-2zM535 643h2v2h-2zM535 647h2v2h-2zM537 637h2v2h-2zM537 639h2v2h-2zM537 643h2v2h-2zM537 645h2v2h-2zM551 639h2v2h-2zM553 639h2v2h-2zM555 635h2v2h-2zM555 637h2v2h-2zM555 639h2v2h-2zM555 641h2v2h-2zM555 643h2v2h-2zM557 639h2v2h-2zM559 639h2v2h-2zM563 639h2v2h-2zM565 639h2v2h-2zM567 639h2v2h-2zM569 639h2v2h-2zM573 639h2v2h-2zM575 635h2v2h-2zM575 639h2v2h-2zM575 643h2v2h-2zM577 637h2v2h-2zM577 639h2v2h-2zM577 641h2v2h-2zM579 635h2v2h-2zM579 639h2v2h-2zM579 643h2v2h-2zM581 639h2v2h-2zM585 645h2v2h-2zM585 647h2v2h-2zM587 641h2v2h-2zM587 643h2v2h-2zM589 637h2v2h-2zM589 639h2v2h-2zM591 633h2v2h-2zM591 635h2v2h-2zM595 637h2v2h-2zM595 641h2v2h-2zM597 637h2v2h-2zM597 641h2v2h-2zM599 637h2v2h-2zM599 641h2v2h-2zM601 637h2v2h-2zM601 641h2v2h-2zM605 643h2v2h-2zM605 647h2v2h-2zM607 643h2v2h-2zM607 645h2v2h-2zM621 637h2v2h-2zM621 643h2v2h-2zM623 635h2v2h-2zM623 639h2v2h-2zM623 643h2v2h-2zM625 633h2v2h-2zM625 635h2v2h-2zM625 637h2v2h-2zM625 639h2v2h-2zM625 641h2v2h-2zM625 643h2v2h-2zM625 645h2v2h-2zM627 635h2v2h-2zM627 639h2v2h-2zM627 643h2v2h-2zM629 635h2v2h-2zM629 641h2v2h-2zM633 633h2v2h-2zM633 635h2v2h-2zM633 637h2v2h-2zM633 639h2v2h-2zM633 641h2v2h-2zM633 643h2v2h-2zM633 645h2v2h-2zM633 647h2v2h-2zM637 635h2v2h-2zM637 637h2v2h-2zM637 641h2v2h-2zM637 643h2v2h-2zM639 633h2v2h-2zM639 639h2v2h-2zM639 645h2v2h-2zM641 633h2v2h-2zM641 637h2v2h-2zM641 641h2v2h-2zM641 645h2v2h-2zM643 635h2v2h-2zM643 641h2v2h-2zM643 645h2v2h-2zM645 639h2v2h-2zM645 643h2v2h-2zM649 637h2v2h-2zM651 635h2v2h-2zM653 633h2v2h-2zM655 635h2v2h-2zM657 637h2v2h-2zM661 643h2v2h-2zM661 647h2v2h-2zM663 643h2v2h-2zM663 645h2v2h-2zM677 635h2v2h-2zM677 637h2v2h-2zM677 639h2v2h-2zM677 645h2v2h-2zM679 635h2v2h-2zM679 639h2v2h-2zM679 643h2v2h-2zM681 635h2v2h-2zM681 637h2v2h-2zM681 641h2v2h-2zM683 639h2v2h-2zM683 643h2v2h-2zM683 645h2v2h-2zM685 637h2v2h-2zM685 641h2v2h-2zM685 645h2v2h-2zM687 635h2v2h-2zM687 641h2v2h-2zM687 643h2v2h-2zM687 645h2v2h-2zM691 637h2v2h-2zM691 641h2v2h-2zM693 635h2v2h-2zM693 637h2v2h-2zM693 639h2v2h-2zM693 641h2v2h-2zM693 643h2v2h-2zM695 637h2v2h-2zM695 641h2v2h-2zM697 635h2v2h-2zM697 637h2v2h-2zM697 639h2v2h-2zM697 641h2v2h-2zM697 643h2v2h-2zM699 637h2v2h-2zM699 641h2v2h-2zM703 635h2v2h-2zM703 637h2v2h-2zM703 639h2v2h-2zM703 641h2v2h-2zM703 643h2v2h-2zM705 633h2v2h-2zM705 645h2v2h-2zM707 633h2v2h-2zM707 637h2v2h-2zM707 639h2v2h-2zM707 641h2v2h-2zM707 645h2v2h-2zM709 633h2v2h-2zM709 637h2v2h-2zM709 641h2v2h-2zM709 645h2v2h-2zM711 635h2v2h-2zM711 637h2v2h-2zM711 639h2v2h-2zM715 643h2v2h-2zM715 647h2v2h-2zM717 643h2v2h-2zM717 645h2v2h-2zM731 633h2v2h-2zM731 635h2v2h-2zM731 637h2v2h-2zM731 639h2v2h-2zM731 641h2v2h-2zM731 645h2v2h-2zM735 635h2v2h-2zM737 633h2v2h-2zM739 633h2v2h-2zM739 641h2v2h-2zM739 645h2v2h-2zM741 633h2v2h-2zM741 639h2v2h-2zM743 635h2v2h-2zM743 637h2v2h-2zM747 633h2v2h-2zM747 635h2v2h-2zM749 637h2v2h-2zM749 639h2v2h-2zM751 641h2v2h-2zM751 643h2v2h-2zM753 645h2v2h-2zM753 647h2v2h-2zM757 643h2v2h-2zM757 647h2v2h-2zM759 643h2v2h-2zM759 645h2v2h-2zM773 633h2v2h-2zM773 635h2v2h-2zM773 637h2v2h-2zM773 639h2v2h-2zM773 641h2v2h-2zM773 643h2v2h-2zM773 645h2v2h-2zM773 647h2v2h-2zM775 633h2v2h-2zM775 647h2v2h-2zM779 633h2v2h-2zM779 647h2v2h-2zM781 633h2v2h-2zM781 635h2v2h-2zM781 637h2v2h-2zM781 639h2v2h-2zM781 641h2v2h-2zM781 643h2v2h-2zM781 645h2v2h-2zM781 647h2v2h-2zM795 635h2v2h-2zM795 637h2v2h-2zM795 639h2v2h-2zM795 641h2v2h-2zM795 643h2v2h-2zM795 645h2v2h-2zM797 633h2v2h-2zM797 647h2v2h-2zM801 633h2v2h-2zM801 647h2v2h-2zM803 635h2v2h-2zM803 637h2v2h-2zM803 639h2v2h-2zM803 641h2v2h-2zM803 643h2v2h-2zM803 645h2v2h-2zM807 643h2v2h-2zM807 647h2v2h-2zM809 643h2v2h-2zM809 645h2v2h-2zM823 633h2v2h-2zM823 635h2v2h-2zM823 637h2v2h-2zM827 635h2v2h-2zM827 637h2v2h-2zM827 639h2v2h-2zM827 641h2v2h-2zM827 643h2v2h-2zM827 645h2v2h-2zM829 633h2v2h-2zM829 639h2v2h-2zM831 633h2v2h-2zM831 639h2v2h-2zM833 633h2v2h-2zM833 639h2v2h-2zM835 635h2v2h-2zM835 637h2v2h-2zM835 639h2v2h-2zM835 641h2v2h-2zM835 643h2v2h-2zM835 645h2v2h-2zM839 633h2v2h-2zM839 635h2v2h-2zM839 637h2v2h-2zM843 643h2v2h-2zM843 647h2v2h-2zM845 643h2v2h-2zM845 645h2v2h-2zM859 633h2v2h-2zM859 635h2v2h-2zM859 637h2v2h-2zM863 633h2v2h-2zM863 635h2v2h-2zM863 637h2v2h-2zM867 633h2v2h-2zM867 635h2v2h-2zM867 637h2v2h-2zM867 639h2v2h-2zM867 641h2v2h-2zM867 643h2v2h-2zM867 645h2v2h-2zM869 633h2v2h-2zM869 639h2v2h-2zM869 645h2v2h-2zM871 633h2v2h-2zM871 639h2v2h-2zM871 645h2v2h-2zM873 633h2v2h-2zM873 639h2v2h-2zM873 645h2v2h-2zM875 635h2v2h-2zM875 637h2v2h-2zM875 641h2v2h-2zM875 643h2v2h-2zM879 633h2v2h-2zM879 635h2v2h-2zM879 637h2v2h-2zM883 633h2v2h-2zM883 635h2v2h-2zM883 637h2v2h-2zM373 653h2v2h-2zM373 655h2v2h-2zM373 657h2v2h-2zM373 659h2v2h-2zM373 661h2v2h-2zM373 663h2v2h-2zM375 651h2v2h-2zM375 657h2v2h-2zM377 651h2v2h-2zM377 657h2v2h-2zM379 651h2v2h-2zM379 657h2v2h-2zM381 653h2v2h-2zM381 655h2v2h-2zM381 657h2v2h-2zM381 659h2v2h-2zM381 661h2v2h-2zM381 663h2v2h-2zM385 651h2v2h-2zM385 653h2v2h-2zM385 655h2v2h-2zM385 657h2v2h-2zM385 659h2v2h-2zM385 661h2v2h-2zM385 663h2v2h-2zM385 665h2v2h-2zM389 651h2v2h-2zM389 653h2v2h-2zM389 655h2v2h-2zM389 657h2v2h-2zM389 659h2v2h-2zM389 661h2v2h-2zM389 663h2v2h-2zM391 651h2v2h-2zM391 657h2v2h-2zM391 663h2v2h-2zM393 651h2v2h-2zM393 657h2v2h-2zM393 663h2v2h-2zM395 651h2v2h-2zM395 657h2v2h-2zM395 663h2v2h-2zM397 653h2v2h-2zM397 655h2v2h-2zM397 659h2v2h-2zM397 661h2v2h-2zM401 655h2v2h-2zM401 657h2v2h-2zM401 661h2v2h-2zM401 663h2v2h-2zM403 655h2v2h-2zM403 657h2v2h-2zM403 661h2v2h-2zM403 663h2v2h-2zM407 653h2v2h-2zM407 663h2v2h-2zM409 651h2v2h-2zM409 653h2v2h-2zM409 655h2v2h-2zM409 657h2v2h-2zM409 659h2v2h-2zM409 661h2v2h-2zM409 663h2v2h-2zM411 663h2v2h-2zM415 655h2v2h-2zM415 657h2v2h-2zM415 661h2v2h-2zM415 665h2v2h-2zM417 655h2v2h-2zM417 657h2v2h-2zM417 661h2v2h-2zM417 663h2v2h-2zM431 653h2v2h-2zM431 655h2v2h-2zM431 657h2v2h-2zM431 659h2v2h-2zM431 661h2v2h-2zM433 651h2v2h-2zM433 663h2v2h-2zM435 651h2v2h-2zM435 655h2v2h-2zM435 657h2v2h-2zM435 659h2v2h-2zM435 663h2v2h-2zM437 651h2v2h-2zM437 655h2v2h-2zM437 659h2v2h-2zM437 663h2v2h-2zM439 653h2v2h-2zM439 655h2v2h-2zM439 657h2v2h-2zM443 653h2v2h-2zM443 655h2v2h-2zM443 663h2v2h-2zM445 651h2v2h-2zM445 657h2v2h-2zM445 663h2v2h-2zM447 651h2v2h-2zM447 657h2v2h-2zM447 663h2v2h-2zM449 651h2v2h-2zM449 657h2v2h-2zM449 663h2v2h-2zM451 651h2v2h-2zM451 659h2v2h-2zM451 661h2v2h-2zM455 653h2v2h-2zM455 655h2v2h-2zM455 659h2v2h-2zM455 661h2v2h-2zM457 651h2v2h-2zM457 657h2v2h-2zM457 663h2v2h-2zM459 651h2v2h-2zM459 655h2v2h-2zM459 659h2v2h-2zM459 663h2v2h-2zM461 653h2v2h-2zM461 659h2v2h-2zM461 663h2v2h-2zM463 657h2v2h-2zM463 661h2v2h-2zM467 651h2v2h-2zM467 653h2v2h-2zM467 655h2v2h-2zM467 657h2v2h-2zM467 659h2v2h-2zM467 661h2v2h-2zM467 663h2v2h-2zM469 651h2v2h-2zM469 657h2v2h-2zM471 651h2v2h-2zM471 657h2v2h-2zM471 659h2v2h-2zM473 651h2v2h-2zM473 657h2v2h-2zM473 661h2v2h-2zM475 653h2v2h-2zM475 655h2v2h-2zM475 663h2v2h-2zM479 661h2v2h-2zM479 663h2v2h-2zM481 661h2v2h-2zM481 663h2v2h-2zM485 653h2v2h-2zM485 659h2v2h-2zM485 661h2v2h-2zM485 663h2v2h-2zM487 651h2v2h-2zM487 657h2v2h-2zM487 663h2v2h-2zM489 651h2v2h-2zM489 657h2v2h-2zM489 663h2v2h-2zM491 651h2v2h-2zM491 657h2v2h-2zM491 663h2v2h-2zM493 653h2v2h-2zM493 655h2v2h-2zM493 663h2v2h-2zM497 655h2v2h-2zM497 659h2v2h-2zM499 655h2v2h-2zM499 659h2v2h-2zM501 655h2v2h-2zM501 659h2v2h-2zM503 655h2v2h-2zM503 659h2v2h-2zM507 651h2v2h-2zM507 661h2v2h-2zM509 651h2v2h-2zM509 663h2v2h-2zM511 651h2v2h-2zM511 655h2v2h-2zM511 663h2v2h-2zM513 651h2v2h-2zM513 655h2v2h-2zM513 663h2v2h-2zM515 651h2v2h-2zM515 653h2v2h-2zM515 657h2v2h-2zM515 659h2v2h-2zM515 661h2v2h-2zM519 661h2v2h-2zM519 665h2v2h-2zM521 661h2v2h-2zM521 663h2v2h-2zM535 651h2v2h-2zM535 653h2v2h-2zM535 655h2v2h-2zM535 657h2v2h-2zM535 659h2v2h-2zM535 661h2v2h-2zM535 663h2v2h-2zM535 665h2v2h-2zM537 651h2v2h-2zM537 665h2v2h-2zM541 653h2v2h-2zM541 655h2v2h-2zM541 657h2v2h-2zM541 659h2v2h-2zM541 661h2v2h-2zM543 651h2v2h-2zM543 663h2v2h-2zM545 651h2v2h-2zM545 659h2v2h-2zM545 663h2v2h-2zM547 651h2v2h-2zM547 661h2v2h-2zM549 653h2v2h-2zM549 655h2v2h-2zM549 657h2v2h-2zM549 659h2v2h-2zM549 663h2v2h-2zM553 651h2v2h-2zM553 653h2v2h-2zM553 655h2v2h-2zM557 651h2v2h-2zM557 653h2v2h-2zM557 655h2v2h-2zM561 659h2v2h-2zM561 661h2v2h-2zM563 657h2v2h-2zM563 661h2v2h-2zM565 655h2v2h-2zM565 661h2v2h-2zM567 653h2v2h-2zM567 661h2v2h-2zM569 651h2v2h-2zM569 653h2v2h-2zM569 655h2v2h-2zM569 657h2v2h-2zM569 659h2v2h-2zM569 661h2v2h-2zM569 663h2v2h-2zM571 661h2v2h-2zM575 651h2v2h-2zM575 653h2v2h-2zM575 655h2v2h-2zM579 651h2v2h-2zM579 653h2v2h-2zM579 655h2v2h-2zM583 663h2v2h-2zM583 665h2v2h-2zM585 659h2v2h-2zM585 661h2v2h-2zM587 655h2v2h-2zM587 657h2v2h-2zM589 651h2v2h-2zM589 653h2v2h-2zM593 651h2v2h-2zM593 653h2v2h-2zM593 655h2v2h-2zM593 661h2v2h-2zM595 651h2v2h-2zM595 655h2v2h-2zM595 663h2v2h-2zM597 651h2v2h-2zM597 655h2v2h-2zM597 663h2v2h-2zM599 651h2v2h-2zM599 655h2v2h-2zM599 663h2v2h-2zM601 651h2v2h-2zM601 657h2v2h-2zM601 659h2v2h-2zM601 661h2v2h-2zM605 651h2v2h-2zM605 665h2v2h-2zM607 651h2v2h-2zM607 653h2v2h-2zM607 655h2v2h-2zM607 657h2v2h-2zM607 659h2v2h-2zM607 661h2v2h-2zM607 663h2v2h-2zM607 665h2v2h-2zM621 651h2v2h-2zM621 653h2v2h-2zM621 655h2v2h-2zM625 653h2v2h-2zM625 655h2v2h-2zM625 657h2v2h-2zM625 659h2v2h-2zM625 661h2v2h-2zM627 651h2v2h-2zM627 657h2v2h-2zM627 663h2v2h-2zM629 651h2v2h-2zM629 657h2v2h-2zM629 663h2v2h-2zM631 651h2v2h-2zM631 657h2v2h-2zM631 663h2v2h-2zM633 653h2v2h-2zM633 659h2v2h-2zM633 661h2v2h-2zM637 653h2v2h-2zM637 655h2v2h-2zM637 657h2v2h-2zM637 663h2v2h-2zM639 653h2v2h-2zM639 657h2v2h-2zM639 661h2v2h-2zM641 653h2v2h-2zM641 655h2v2h-2zM641 659h2v2h-2zM643 657h2v2h-2zM643 661h2v2h-2zM643 663h2v2h-2zM645 655h2v2h-2zM645 659h2v2h-2zM645 663h2v2h-2zM647 653h2v2h-2zM647 659h2v2h-2zM647 661h2v2h-2zM647 663h2v2h-2zM651 651h2v2h-2zM651 653h2v2h-2zM653 655h2v2h-2zM653 657h2v2h-2zM655 659h2v2h-2zM655 661h2v2h-2zM657 663h2v2h-2zM657 665h2v2h-2zM661 651h2v2h-2zM661 653h2v2h-2zM661 655h2v2h-2zM661 657h2v2h-2zM661 659h2v2h-2zM661 661h2v2h-2zM661 663h2v2h-2zM663 651h2v2h-2zM663 657h2v2h-2zM663 663h2v2h-2zM665 651h2v2h-2zM665 657h2v2h-2zM665 663h2v2h-2zM667 651h2v2h-2zM667 657h2v2h-2zM667 663h2v2h-2zM669 651h2v2h-2zM669 663h2v2h-2zM673 651h2v2h-2zM673 653h2v2h-2zM673 655h2v2h-2zM687 653h2v2h-2zM687 655h2v2h-2zM687 657h2v2h-2zM687 659h2v2h-2zM687 661h2v2h-2zM687 663h2v2h-2zM689 651h2v2h-2zM689 665h2v2h-2zM693 655h2v2h-2zM693 659h2v2h-2zM695 653h2v2h-2zM695 655h2v2h-2zM695 657h2v2h-2zM695 659h2v2h-2zM695 661h2v2h-2zM697 655h2v2h-2zM697 659h2v2h-2zM699 653h2v2h-2zM699 655h2v2h-2zM699 657h2v2h-2zM699 659h2v2h-2zM699 661h2v2h-2zM701 655h2v2h-2zM701 659h2v2h-2zM705 651h2v2h-2zM705 663h2v2h-2zM707 651h2v2h-2zM707 661h2v2h-2zM709 651h2v2h-2zM709 659h2v2h-2zM711 651h2v2h-2zM711 657h2v2h-2zM713 651h2v2h-2zM713 653h2v2h-2zM713 655h2v2h-2zM717 657h2v2h-2zM719 657h2v2h-2zM721 657h2v2h-2zM723 657h2v2h-2zM727 653h2v2h-2zM727 655h2v2h-2zM727 659h2v2h-2zM727 661h2v2h-2zM729 651h2v2h-2zM729 657h2v2h-2zM729 663h2v2h-2zM731 651h2v2h-2zM731 657h2v2h-2zM731 663h2v2h-2zM733 651h2v2h-2zM733 657h2v2h-2zM733 663h2v2h-2zM735 653h2v2h-2zM735 655h2v2h-2zM735 659h2v2h-2zM735 661h2v2h-2zM739 655h2v2h-2zM739 661h2v2h-2zM741 653h2v2h-2zM741 657h2v2h-2zM741 661h2v2h-2zM743 651h2v2h-2zM743 653h2v2h-2zM743 655h2v2h-2zM743 657h2v2h-2zM743 659h2v2h-2zM743 661h2v2h-2zM743 663h2v2h-2zM745 653h2v2h-2zM745 657h2v2h-2zM745 661h2v2h-2zM747 653h2v2h-2zM747 659h2v2h-2zM751 651h2v2h-2zM751 665h2v2h-2zM753 653h2v2h-2zM753 655h2v2h-2zM753 657h2v2h-2zM753 659h2v2h-2zM753 661h2v2h-2zM753 663h2v2h-2zM767 665h2v2h-2zM769 665h2v2h-2zM771 665h2v2h-2zM773 665h2v2h-2zM777 651h2v2h-2zM777 653h2v2h-2zM777 661h2v2h-2zM777 663h2v2h-2zM779 655h2v2h-2zM779 659h2v2h-2zM781 657h2v2h-2zM783 655h2v2h-2zM783 659h2v2h-2zM785 651h2v2h-2zM785 653h2v2h-2zM785 661h2v2h-2zM785 663h2v2h-2zM789 653h2v2h-2zM791 651h2v2h-2zM793 651h2v2h-2zM793 659h2v2h-2zM793 663h2v2h-2zM795 651h2v2h-2zM795 657h2v2h-2zM797 653h2v2h-2zM797 655h2v2h-2zM801 657h2v2h-2zM803 657h2v2h-2zM805 653h2v2h-2zM805 655h2v2h-2zM805 657h2v2h-2zM805 659h2v2h-2zM805 661h2v2h-2zM807 657h2v2h-2zM809 657h2v2h-2zM813 653h2v2h-2zM813 655h2v2h-2zM813 661h2v2h-2zM815 651h2v2h-2zM815 657h2v2h-2zM815 663h2v2h-2zM817 651h2v2h-2zM817 657h2v2h-2zM817 663h2v2h-2zM819 651h2v2h-2zM819 657h2v2h-2zM819 663h2v2h-2zM821 653h2v2h-2zM821 655h2v2h-2zM821 657h2v2h-2zM821 659h2v2h-2zM821 661h2v2h-2zM825 655h2v2h-2zM827 653h2v2h-2zM829 651h2v2h-2zM831 653h2v2h-2zM833 655h2v2h-2zM837 653h2v2h-2zM837 655h2v2h-2zM837 657h2v2h-2zM837 659h2v2h-2zM837 661h2v2h-2zM839 651h2v2h-2zM839 659h2v2h-2zM839 663h2v2h-2zM841 651h2v2h-2zM841 657h2v2h-2zM841 663h2v2h-2zM843 651h2v2h-2zM843 655h2v2h-2zM843 663h2v2h-2zM845 653h2v2h-2zM845 655h2v2h-2zM845 657h2v2h-2zM845 659h2v2h-2zM845 661h2v2h-2zM849 657h2v2h-2zM851 653h2v2h-2zM851 657h2v2h-2zM851 661h2v2h-2zM853 655h2v2h-2zM853 657h2v2h-2zM853 659h2v2h-2zM855 653h2v2h-2zM855 657h2v2h-2zM855 661h2v2h-2zM857 657h2v2h-2zM861 651h2v2h-2zM861 653h2v2h-2zM861 655h2v2h-2zM861 657h2v2h-2zM861 659h2v2h-2zM861 661h2v2h-2zM861 663h2v2h-2zM863 653h2v2h-2zM865 655h2v2h-2zM867 657h2v2h-2zM869 651h2v2h-2zM869 653h2v2h-2zM869 655h2v2h-2zM869 657h2v2h-2zM869 659h2v2h-2zM869 661h2v2h-2zM869 663h2v2h-2zM873 651h2v2h-2zM873 653h2v2h-2zM873 655h2v2h-2zM873 657h2v2h-2zM873 659h2v2h-2zM873 663h2v2h-2z" fill="#ffffff"/></g></svg><svg class="a" style="left:375px;top:718px;" width="14" height="14" viewBox="0 0 14 14"><circle cx="7" cy="7" r="6" fill="#fff" stroke="#333" stroke-width="1"/><circle cx="7" cy="7" r="3.5" fill="#1a1a1a"/></svg><div class="t" style="left:392.3px;top:717.5px;font-size:12px;line-height:16px;color:#000;transform:scaleX(1.0266);transform-origin:0 0;">Пропорциональный</div><svg class="a" style="left:517px;top:718px;" width="14" height="14" viewBox="0 0 14 14"><circle cx="7" cy="7" r="6" fill="#fff" stroke="#333" stroke-width="1"/></svg><div class="t" style="left:534.7px;top:717.5px;font-size:12px;line-height:16px;color:#000;transform:scaleX(1.0454);transform-origin:0 0;">Моноширинный</div><div class="a" style="left:1082px;top:713px;width:50px;height:23px;background:#ffffff;border:1px solid #7a7a7a;box-sizing:border-box;"></div><div class="t" style="left:1086px;top:716px;font-size:12px;line-height:16px;color:#000;">1</div><div class="a" style="left:1115px;top:715px;width:15px;height:9px;background:#e6e6e6;border:1px solid #adadad;box-sizing:border-box;"></div><div class="a" style="left:1115px;top:725px;width:15px;height:9px;background:#e6e6e6;border:1px solid #adadad;box-sizing:border-box;"></div><svg class="a" style="left:1119px;top:717px;" width="8" height="5" viewBox="0 0 8 5"><path d="M0.5 4.5L4 1L7.5 4.5Z" fill="#000"/></svg><svg class="a" style="left:1119px;top:727px;" width="8" height="5" viewBox="0 0 8 5"><path d="M0.5 0.5L4 4L7.5 0.5Z" fill="#000"/></svg><div class="a" style="left:1142px;top:713px;width:50px;height:23px;background:#ffffff;border:1px solid #7a7a7a;box-sizing:border-box;"></div><div class="t" style="left:1146px;top:716px;font-size:12px;line-height:16px;color:#000;">1</div><div class="a" style="left:1175px;top:715px;width:15px;height:9px;background:#e6e6e6;border:1px solid #adadad;box-sizing:border-box;"></div><div class="a" style="left:1175px;top:725px;width:15px;height:9px;background:#e6e6e6;border:1px solid #adadad;box-sizing:border-box;"></div><svg class="a" style="left:1179px;top:717px;" width="8" height="5" viewBox="0 0 8 5"><path d="M0.5 4.5L4 1L7.5 4.5Z" fill="#000"/></svg><svg class="a" style="left:1179px;top:727px;" width="8" height="5" viewBox="0 0 8 5"><path d="M0.5 0.5L4 4L7.5 0.5Z" fill="#000"/></svg><svg class="a" style="left:1215px;top:717px;" width="17" height="17" viewBox="0 0 17 17"><g fill="none" stroke="#56c08a" stroke-opacity="0.45" stroke-width="2.8" stroke-linecap="round" stroke-linejoin="round"><path d="M6.4 1.5H16L9.5 8.3L12.6 8.6L1.3 15.6L5.2 9.2L3.1 8.8Z"/></g><g fill="none" stroke="#0f3b27" stroke-width="1.5" stroke-linecap="round" stroke-linejoin="round"><path d="M6.4 1.5H16L9.5 8.3L12.6 8.6L1.3 15.6L5.2 9.2L3.1 8.8Z"/></g></svg><svg class="a" style="left:1255px;top:717px;" width="17" height="17" viewBox="0 0 17 17"><g fill="none" stroke="#56c08a" stroke-opacity="0.45" stroke-width="2.8" stroke-linecap="round" stroke-linejoin="round"><path d="M9.6 1.3L15.2 6.9L7 15.1L1.4 15.2L1.4 9.5Z"/><path d="M8 2.9L13.6 8.5M4.2 11.5L11.3 4.4M5.6 12.9L12.7 5.8" stroke-width="1.1"/><path d="M1.6 11.5L4.8 14.8" stroke-width="1.1"/></g><g fill="none" stroke="#0f3b27" stroke-width="1.5" stroke-linecap="round" stroke-linejoin="round"><path d="M9.6 1.3L15.2 6.9L7 15.1L1.4 15.2L1.4 9.5Z"/><path d="M8 2.9L13.6 8.5M4.2 11.5L11.3 4.4M5.6 12.9L12.7 5.8" stroke-width="1.1"/><path d="M1.6 11.5L4.8 14.8" stroke-width="1.1"/></g></svg><svg class="a" style="left:1295px;top:717px;" width="17" height="17" viewBox="0 0 17 17"><g fill="none" stroke="#56c08a" stroke-opacity="0.45" stroke-width="2.8" stroke-linecap="round" stroke-linejoin="round"><path d="M13.6 7A5.4 5.4 0 0 0 3.4 6.2"/><path d="M3 9.6A5.4 5.4 0 0 0 13.3 10.4"/><path d="M1 4.8L5.2 6.6L2.1 9.3Z M15.5 11.8L11.3 10L14.4 7.3Z" fill="#0f3b27" stroke-width="1"/></g><g fill="none" stroke="#0f3b27" stroke-width="1.5" stroke-linecap="round" stroke-linejoin="round"><path d="M13.6 7A5.4 5.4 0 0 0 3.4 6.2"/><path d="M3 9.6A5.4 5.4 0 0 0 13.3 10.4"/><path d="M1 4.8L5.2 6.6L2.1 9.3Z M15.5 11.8L11.3 10L14.4 7.3Z" fill="#0f3b27" stroke-width="1"/></g></svg><svg class="a" style="left:1335px;top:717px;" width="17" height="17" viewBox="0 0 17 17"><g fill="none" stroke="#56c08a" stroke-opacity="0.45" stroke-width="2.8" stroke-linecap="round" stroke-linejoin="round"><path d="M6.5 1.3H1V15.3H15.5V8.5"/><path d="M4.5 13.5C4.5 8.5 7.5 5 14.8 4.5"/><path d="M11.8 1.3L15 4.5L12 7.8"/></g><g fill="none" stroke="#0f3b27" stroke-width="1.5" stroke-linecap="round" stroke-linejoin="round"><path d="M6.5 1.3H1V15.3H15.5V8.5"/><path d="M4.5 13.5C4.5 8.5 7.5 5 14.8 4.5"/><path d="M11.8 1.3L15 4.5L12 7.8"/></g></svg><div class="a" style="left:367px;top:0px;width:1px;height:746px;background:#8a8a8a;"></div>
</body></html>
